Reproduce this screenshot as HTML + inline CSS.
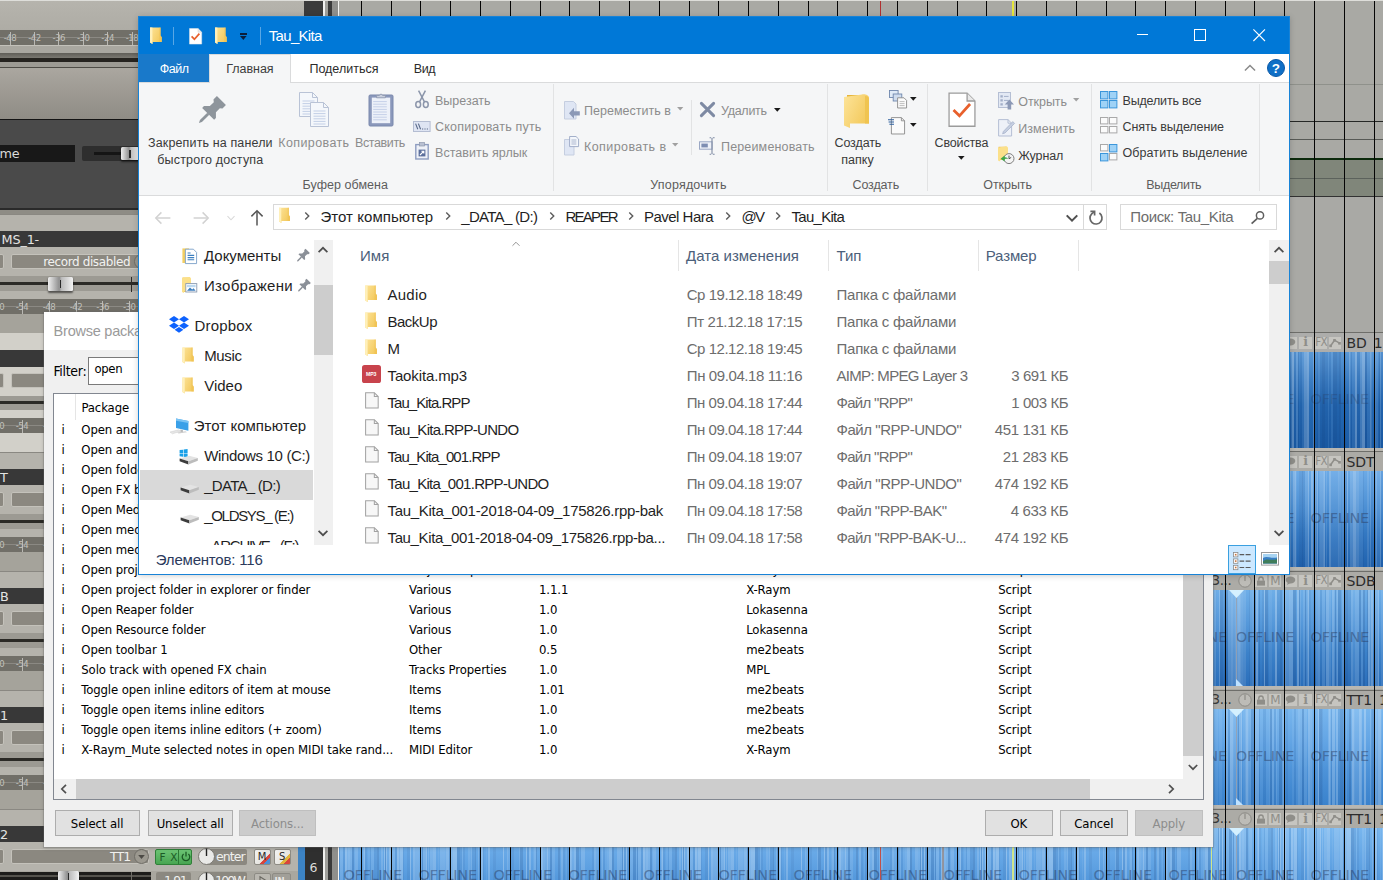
<!DOCTYPE html>
<html><head><meta charset="utf-8"><title>Tau_Kita</title>
<style>
html,body{margin:0;padding:0;background:#a9a9a4;}
body{width:1383px;height:880px;overflow:hidden;position:relative;font-family:"Liberation Sans",sans-serif;}
.a{position:absolute;box-sizing:border-box;}
.t{position:absolute;white-space:pre;}
svg{position:absolute;overflow:visible;}
.off{font-family:'DejaVu Sans',sans-serif;font-size:14.5px;line-height:15px;color:rgba(40,52,84,.62);letter-spacing:-0.3px;}
</style></head>
<body>
<div class="a" style="left:0px;top:0px;width:1383px;height:880px;background:#a9a9a4;overflow:hidden;">
<div class="a" style="left:339.4px;top:84px;width:1043.6px;height:1px;background:#8f918b;"></div>
<div class="a" style="left:339.4px;top:121px;width:1043.6px;height:1px;background:#262826;"></div>
<div class="a" style="left:339.4px;top:139.3px;width:1043.6px;height:1px;background:#585a56;"></div>
<div class="a" style="left:339.4px;top:158.3px;width:1043.6px;height:39px;background:#80867a;"></div>
<div class="a" style="left:339.4px;top:158px;width:1043.6px;height:1.5px;background:#0c2a0c;"></div>
<div class="a" style="left:339.4px;top:177.5px;width:1043.6px;height:1px;background:#5c625c;"></div>
<div class="a" style="left:339.4px;top:196.3px;width:1043.6px;height:1px;background:#323232;"></div>
<div class="a" style="left:339.4px;top:197.3px;width:1043.6px;height:135px;background:#a9a9a5;"></div>
<div class="a" style="left:339.4px;top:332.3px;width:1043.6px;height:20px;background:#adadab;"></div>
<div class="a" style="left:339.4px;top:332.3px;width:1043.6px;height:1px;background:#6e6e6a;"></div>
<div class="a" style="left:339.4px;top:351.9px;width:1043.6px;height:96.2px;overflow:hidden;background:linear-gradient(90deg,rgba(255,255,255,0.26) 0px,rgba(255,255,255,0.26) 1px,rgba(255,255,255,0) 1px,rgba(255,255,255,0) 3.5px,rgba(0,20,70,0.06) 3.5px,rgba(0,20,70,0.06) 5px,rgba(255,255,255,0.14) 5px,rgba(255,255,255,0.14) 7.5px,rgba(255,255,255,0) 7.5px,rgba(255,255,255,0) 8.8px,rgba(0,20,70,0.06) 8.8px,rgba(0,20,70,0.06) 11.8px,rgba(255,255,255,0) 11.8px,rgba(255,255,255,0) 13.8px,rgba(255,255,255,0.2) 13.8px,rgba(255,255,255,0.2) 15.3px,rgba(255,255,255,0.26) 15.3px,rgba(255,255,255,0.26) 16.3px,rgba(255,255,255,0.2) 16.3px,rgba(255,255,255,0.2) 17.6px,rgba(255,255,255,0.26) 17.6px,rgba(255,255,255,0.26) 19.6px,rgba(255,255,255,0.14) 19.6px,rgba(255,255,255,0.14) 21.1px,rgba(255,255,255,0.06) 21.1px,rgba(255,255,255,0.06) 23.6px,rgba(255,255,255,0.2) 23.6px,rgba(255,255,255,0.2) 25.1px,rgba(0,20,70,0.06) 25.1px,rgba(0,20,70,0.06) 26.4px,rgba(0,20,70,0.06) 26.4px,rgba(0,20,70,0.06) 27.9px,rgba(255,255,255,0) 27.9px,rgba(255,255,255,0) 29.9px,rgba(255,255,255,0.1) 29.9px,rgba(255,255,255,0.1) 30.9px,rgba(255,255,255,0.1) 30.9px,rgba(255,255,255,0.1) 32.2px,rgba(0,20,70,0.12) 32.2px,rgba(0,20,70,0.12) 33.7px,rgba(255,255,255,0.1) 33.7px,rgba(255,255,255,0.1) 35.7px,rgba(0,20,70,0.12) 35.7px,rgba(0,20,70,0.12) 37.7px,rgba(255,255,255,0.26) 37.7px,rgba(255,255,255,0.26) 40.2px,rgba(255,255,255,0) 40.2px,rgba(255,255,255,0) 42.7px,rgba(0,20,70,0.12) 42.7px,rgba(0,20,70,0.12) 44.7px,rgba(255,255,255,0.1) 44.7px,rgba(255,255,255,0.1) 46px,rgba(255,255,255,0.1) 46px,rgba(255,255,255,0.1) 48px,rgba(255,255,255,0) 48px,rgba(255,255,255,0) 49px,rgba(255,255,255,0.14) 49px,rgba(255,255,255,0.14) 51.5px,rgba(0,20,70,0.12) 51.5px,rgba(0,20,70,0.12) 52.5px,rgba(255,255,255,0.06) 52.5px,rgba(255,255,255,0.06) 53.5px,rgba(255,255,255,0.2) 53.5px,rgba(255,255,255,0.2) 55.5px,rgba(255,255,255,0) 55.5px,rgba(255,255,255,0) 56.8px,rgba(0,20,70,0.06) 56.8px,rgba(0,20,70,0.06) 57.8px,rgba(255,255,255,0.1) 57.8px,rgba(255,255,255,0.1) 59.1px,rgba(255,255,255,0.26) 59.1px,rgba(255,255,255,0.26) 61.1px,rgba(0,20,70,0.06) 61.1px,rgba(0,20,70,0.06) 63.1px,rgba(255,255,255,0.14) 63.1px,rgba(255,255,255,0.14) 64.6px,rgba(0,20,70,0.12) 64.6px,rgba(0,20,70,0.12) 65.9px,rgba(255,255,255,0) 65.9px,rgba(255,255,255,0) 67.2px,rgba(0,20,70,0.06) 67.2px,rgba(0,20,70,0.06) 68.7px,rgba(255,255,255,0.06) 68.7px,rgba(255,255,255,0.06) 70.2px,rgba(255,255,255,0.06) 70.2px,rgba(255,255,255,0.06) 71.5px,rgba(255,255,255,0.2) 71.5px,rgba(255,255,255,0.2) 74px,rgba(255,255,255,0.26) 74px,rgba(255,255,255,0.26) 76px,rgba(255,255,255,0) 76px,rgba(255,255,255,0) 77.5px,rgba(255,255,255,0) 77.5px,rgba(255,255,255,0) 80.5px,rgba(255,255,255,0.2) 80.5px,rgba(255,255,255,0.2) 82.5px,rgba(255,255,255,0) 82.5px,rgba(255,255,255,0) 84px,rgba(0,20,70,0.06) 84px,rgba(0,20,70,0.06) 85.5px,rgba(255,255,255,0.06) 85.5px,rgba(255,255,255,0.06) 87.5px,rgba(0,20,70,0.06) 87.5px,rgba(0,20,70,0.06) 89.5px,rgba(0,20,70,0.12) 89.5px,rgba(0,20,70,0.12) 91px,rgba(0,20,70,0.12) 91px,rgba(0,20,70,0.12) 92.5px,rgba(0,20,70,0.06) 92.5px,rgba(0,20,70,0.06) 95px,rgba(255,255,255,0.06) 95px,rgba(255,255,255,0.06) 96px,rgba(0,20,70,0.06) 96px,rgba(0,20,70,0.06) 98.5px,rgba(255,255,255,0.06) 98.5px,rgba(255,255,255,0.06) 100.5px,rgba(0,20,70,0.12) 100.5px,rgba(0,20,70,0.12) 102.5px,rgba(0,20,70,0.12) 102.5px,rgba(0,20,70,0.12) 104.5px,rgba(0,20,70,0.06) 104.5px,rgba(0,20,70,0.06) 106.5px,rgba(0,20,70,0.12) 106.5px,rgba(0,20,70,0.12) 107.8px,rgba(255,255,255,0) 107.8px,rgba(255,255,255,0) 110.3px,rgba(255,255,255,0) 110.3px,rgba(255,255,255,0) 112.3px,rgba(0,20,70,0.06) 112.3px,rgba(0,20,70,0.06) 113.3px,rgba(255,255,255,0) 113.3px,rgba(255,255,255,0) 116.3px,rgba(255,255,255,0.2) 116.3px,rgba(255,255,255,0.2) 117.3px,rgba(255,255,255,0.06) 117.3px,rgba(255,255,255,0.06) 118.3px,rgba(0,20,70,0.06) 118.3px,rgba(0,20,70,0.06) 119.3px,rgba(255,255,255,0.06) 119.3px,rgba(255,255,255,0.06) 121.8px,rgba(255,255,255,0.26) 121.8px,rgba(255,255,255,0.26) 124.3px,rgba(0,20,70,0.06) 124.3px,rgba(0,20,70,0.06) 127.3px,rgba(255,255,255,0.14) 127.3px,rgba(255,255,255,0.14) 129.3px,rgba(255,255,255,0.26) 129.3px,rgba(255,255,255,0.26) 131.8px,rgba(0,20,70,0.12) 131.8px,rgba(0,20,70,0.12) 133.8px,rgba(255,255,255,0.06) 133.8px,rgba(255,255,255,0.06) 136.8px,rgba(255,255,255,0.2) 136.8px,rgba(255,255,255,0.2) 138.3px,rgba(255,255,255,0.1) 138.3px,rgba(255,255,255,0.1) 139.3px,rgba(255,255,255,0) 139.3px,rgba(255,255,255,0) 141.8px,rgba(255,255,255,0.14) 141.8px,rgba(255,255,255,0.14) 142.8px,rgba(255,255,255,0.1) 142.8px,rgba(255,255,255,0.1) 144.8px,rgba(255,255,255,0) 144.8px,rgba(255,255,255,0) 146.3px,rgba(0,20,70,0.12) 146.3px,rgba(0,20,70,0.12) 147.3px,rgba(255,255,255,0.14) 147.3px,rgba(255,255,255,0.14) 148.3px,rgba(0,20,70,0.06) 148.3px,rgba(0,20,70,0.06) 149.6px,rgba(255,255,255,0.2) 149.6px,rgba(255,255,255,0.2) 150.9px,rgba(255,255,255,0.1) 150.9px,rgba(255,255,255,0.1) 152.9px,rgba(255,255,255,0.06) 152.9px,rgba(255,255,255,0.06) 154.9px,rgba(255,255,255,0.1) 154.9px,rgba(255,255,255,0.1) 155.9px,rgba(255,255,255,0.1) 155.9px,rgba(255,255,255,0.1) 157.9px,rgba(255,255,255,0.14) 157.9px,rgba(255,255,255,0.14) 158.9px,rgba(0,20,70,0.12) 158.9px,rgba(0,20,70,0.12) 161.4px,rgba(0,20,70,0.06) 161.4px,rgba(0,20,70,0.06) 163.4px,rgba(255,255,255,0.1) 163.4px,rgba(255,255,255,0.1) 166.4px,rgba(255,255,255,0.2) 166.4px,rgba(255,255,255,0.2) 167.9px,rgba(255,255,255,0) 167.9px,rgba(255,255,255,0) 168.9px,rgba(255,255,255,0.26) 168.9px,rgba(255,255,255,0.26) 170.4px,rgba(255,255,255,0.26) 170.4px,rgba(255,255,255,0.26) 172.4px,rgba(255,255,255,0) 172.4px,rgba(255,255,255,0) 173.9px,rgba(255,255,255,0) 173.9px,rgba(255,255,255,0) 175.9px,rgba(255,255,255,0.2) 175.9px,rgba(255,255,255,0.2) 176.9px,rgba(255,255,255,0.2) 176.9px,rgba(255,255,255,0.2) 178.4px,rgba(255,255,255,0.26) 178.4px,rgba(255,255,255,0.26) 180.9px,rgba(255,255,255,0.14) 180.9px,rgba(255,255,255,0.14) 182.4px,rgba(255,255,255,0.14) 182.4px,rgba(255,255,255,0.14) 184.9px,rgba(0,20,70,0.06) 184.9px,rgba(0,20,70,0.06) 187.9px,rgba(255,255,255,0.14) 187.9px,rgba(255,255,255,0.14) 190.9px,rgba(0,20,70,0.06) 190.9px,rgba(0,20,70,0.06) 192.9px,rgba(255,255,255,0.2) 192.9px,rgba(255,255,255,0.2) 194.9px,rgba(0,20,70,0.06) 194.9px,rgba(0,20,70,0.06) 196.4px,rgba(0,20,70,0.06) 196.4px,rgba(0,20,70,0.06) 198.9px,rgba(255,255,255,0) 198.9px,rgba(255,255,255,0) 201.4px,rgba(255,255,255,0.2) 201.4px,rgba(255,255,255,0.2) 204.4px,rgba(255,255,255,0.06) 204.4px,rgba(255,255,255,0.06) 206.4px,rgba(255,255,255,0) 206.4px,rgba(255,255,255,0) 208.4px,rgba(255,255,255,0) 208.4px,rgba(255,255,255,0) 209.9px,rgba(255,255,255,0.2) 209.9px,rgba(255,255,255,0.2) 211.9px,rgba(255,255,255,0.26) 211.9px,rgba(255,255,255,0.26) 212.9px,rgba(255,255,255,0.14) 212.9px,rgba(255,255,255,0.14) 214.9px,rgba(255,255,255,0.1) 214.9px,rgba(255,255,255,0.1) 216.2px,rgba(255,255,255,0.14) 216.2px,rgba(255,255,255,0.14) 217.5px,rgba(0,20,70,0.12) 217.5px,rgba(0,20,70,0.12) 218.5px,rgba(255,255,255,0.1) 218.5px,rgba(255,255,255,0.1) 219.5px,rgba(255,255,255,0.26) 219.5px,rgba(255,255,255,0.26) 220.5px,rgba(0,20,70,0.06) 220.5px,rgba(0,20,70,0.06) 222px,rgba(255,255,255,0.26) 222px,rgba(255,255,255,0.26) 223px,rgba(255,255,255,0.2) 223px,rgba(255,255,255,0.2) 224.5px,rgba(0,20,70,0.12) 224.5px,rgba(0,20,70,0.12) 226px,rgba(255,255,255,0) 226px,rgba(255,255,255,0) 228px,rgba(255,255,255,0) 228px,rgba(255,255,255,0) 229px,rgba(255,255,255,0.26) 229px,rgba(255,255,255,0.26) 231px,rgba(255,255,255,0.06) 231px,rgba(255,255,255,0.06) 233px,rgba(255,255,255,0) 233px,rgba(255,255,255,0) 234.3px,rgba(255,255,255,0.06) 234.3px,rgba(255,255,255,0.06) 236.3px,rgba(0,20,70,0.12) 236.3px,rgba(0,20,70,0.12) 237.3px,rgba(255,255,255,0.2) 237.3px,rgba(255,255,255,0.2) 240.3px,rgba(255,255,255,0.26) 240.3px,rgba(255,255,255,0.26) 241.3px,rgba(255,255,255,0.2) 241.3px,rgba(255,255,255,0.2) 243.8px,rgba(255,255,255,0.06) 243.8px,rgba(255,255,255,0.06) 244.8px,rgba(0,20,70,0.06) 244.8px,rgba(0,20,70,0.06) 247.3px,rgba(0,20,70,0.06) 247.3px,rgba(0,20,70,0.06) 249.8px,rgba(255,255,255,0.2) 249.8px,rgba(255,255,255,0.2) 251.1px,rgba(255,255,255,0.2) 251.1px,rgba(255,255,255,0.2) 253.1px,rgba(0,20,70,0.12) 253.1px,rgba(0,20,70,0.12) 256.1px,rgba(255,255,255,0.26) 256.1px,rgba(255,255,255,0.26) 258.6px,rgba(255,255,255,0) 258.6px,rgba(255,255,255,0) 260.1px,rgba(255,255,255,0.06) 260.1px,rgba(255,255,255,0.06) 262.1px,rgba(255,255,255,0.06) 262.1px,rgba(255,255,255,0.06) 263.1px,rgba(255,255,255,0.26) 263.1px,rgba(255,255,255,0.26) 264.6px,rgba(0,20,70,0.12) 264.6px,rgba(0,20,70,0.12) 266.6px,rgba(255,255,255,0) 266.6px,rgba(255,255,255,0) 268.6px,rgba(255,255,255,0.06) 268.6px,rgba(255,255,255,0.06) 269.6px,rgba(255,255,255,0.1) 269.6px,rgba(255,255,255,0.1) 271.1px,rgba(255,255,255,0.06) 271.1px,rgba(255,255,255,0.06) 272.1px,rgba(255,255,255,0.2) 272.1px,rgba(255,255,255,0.2) 273.1px,rgba(255,255,255,0.14) 273.1px,rgba(255,255,255,0.14) 274.4px,rgba(255,255,255,0.26) 274.4px,rgba(255,255,255,0.26) 275.4px,rgba(255,255,255,0) 275.4px,rgba(255,255,255,0) 277.4px,rgba(255,255,255,0.1) 277.4px,rgba(255,255,255,0.1) 279.4px,rgba(255,255,255,0.06) 279.4px,rgba(255,255,255,0.06) 281.9px,rgba(255,255,255,0.26) 281.9px,rgba(255,255,255,0.26) 283.2px,rgba(255,255,255,0.2) 283.2px,rgba(255,255,255,0.2) 285.7px,rgba(255,255,255,0.06) 285.7px,rgba(255,255,255,0.06) 286.7px,rgba(255,255,255,0.26) 286.7px,rgba(255,255,255,0.26) 288px,rgba(0,20,70,0.12) 288px,rgba(0,20,70,0.12) 289.3px,rgba(255,255,255,0) 289.3px,rgba(255,255,255,0) 291.3px,rgba(255,255,255,0) 291.3px,rgba(255,255,255,0) 293.3px,rgba(255,255,255,0) 293.3px,rgba(255,255,255,0) 294.8px,rgba(255,255,255,0.14) 294.8px,rgba(255,255,255,0.14) 296.8px,rgba(0,20,70,0.12) 296.8px,rgba(0,20,70,0.12) 298px),linear-gradient(180deg,#5a98d6 0%,#3a7cc2 30%,#2468b2 55%,#1b5ca6 100%);background-size:298px 100%,100% 100%;background-repeat:repeat-x,no-repeat;">
<span class="t off" style="left:4px;top:40.2px;opacity:0.42">OFFLINE</span>
<span class="t off" style="left:79px;top:40.2px;opacity:0.42">OFFLINE</span>
<span class="t off" style="left:154px;top:40.2px;opacity:0.42">OFFLINE</span>
<span class="t off" style="left:229px;top:40.2px;opacity:0.42">OFFLINE</span>
<span class="t off" style="left:304px;top:40.2px;opacity:0.42">OFFLINE</span>
<span class="t off" style="left:379px;top:40.2px;opacity:0.42">OFFLINE</span>
<span class="t off" style="left:454px;top:40.2px;opacity:0.42">OFFLINE</span>
<span class="t off" style="left:529px;top:40.2px;opacity:0.42">OFFLINE</span>
<span class="t off" style="left:604px;top:40.2px;opacity:0.42">OFFLINE</span>
<span class="t off" style="left:679px;top:40.2px;opacity:0.42">OFFLINE</span>
<span class="t off" style="left:754px;top:40.2px;opacity:0.42">OFFLINE</span>
<span class="t off" style="left:829px;top:40.2px;opacity:0.42">OFFLINE</span>
<span class="t off" style="left:896.4px;top:40.2px;opacity:0.42">OFFLINE</span>
<span class="t off" style="left:971.2px;top:40.2px;opacity:0.42">OFFLINE</span>
<span class="t off" style="left:1046px;top:40.2px;opacity:0.42">OFFLINE</span>
</div>
<span class="t" id="t1" style="top:336.17px;font-size:13.5px;line-height:13.5px;color:#3a3a3a;font-family:'DejaVu Sans',sans-serif;left:1211.5px;letter-spacing:-0.4px;">3...</span>
<svg style="left:1237.7px;top:335.5px" width="14" height="14" viewBox="0 0 14 14"><circle cx="7" cy="7" r="6.2" fill="#bdbcb7" stroke="#8c8b86" stroke-width="1"/><path d="M7 1.6V7" stroke="#8c8b86" stroke-width="1.2"/></svg>
<div class="a" style="left:1255.4px;top:336.5px;width:11.6px;height:12px;background:#c6c5c0;"></div>
<svg style="left:1256.2px;top:337.5px" width="10" height="10" viewBox="0 0 10 10"><rect x="1" y="4.6" width="8" height="5" fill="#8f8e89"/><path d="M2.8 4.8V3.2a2.2 2.2 0 0 1 4.4 0V4.8" fill="none" stroke="#8f8e89" stroke-width="1.4"/></svg>
<div class="a" style="left:1268.6px;top:336.5px;width:12.4px;height:12px;background:#c6c5c0;"></div>
<span class="t" id="t2" style="top:336.94px;font-size:12px;line-height:12px;color:#8f8e89;font-family:'DejaVu Sans',sans-serif;left:1270.2px;">M</span>
<div class="a" style="left:1284.2px;top:336.5px;width:12.4px;height:12px;background:#c6c5c0;"></div>
<svg style="left:1285px;top:337.5px" width="11" height="10" viewBox="0 0 11 10"><ellipse cx="5.5" cy="4" rx="4.8" ry="3.4" fill="#8f8e89"/><path d="M3 6l-1 3 3.5-2z" fill="#8f8e89"/></svg>
<div class="a" style="left:1299.2px;top:336.5px;width:12.6px;height:12px;background:#c6c5c0;"></div>
<span class="t" id="t3" style="top:336.32px;font-size:12.5px;line-height:12.5px;color:#8f8e89;font-family:'DejaVu Serif',serif;font-weight:bold;left:1303.2px;">i</span>
<div class="a" style="left:1314.4px;top:336.5px;width:12.2px;height:12px;background:#c6c5c0;"></div>
<span class="t" id="t4" style="top:337.17px;font-size:11.5px;line-height:11.5px;color:#8f8e89;font-family:'DejaVu Sans Condensed','DejaVu Sans',sans-serif;left:1315.2px;letter-spacing:-0.6px;">FX</span>
<div class="a" style="left:1328.8px;top:336.5px;width:12.6px;height:12px;background:#c6c5c0;"></div>
<svg style="left:1329.2px;top:337.5px" width="12" height="10" viewBox="0 0 12 10"><path d="M1.5 8L5.5 2.2L10.5 5.2" fill="none" stroke="#8f8e89" stroke-width="1.5"/><rect x="0.3" y="6.6" width="2.6" height="2.6" fill="#8f8e89"/><rect x="4.2" y="1" width="2.6" height="2.6" fill="#8f8e89"/><rect x="9.2" y="4" width="2.6" height="2.6" fill="#8f8e89"/></svg>
<span class="t" id="t5" style="top:335.85px;font-size:14px;line-height:14px;color:#2c2c2c;font-family:'DejaVu Sans',sans-serif;left:1346.4px;word-spacing:2.5px;">BD 1</span>
<div class="a" style="left:1235.6px;top:351.9px;width:1.6px;height:96.2px;background:rgba(150,160,175,.85);"></div>
<svg style="left:1228.9px;top:351.9px" width="15" height="8" viewBox="0 0 15 8"><path d="M0 0H15L7.5 8z" fill="#d4f0ff"/></svg>
<svg style="left:1236.4px;top:441.1px" width="7" height="7" viewBox="0 0 7 7"><path d="M0 0L7 7H0z" fill="#bfe2ff"/></svg>
<div class="a" style="left:339.4px;top:447.8px;width:1043.6px;height:3.6px;background:#b9b7b1;"></div>
<div class="a" style="left:339.4px;top:451.4px;width:1043.6px;height:20px;background:#acaba6;"></div>
<div class="a" style="left:339.4px;top:451.4px;width:1043.6px;height:1px;background:#6e6e6a;"></div>
<div class="a" style="left:339.4px;top:471px;width:1043.6px;height:96.2px;overflow:hidden;background:linear-gradient(90deg,rgba(0,20,70,0.12) 0px,rgba(0,20,70,0.12) 2.5px,rgba(0,20,70,0.06) 2.5px,rgba(0,20,70,0.06) 5px,rgba(255,255,255,0.1) 5px,rgba(255,255,255,0.1) 8px,rgba(0,20,70,0.12) 8px,rgba(0,20,70,0.12) 9.3px,rgba(255,255,255,0.06) 9.3px,rgba(255,255,255,0.06) 11.8px,rgba(0,20,70,0.06) 11.8px,rgba(0,20,70,0.06) 12.8px,rgba(255,255,255,0.06) 12.8px,rgba(255,255,255,0.06) 14.3px,rgba(0,20,70,0.12) 14.3px,rgba(0,20,70,0.12) 15.3px,rgba(255,255,255,0.26) 15.3px,rgba(255,255,255,0.26) 16.3px,rgba(255,255,255,0.06) 16.3px,rgba(255,255,255,0.06) 18.8px,rgba(0,20,70,0.12) 18.8px,rgba(0,20,70,0.12) 19.8px,rgba(255,255,255,0) 19.8px,rgba(255,255,255,0) 20.8px,rgba(255,255,255,0.1) 20.8px,rgba(255,255,255,0.1) 21.8px,rgba(255,255,255,0) 21.8px,rgba(255,255,255,0) 23.3px,rgba(255,255,255,0.2) 23.3px,rgba(255,255,255,0.2) 25.8px,rgba(255,255,255,0.1) 25.8px,rgba(255,255,255,0.1) 28.3px,rgba(255,255,255,0.1) 28.3px,rgba(255,255,255,0.1) 31.3px,rgba(0,20,70,0.06) 31.3px,rgba(0,20,70,0.06) 32.8px,rgba(255,255,255,0) 32.8px,rgba(255,255,255,0) 33.8px,rgba(255,255,255,0.14) 33.8px,rgba(255,255,255,0.14) 36.3px,rgba(0,20,70,0.12) 36.3px,rgba(0,20,70,0.12) 38.3px,rgba(255,255,255,0.14) 38.3px,rgba(255,255,255,0.14) 39.3px,rgba(255,255,255,0.1) 39.3px,rgba(255,255,255,0.1) 41.3px,rgba(255,255,255,0.14) 41.3px,rgba(255,255,255,0.14) 44.3px,rgba(255,255,255,0) 44.3px,rgba(255,255,255,0) 45.3px,rgba(255,255,255,0.26) 45.3px,rgba(255,255,255,0.26) 46.3px,rgba(255,255,255,0.14) 46.3px,rgba(255,255,255,0.14) 47.3px,rgba(255,255,255,0) 47.3px,rgba(255,255,255,0) 49.3px,rgba(255,255,255,0) 49.3px,rgba(255,255,255,0) 50.3px,rgba(255,255,255,0.1) 50.3px,rgba(255,255,255,0.1) 51.8px,rgba(0,20,70,0.06) 51.8px,rgba(0,20,70,0.06) 52.8px,rgba(255,255,255,0.26) 52.8px,rgba(255,255,255,0.26) 54.8px,rgba(255,255,255,0) 54.8px,rgba(255,255,255,0) 56.8px,rgba(255,255,255,0.14) 56.8px,rgba(255,255,255,0.14) 58.3px,rgba(255,255,255,0) 58.3px,rgba(255,255,255,0) 60.3px,rgba(255,255,255,0.2) 60.3px,rgba(255,255,255,0.2) 61.8px,rgba(255,255,255,0.26) 61.8px,rgba(255,255,255,0.26) 62.8px,rgba(255,255,255,0.06) 62.8px,rgba(255,255,255,0.06) 63.8px,rgba(255,255,255,0) 63.8px,rgba(255,255,255,0) 65.3px,rgba(255,255,255,0) 65.3px,rgba(255,255,255,0) 66.3px,rgba(0,20,70,0.06) 66.3px,rgba(0,20,70,0.06) 68.8px,rgba(0,20,70,0.12) 68.8px,rgba(0,20,70,0.12) 70.1px,rgba(0,20,70,0.06) 70.1px,rgba(0,20,70,0.06) 71.6px,rgba(255,255,255,0.1) 71.6px,rgba(255,255,255,0.1) 74.6px,rgba(255,255,255,0.26) 74.6px,rgba(255,255,255,0.26) 75.9px,rgba(255,255,255,0) 75.9px,rgba(255,255,255,0) 77.9px,rgba(255,255,255,0.26) 77.9px,rgba(255,255,255,0.26) 79.9px,rgba(255,255,255,0) 79.9px,rgba(255,255,255,0) 81.4px,rgba(255,255,255,0.14) 81.4px,rgba(255,255,255,0.14) 82.9px,rgba(255,255,255,0.1) 82.9px,rgba(255,255,255,0.1) 83.9px,rgba(255,255,255,0.26) 83.9px,rgba(255,255,255,0.26) 85.2px,rgba(255,255,255,0) 85.2px,rgba(255,255,255,0) 86.2px,rgba(255,255,255,0.1) 86.2px,rgba(255,255,255,0.1) 87.5px,rgba(255,255,255,0.14) 87.5px,rgba(255,255,255,0.14) 90px,rgba(255,255,255,0.2) 90px,rgba(255,255,255,0.2) 91px,rgba(255,255,255,0.26) 91px,rgba(255,255,255,0.26) 92.5px,rgba(255,255,255,0) 92.5px,rgba(255,255,255,0) 93.5px,rgba(255,255,255,0.1) 93.5px,rgba(255,255,255,0.1) 94.5px,rgba(255,255,255,0) 94.5px,rgba(255,255,255,0) 96px,rgba(255,255,255,0.2) 96px,rgba(255,255,255,0.2) 98px,rgba(255,255,255,0.06) 98px,rgba(255,255,255,0.06) 100.5px,rgba(255,255,255,0.06) 100.5px,rgba(255,255,255,0.06) 103px,rgba(255,255,255,0.06) 103px,rgba(255,255,255,0.06) 105px,rgba(255,255,255,0.14) 105px,rgba(255,255,255,0.14) 106.3px,rgba(255,255,255,0.1) 106.3px,rgba(255,255,255,0.1) 107.8px,rgba(255,255,255,0.06) 107.8px,rgba(255,255,255,0.06) 109.3px,rgba(255,255,255,0.1) 109.3px,rgba(255,255,255,0.1) 112.3px,rgba(0,20,70,0.06) 112.3px,rgba(0,20,70,0.06) 114.3px,rgba(255,255,255,0.26) 114.3px,rgba(255,255,255,0.26) 115.3px,rgba(255,255,255,0) 115.3px,rgba(255,255,255,0) 116.3px,rgba(255,255,255,0) 116.3px,rgba(255,255,255,0) 117.3px,rgba(255,255,255,0.14) 117.3px,rgba(255,255,255,0.14) 120.3px,rgba(255,255,255,0.26) 120.3px,rgba(255,255,255,0.26) 121.8px,rgba(255,255,255,0.26) 121.8px,rgba(255,255,255,0.26) 123.3px,rgba(255,255,255,0.14) 123.3px,rgba(255,255,255,0.14) 125.8px,rgba(255,255,255,0.06) 125.8px,rgba(255,255,255,0.06) 128.8px,rgba(255,255,255,0.06) 128.8px,rgba(255,255,255,0.06) 129.8px,rgba(0,20,70,0.06) 129.8px,rgba(0,20,70,0.06) 131.3px,rgba(255,255,255,0) 131.3px,rgba(255,255,255,0) 134.3px,rgba(255,255,255,0.1) 134.3px,rgba(255,255,255,0.1) 135.8px,rgba(255,255,255,0) 135.8px,rgba(255,255,255,0) 137.3px,rgba(255,255,255,0.14) 137.3px,rgba(255,255,255,0.14) 138.3px,rgba(0,20,70,0.06) 138.3px,rgba(0,20,70,0.06) 140.3px,rgba(255,255,255,0) 140.3px,rgba(255,255,255,0) 141.8px,rgba(255,255,255,0.06) 141.8px,rgba(255,255,255,0.06) 142.8px,rgba(255,255,255,0.2) 142.8px,rgba(255,255,255,0.2) 144.3px,rgba(255,255,255,0.06) 144.3px,rgba(255,255,255,0.06) 147.3px,rgba(255,255,255,0.2) 147.3px,rgba(255,255,255,0.2) 148.3px,rgba(0,20,70,0.06) 148.3px,rgba(0,20,70,0.06) 149.6px,rgba(0,20,70,0.12) 149.6px,rgba(0,20,70,0.12) 151.6px,rgba(255,255,255,0) 151.6px,rgba(255,255,255,0) 152.9px,rgba(0,20,70,0.06) 152.9px,rgba(0,20,70,0.06) 153.9px,rgba(255,255,255,0.14) 153.9px,rgba(255,255,255,0.14) 155.9px,rgba(255,255,255,0) 155.9px,rgba(255,255,255,0) 156.9px,rgba(0,20,70,0.06) 156.9px,rgba(0,20,70,0.06) 157.9px,rgba(255,255,255,0.14) 157.9px,rgba(255,255,255,0.14) 158.9px,rgba(255,255,255,0.06) 158.9px,rgba(255,255,255,0.06) 160.9px,rgba(255,255,255,0) 160.9px,rgba(255,255,255,0) 161.9px,rgba(0,20,70,0.12) 161.9px,rgba(0,20,70,0.12) 164.4px,rgba(255,255,255,0) 164.4px,rgba(255,255,255,0) 166.4px,rgba(255,255,255,0.2) 166.4px,rgba(255,255,255,0.2) 167.7px,rgba(255,255,255,0) 167.7px,rgba(255,255,255,0) 169.7px,rgba(255,255,255,0) 169.7px,rgba(255,255,255,0) 172.2px,rgba(255,255,255,0) 172.2px,rgba(255,255,255,0) 174.2px,rgba(255,255,255,0) 174.2px,rgba(255,255,255,0) 176.7px,rgba(255,255,255,0.26) 176.7px,rgba(255,255,255,0.26) 178.7px,rgba(255,255,255,0) 178.7px,rgba(255,255,255,0) 179.7px,rgba(255,255,255,0) 179.7px,rgba(255,255,255,0) 180.7px,rgba(255,255,255,0.14) 180.7px,rgba(255,255,255,0.14) 181.7px,rgba(255,255,255,0.2) 181.7px,rgba(255,255,255,0.2) 183.7px,rgba(0,20,70,0.06) 183.7px,rgba(0,20,70,0.06) 185.7px,rgba(0,20,70,0.06) 185.7px,rgba(0,20,70,0.06) 188.2px,rgba(255,255,255,0) 188.2px,rgba(255,255,255,0) 191.2px,rgba(0,20,70,0.12) 191.2px,rgba(0,20,70,0.12) 194.2px,rgba(255,255,255,0.14) 194.2px,rgba(255,255,255,0.14) 195.2px,rgba(0,20,70,0.06) 195.2px,rgba(0,20,70,0.06) 196.2px,rgba(255,255,255,0.1) 196.2px,rgba(255,255,255,0.1) 197.2px,rgba(0,20,70,0.06) 197.2px,rgba(0,20,70,0.06) 198.2px,rgba(255,255,255,0.14) 198.2px,rgba(255,255,255,0.14) 200.7px,rgba(255,255,255,0.2) 200.7px,rgba(255,255,255,0.2) 201.7px,rgba(255,255,255,0.06) 201.7px,rgba(255,255,255,0.06) 203.2px,rgba(0,20,70,0.12) 203.2px,rgba(0,20,70,0.12) 204.7px,rgba(255,255,255,0.2) 204.7px,rgba(255,255,255,0.2) 206px,rgba(0,20,70,0.06) 206px,rgba(0,20,70,0.06) 208.5px,rgba(255,255,255,0.2) 208.5px,rgba(255,255,255,0.2) 210px,rgba(255,255,255,0.14) 210px,rgba(255,255,255,0.14) 212px,rgba(255,255,255,0.26) 212px,rgba(255,255,255,0.26) 213.5px,rgba(255,255,255,0.1) 213.5px,rgba(255,255,255,0.1) 215px,rgba(255,255,255,0.1) 215px,rgba(255,255,255,0.1) 217px,rgba(255,255,255,0.1) 217px,rgba(255,255,255,0.1) 219px,rgba(255,255,255,0.06) 219px,rgba(255,255,255,0.06) 220.3px,rgba(255,255,255,0.2) 220.3px,rgba(255,255,255,0.2) 222.8px,rgba(255,255,255,0) 222.8px,rgba(255,255,255,0) 223.8px,rgba(255,255,255,0.06) 223.8px,rgba(255,255,255,0.06) 225.3px,rgba(0,20,70,0.06) 225.3px,rgba(0,20,70,0.06) 226.3px,rgba(255,255,255,0.14) 226.3px,rgba(255,255,255,0.14) 228.8px,rgba(255,255,255,0.26) 228.8px,rgba(255,255,255,0.26) 230.3px,rgba(0,20,70,0.12) 230.3px,rgba(0,20,70,0.12) 232.3px,rgba(255,255,255,0.2) 232.3px,rgba(255,255,255,0.2) 234.8px,rgba(255,255,255,0.2) 234.8px,rgba(255,255,255,0.2) 237.3px,rgba(255,255,255,0) 237.3px,rgba(255,255,255,0) 238.3px,rgba(255,255,255,0) 238.3px,rgba(255,255,255,0) 239.8px,rgba(255,255,255,0.2) 239.8px,rgba(255,255,255,0.2) 241.3px,rgba(255,255,255,0) 241.3px,rgba(255,255,255,0) 242.8px,rgba(255,255,255,0.26) 242.8px,rgba(255,255,255,0.26) 244.1px,rgba(255,255,255,0.1) 244.1px,rgba(255,255,255,0.1) 246.6px,rgba(255,255,255,0.14) 246.6px,rgba(255,255,255,0.14) 247.6px,rgba(255,255,255,0.06) 247.6px,rgba(255,255,255,0.06) 249.1px,rgba(255,255,255,0) 249.1px,rgba(255,255,255,0) 250.1px,rgba(255,255,255,0) 250.1px,rgba(255,255,255,0) 252.6px,rgba(255,255,255,0.2) 252.6px,rgba(255,255,255,0.2) 255.6px,rgba(255,255,255,0.1) 255.6px,rgba(255,255,255,0.1) 256.6px,rgba(0,20,70,0.06) 256.6px,rgba(0,20,70,0.06) 258.1px,rgba(255,255,255,0.06) 258.1px,rgba(255,255,255,0.06) 259.6px,rgba(0,20,70,0.06) 259.6px,rgba(0,20,70,0.06) 260.6px,rgba(255,255,255,0) 260.6px,rgba(255,255,255,0) 263.6px,rgba(255,255,255,0.1) 263.6px,rgba(255,255,255,0.1) 264.9px,rgba(255,255,255,0.2) 264.9px,rgba(255,255,255,0.2) 266.4px,rgba(0,20,70,0.12) 266.4px,rgba(0,20,70,0.12) 269.4px,rgba(255,255,255,0.06) 269.4px,rgba(255,255,255,0.06) 272.4px,rgba(255,255,255,0.1) 272.4px,rgba(255,255,255,0.1) 274.4px,rgba(255,255,255,0.26) 274.4px,rgba(255,255,255,0.26) 275.4px,rgba(255,255,255,0.06) 275.4px,rgba(255,255,255,0.06) 277.4px,rgba(0,20,70,0.06) 277.4px,rgba(0,20,70,0.06) 279.9px,rgba(255,255,255,0) 279.9px,rgba(255,255,255,0) 281.4px,rgba(0,20,70,0.12) 281.4px,rgba(0,20,70,0.12) 283.4px,rgba(255,255,255,0.2) 283.4px,rgba(255,255,255,0.2) 286.4px,rgba(255,255,255,0.2) 286.4px,rgba(255,255,255,0.2) 288.9px,rgba(255,255,255,0) 288.9px,rgba(255,255,255,0) 290.4px,rgba(255,255,255,0.1) 290.4px,rgba(255,255,255,0.1) 291.4px,rgba(255,255,255,0.26) 291.4px,rgba(255,255,255,0.26) 292.9px,rgba(255,255,255,0.14) 292.9px,rgba(255,255,255,0.14) 293.9px,rgba(255,255,255,0.2) 293.9px,rgba(255,255,255,0.2) 296.9px,rgba(255,255,255,0) 296.9px,rgba(255,255,255,0) 298px),linear-gradient(180deg,#6caae6 0%,#4f92d6 35%,#3378c2 65%,#2062ae 100%);background-size:298px 100%,100% 100%;background-repeat:repeat-x,no-repeat;">
<span class="t off" style="left:4px;top:40.2px;opacity:0.72">OFFLINE</span>
<span class="t off" style="left:79px;top:40.2px;opacity:0.72">OFFLINE</span>
<span class="t off" style="left:154px;top:40.2px;opacity:0.72">OFFLINE</span>
<span class="t off" style="left:229px;top:40.2px;opacity:0.72">OFFLINE</span>
<span class="t off" style="left:304px;top:40.2px;opacity:0.72">OFFLINE</span>
<span class="t off" style="left:379px;top:40.2px;opacity:0.72">OFFLINE</span>
<span class="t off" style="left:454px;top:40.2px;opacity:0.72">OFFLINE</span>
<span class="t off" style="left:529px;top:40.2px;opacity:0.72">OFFLINE</span>
<span class="t off" style="left:604px;top:40.2px;opacity:0.72">OFFLINE</span>
<span class="t off" style="left:679px;top:40.2px;opacity:0.72">OFFLINE</span>
<span class="t off" style="left:754px;top:40.2px;opacity:0.72">OFFLINE</span>
<span class="t off" style="left:829px;top:40.2px;opacity:0.72">OFFLINE</span>
<span class="t off" style="left:896.4px;top:40.2px;opacity:0.72">OFFLINE</span>
<span class="t off" style="left:971.2px;top:40.2px;opacity:0.72">OFFLINE</span>
<span class="t off" style="left:1046px;top:40.2px;opacity:0.72">OFFLINE</span>
</div>
<span class="t" id="t6" style="top:455.27px;font-size:13.5px;line-height:13.5px;color:#3a3a3a;font-family:'DejaVu Sans',sans-serif;left:1211.5px;letter-spacing:-0.4px;">3...</span>
<svg style="left:1237.7px;top:454.6px" width="14" height="14" viewBox="0 0 14 14"><circle cx="7" cy="7" r="6.2" fill="#bdbcb7" stroke="#8c8b86" stroke-width="1"/><path d="M7 1.6V7" stroke="#8c8b86" stroke-width="1.2"/></svg>
<div class="a" style="left:1255.4px;top:455.6px;width:11.6px;height:12px;background:#c6c5c0;"></div>
<svg style="left:1256.2px;top:456.6px" width="10" height="10" viewBox="0 0 10 10"><rect x="1" y="4.6" width="8" height="5" fill="#8f8e89"/><path d="M2.8 4.8V3.2a2.2 2.2 0 0 1 4.4 0V4.8" fill="none" stroke="#8f8e89" stroke-width="1.4"/></svg>
<div class="a" style="left:1268.6px;top:455.6px;width:12.4px;height:12px;background:#c6c5c0;"></div>
<span class="t" id="t7" style="top:456.04px;font-size:12px;line-height:12px;color:#8f8e89;font-family:'DejaVu Sans',sans-serif;left:1270.2px;">M</span>
<div class="a" style="left:1284.2px;top:455.6px;width:12.4px;height:12px;background:#c6c5c0;"></div>
<svg style="left:1285px;top:456.6px" width="11" height="10" viewBox="0 0 11 10"><ellipse cx="5.5" cy="4" rx="4.8" ry="3.4" fill="#8f8e89"/><path d="M3 6l-1 3 3.5-2z" fill="#8f8e89"/></svg>
<div class="a" style="left:1299.2px;top:455.6px;width:12.6px;height:12px;background:#c6c5c0;"></div>
<span class="t" id="t8" style="top:455.42px;font-size:12.5px;line-height:12.5px;color:#8f8e89;font-family:'DejaVu Serif',serif;font-weight:bold;left:1303.2px;">i</span>
<div class="a" style="left:1314.4px;top:455.6px;width:12.2px;height:12px;background:#c6c5c0;"></div>
<span class="t" id="t9" style="top:456.27px;font-size:11.5px;line-height:11.5px;color:#8f8e89;font-family:'DejaVu Sans Condensed','DejaVu Sans',sans-serif;left:1315.2px;letter-spacing:-0.6px;">FX</span>
<div class="a" style="left:1328.8px;top:455.6px;width:12.6px;height:12px;background:#c6c5c0;"></div>
<svg style="left:1329.2px;top:456.6px" width="12" height="10" viewBox="0 0 12 10"><path d="M1.5 8L5.5 2.2L10.5 5.2" fill="none" stroke="#8f8e89" stroke-width="1.5"/><rect x="0.3" y="6.6" width="2.6" height="2.6" fill="#8f8e89"/><rect x="4.2" y="1" width="2.6" height="2.6" fill="#8f8e89"/><rect x="9.2" y="4" width="2.6" height="2.6" fill="#8f8e89"/></svg>
<span class="t" id="t10" style="top:454.95px;font-size:14px;line-height:14px;color:#2c2c2c;font-family:'DejaVu Sans',sans-serif;left:1346.4px;word-spacing:2.5px;">SDT</span>
<div class="a" style="left:1235.6px;top:471px;width:1.6px;height:96.2px;background:rgba(150,160,175,.85);"></div>
<svg style="left:1228.9px;top:471px" width="15" height="8" viewBox="0 0 15 8"><path d="M0 0H15L7.5 8z" fill="#d4f0ff"/></svg>
<svg style="left:1236.4px;top:560.2px" width="7" height="7" viewBox="0 0 7 7"><path d="M0 0L7 7H0z" fill="#bfe2ff"/></svg>
<div class="a" style="left:339.4px;top:566.9px;width:1043.6px;height:3.6px;background:#b9b7b1;"></div>
<div class="a" style="left:339.4px;top:570.5px;width:1043.6px;height:20px;background:#acaba6;"></div>
<div class="a" style="left:339.4px;top:570.5px;width:1043.6px;height:1px;background:#6e6e6a;"></div>
<div class="a" style="left:339.4px;top:590.1px;width:1043.6px;height:96.2px;overflow:hidden;background:linear-gradient(90deg,rgba(255,255,255,0.14) 0px,rgba(255,255,255,0.14) 2.5px,rgba(255,255,255,0.2) 2.5px,rgba(255,255,255,0.2) 5.5px,rgba(255,255,255,0.26) 5.5px,rgba(255,255,255,0.26) 6.8px,rgba(255,255,255,0.2) 6.8px,rgba(255,255,255,0.2) 7.8px,rgba(255,255,255,0.14) 7.8px,rgba(255,255,255,0.14) 10.3px,rgba(255,255,255,0.1) 10.3px,rgba(255,255,255,0.1) 12.8px,rgba(255,255,255,0) 12.8px,rgba(255,255,255,0) 15.8px,rgba(0,20,70,0.06) 15.8px,rgba(0,20,70,0.06) 17.1px,rgba(255,255,255,0.06) 17.1px,rgba(255,255,255,0.06) 19.1px,rgba(255,255,255,0.1) 19.1px,rgba(255,255,255,0.1) 21.1px,rgba(255,255,255,0.1) 21.1px,rgba(255,255,255,0.1) 22.1px,rgba(0,20,70,0.12) 22.1px,rgba(0,20,70,0.12) 23.1px,rgba(255,255,255,0.26) 23.1px,rgba(255,255,255,0.26) 25.1px,rgba(255,255,255,0) 25.1px,rgba(255,255,255,0) 26.1px,rgba(0,20,70,0.12) 26.1px,rgba(0,20,70,0.12) 27.1px,rgba(255,255,255,0) 27.1px,rgba(255,255,255,0) 28.6px,rgba(0,20,70,0.06) 28.6px,rgba(0,20,70,0.06) 30.6px,rgba(255,255,255,0.26) 30.6px,rgba(255,255,255,0.26) 31.6px,rgba(0,20,70,0.12) 31.6px,rgba(0,20,70,0.12) 32.9px,rgba(0,20,70,0.12) 32.9px,rgba(0,20,70,0.12) 34.9px,rgba(255,255,255,0) 34.9px,rgba(255,255,255,0) 36.2px,rgba(255,255,255,0.06) 36.2px,rgba(255,255,255,0.06) 39.2px,rgba(255,255,255,0) 39.2px,rgba(255,255,255,0) 42.2px,rgba(255,255,255,0.26) 42.2px,rgba(255,255,255,0.26) 44.2px,rgba(0,20,70,0.06) 44.2px,rgba(0,20,70,0.06) 46.7px,rgba(0,20,70,0.12) 46.7px,rgba(0,20,70,0.12) 48.7px,rgba(255,255,255,0) 48.7px,rgba(255,255,255,0) 49.7px,rgba(255,255,255,0.14) 49.7px,rgba(255,255,255,0.14) 51.2px,rgba(255,255,255,0.2) 51.2px,rgba(255,255,255,0.2) 53.2px,rgba(255,255,255,0.14) 53.2px,rgba(255,255,255,0.14) 55.2px,rgba(255,255,255,0.14) 55.2px,rgba(255,255,255,0.14) 56.2px,rgba(255,255,255,0.2) 56.2px,rgba(255,255,255,0.2) 57.7px,rgba(255,255,255,0.2) 57.7px,rgba(255,255,255,0.2) 59.7px,rgba(0,20,70,0.12) 59.7px,rgba(0,20,70,0.12) 62.7px,rgba(255,255,255,0) 62.7px,rgba(255,255,255,0) 64px,rgba(255,255,255,0.26) 64px,rgba(255,255,255,0.26) 66px,rgba(0,20,70,0.12) 66px,rgba(0,20,70,0.12) 67px,rgba(255,255,255,0.1) 67px,rgba(255,255,255,0.1) 68px,rgba(255,255,255,0) 68px,rgba(255,255,255,0) 70px,rgba(255,255,255,0.1) 70px,rgba(255,255,255,0.1) 72px,rgba(0,20,70,0.12) 72px,rgba(0,20,70,0.12) 73px,rgba(255,255,255,0.06) 73px,rgba(255,255,255,0.06) 74.5px,rgba(255,255,255,0.14) 74.5px,rgba(255,255,255,0.14) 75.5px,rgba(255,255,255,0.26) 75.5px,rgba(255,255,255,0.26) 76.5px,rgba(0,20,70,0.06) 76.5px,rgba(0,20,70,0.06) 78px,rgba(255,255,255,0) 78px,rgba(255,255,255,0) 80px,rgba(0,20,70,0.06) 80px,rgba(0,20,70,0.06) 83px,rgba(255,255,255,0.1) 83px,rgba(255,255,255,0.1) 85px,rgba(255,255,255,0.14) 85px,rgba(255,255,255,0.14) 87px,rgba(0,20,70,0.06) 87px,rgba(0,20,70,0.06) 89.5px,rgba(255,255,255,0.1) 89.5px,rgba(255,255,255,0.1) 92px,rgba(0,20,70,0.06) 92px,rgba(0,20,70,0.06) 93.3px,rgba(255,255,255,0.2) 93.3px,rgba(255,255,255,0.2) 96.3px,rgba(255,255,255,0.1) 96.3px,rgba(255,255,255,0.1) 97.6px,rgba(255,255,255,0) 97.6px,rgba(255,255,255,0) 99.1px,rgba(255,255,255,0.2) 99.1px,rgba(255,255,255,0.2) 100.6px,rgba(255,255,255,0.1) 100.6px,rgba(255,255,255,0.1) 101.9px,rgba(0,20,70,0.12) 101.9px,rgba(0,20,70,0.12) 102.9px,rgba(255,255,255,0.1) 102.9px,rgba(255,255,255,0.1) 103.9px,rgba(255,255,255,0.2) 103.9px,rgba(255,255,255,0.2) 104.9px,rgba(0,20,70,0.12) 104.9px,rgba(0,20,70,0.12) 107.9px,rgba(255,255,255,0) 107.9px,rgba(255,255,255,0) 109.2px,rgba(255,255,255,0.14) 109.2px,rgba(255,255,255,0.14) 111.2px,rgba(255,255,255,0.1) 111.2px,rgba(255,255,255,0.1) 112.2px,rgba(0,20,70,0.12) 112.2px,rgba(0,20,70,0.12) 115.2px,rgba(0,20,70,0.06) 115.2px,rgba(0,20,70,0.06) 117.7px,rgba(255,255,255,0.14) 117.7px,rgba(255,255,255,0.14) 119.7px,rgba(255,255,255,0.06) 119.7px,rgba(255,255,255,0.06) 122.2px,rgba(255,255,255,0.14) 122.2px,rgba(255,255,255,0.14) 124.7px,rgba(255,255,255,0.14) 124.7px,rgba(255,255,255,0.14) 125.7px,rgba(0,20,70,0.12) 125.7px,rgba(0,20,70,0.12) 127.7px,rgba(255,255,255,0.1) 127.7px,rgba(255,255,255,0.1) 130.2px,rgba(0,20,70,0.12) 130.2px,rgba(0,20,70,0.12) 131.7px,rgba(255,255,255,0) 131.7px,rgba(255,255,255,0) 133.2px,rgba(255,255,255,0) 133.2px,rgba(255,255,255,0) 134.2px,rgba(0,20,70,0.12) 134.2px,rgba(0,20,70,0.12) 135.5px,rgba(255,255,255,0.26) 135.5px,rgba(255,255,255,0.26) 137px,rgba(255,255,255,0.1) 137px,rgba(255,255,255,0.1) 138.3px,rgba(255,255,255,0.26) 138.3px,rgba(255,255,255,0.26) 139.8px,rgba(255,255,255,0) 139.8px,rgba(255,255,255,0) 142.3px,rgba(255,255,255,0.14) 142.3px,rgba(255,255,255,0.14) 145.3px,rgba(255,255,255,0.26) 145.3px,rgba(255,255,255,0.26) 146.3px,rgba(255,255,255,0) 146.3px,rgba(255,255,255,0) 148.3px,rgba(255,255,255,0.1) 148.3px,rgba(255,255,255,0.1) 150.3px,rgba(255,255,255,0.2) 150.3px,rgba(255,255,255,0.2) 153.3px,rgba(255,255,255,0.26) 153.3px,rgba(255,255,255,0.26) 155.3px,rgba(255,255,255,0) 155.3px,rgba(255,255,255,0) 156.6px,rgba(255,255,255,0) 156.6px,rgba(255,255,255,0) 157.9px,rgba(255,255,255,0) 157.9px,rgba(255,255,255,0) 158.9px,rgba(0,20,70,0.12) 158.9px,rgba(0,20,70,0.12) 160.9px,rgba(255,255,255,0.26) 160.9px,rgba(255,255,255,0.26) 162.4px,rgba(255,255,255,0.2) 162.4px,rgba(255,255,255,0.2) 163.4px,rgba(255,255,255,0.14) 163.4px,rgba(255,255,255,0.14) 164.9px,rgba(0,20,70,0.12) 164.9px,rgba(0,20,70,0.12) 166.4px,rgba(255,255,255,0) 166.4px,rgba(255,255,255,0) 168.9px,rgba(0,20,70,0.12) 168.9px,rgba(0,20,70,0.12) 170.4px,rgba(255,255,255,0.1) 170.4px,rgba(255,255,255,0.1) 172.4px,rgba(255,255,255,0.26) 172.4px,rgba(255,255,255,0.26) 173.4px,rgba(255,255,255,0.2) 173.4px,rgba(255,255,255,0.2) 175.4px,rgba(255,255,255,0.2) 175.4px,rgba(255,255,255,0.2) 176.4px,rgba(255,255,255,0) 176.4px,rgba(255,255,255,0) 177.7px,rgba(255,255,255,0.14) 177.7px,rgba(255,255,255,0.14) 179.2px,rgba(255,255,255,0.26) 179.2px,rgba(255,255,255,0.26) 180.5px,rgba(255,255,255,0.06) 180.5px,rgba(255,255,255,0.06) 182.5px,rgba(255,255,255,0.1) 182.5px,rgba(255,255,255,0.1) 183.5px,rgba(0,20,70,0.06) 183.5px,rgba(0,20,70,0.06) 186px,rgba(255,255,255,0.06) 186px,rgba(255,255,255,0.06) 188.5px,rgba(255,255,255,0.2) 188.5px,rgba(255,255,255,0.2) 189.5px,rgba(255,255,255,0.1) 189.5px,rgba(255,255,255,0.1) 192px,rgba(255,255,255,0) 192px,rgba(255,255,255,0) 194px,rgba(255,255,255,0) 194px,rgba(255,255,255,0) 195.5px,rgba(255,255,255,0.2) 195.5px,rgba(255,255,255,0.2) 197.5px,rgba(255,255,255,0.1) 197.5px,rgba(255,255,255,0.1) 199px,rgba(255,255,255,0.14) 199px,rgba(255,255,255,0.14) 201px,rgba(0,20,70,0.12) 201px,rgba(0,20,70,0.12) 202.5px,rgba(0,20,70,0.12) 202.5px,rgba(0,20,70,0.12) 203.8px,rgba(255,255,255,0.06) 203.8px,rgba(255,255,255,0.06) 205.8px,rgba(0,20,70,0.06) 205.8px,rgba(0,20,70,0.06) 208.8px,rgba(0,20,70,0.12) 208.8px,rgba(0,20,70,0.12) 210.8px,rgba(0,20,70,0.06) 210.8px,rgba(0,20,70,0.06) 212.3px,rgba(255,255,255,0) 212.3px,rgba(255,255,255,0) 214.8px,rgba(255,255,255,0.26) 214.8px,rgba(255,255,255,0.26) 216.3px,rgba(255,255,255,0.26) 216.3px,rgba(255,255,255,0.26) 219.3px,rgba(0,20,70,0.06) 219.3px,rgba(0,20,70,0.06) 222.3px,rgba(255,255,255,0) 222.3px,rgba(255,255,255,0) 223.3px,rgba(255,255,255,0.14) 223.3px,rgba(255,255,255,0.14) 226.3px,rgba(255,255,255,0) 226.3px,rgba(255,255,255,0) 228.3px,rgba(0,20,70,0.06) 228.3px,rgba(0,20,70,0.06) 230.3px,rgba(255,255,255,0.14) 230.3px,rgba(255,255,255,0.14) 232.3px,rgba(255,255,255,0.06) 232.3px,rgba(255,255,255,0.06) 233.6px,rgba(255,255,255,0.1) 233.6px,rgba(255,255,255,0.1) 236.1px,rgba(255,255,255,0.06) 236.1px,rgba(255,255,255,0.06) 239.1px,rgba(0,20,70,0.06) 239.1px,rgba(0,20,70,0.06) 240.6px,rgba(255,255,255,0.26) 240.6px,rgba(255,255,255,0.26) 241.6px,rgba(255,255,255,0.14) 241.6px,rgba(255,255,255,0.14) 243.6px,rgba(255,255,255,0.14) 243.6px,rgba(255,255,255,0.14) 245.6px,rgba(255,255,255,0.2) 245.6px,rgba(255,255,255,0.2) 247.6px,rgba(255,255,255,0.06) 247.6px,rgba(255,255,255,0.06) 248.9px,rgba(255,255,255,0) 248.9px,rgba(255,255,255,0) 250.4px,rgba(255,255,255,0.26) 250.4px,rgba(255,255,255,0.26) 252.4px,rgba(255,255,255,0.14) 252.4px,rgba(255,255,255,0.14) 254.4px,rgba(255,255,255,0.26) 254.4px,rgba(255,255,255,0.26) 256.4px,rgba(0,20,70,0.06) 256.4px,rgba(0,20,70,0.06) 258.4px,rgba(255,255,255,0.26) 258.4px,rgba(255,255,255,0.26) 260.4px,rgba(255,255,255,0.06) 260.4px,rgba(255,255,255,0.06) 261.7px,rgba(255,255,255,0.14) 261.7px,rgba(255,255,255,0.14) 263.2px,rgba(255,255,255,0.14) 263.2px,rgba(255,255,255,0.14) 264.2px,rgba(255,255,255,0) 264.2px,rgba(255,255,255,0) 267.2px,rgba(255,255,255,0.14) 267.2px,rgba(255,255,255,0.14) 269.2px,rgba(255,255,255,0.14) 269.2px,rgba(255,255,255,0.14) 270.5px,rgba(255,255,255,0) 270.5px,rgba(255,255,255,0) 272px,rgba(255,255,255,0.14) 272px,rgba(255,255,255,0.14) 275px,rgba(255,255,255,0) 275px,rgba(255,255,255,0) 276px,rgba(255,255,255,0.1) 276px,rgba(255,255,255,0.1) 277.3px,rgba(255,255,255,0.1) 277.3px,rgba(255,255,255,0.1) 278.6px,rgba(255,255,255,0.1) 278.6px,rgba(255,255,255,0.1) 280.1px,rgba(255,255,255,0.14) 280.1px,rgba(255,255,255,0.14) 281.4px,rgba(255,255,255,0) 281.4px,rgba(255,255,255,0) 284.4px,rgba(255,255,255,0.2) 284.4px,rgba(255,255,255,0.2) 285.4px,rgba(0,20,70,0.12) 285.4px,rgba(0,20,70,0.12) 287.9px,rgba(0,20,70,0.06) 287.9px,rgba(0,20,70,0.06) 289.4px,rgba(0,20,70,0.12) 289.4px,rgba(0,20,70,0.12) 290.4px,rgba(255,255,255,0.06) 290.4px,rgba(255,255,255,0.06) 291.4px,rgba(0,20,70,0.12) 291.4px,rgba(0,20,70,0.12) 293.4px,rgba(255,255,255,0.14) 293.4px,rgba(255,255,255,0.14) 295.9px,rgba(255,255,255,0.2) 295.9px,rgba(255,255,255,0.2) 298px),linear-gradient(180deg,#6eaee8 0%,#5598da 35%,#3c82ca 65%,#2a6eba 100%);background-size:298px 100%,100% 100%;background-repeat:repeat-x,no-repeat;">
<span class="t off" style="left:4px;top:40.2px;opacity:0.72">OFFLINE</span>
<span class="t off" style="left:79px;top:40.2px;opacity:0.72">OFFLINE</span>
<span class="t off" style="left:154px;top:40.2px;opacity:0.72">OFFLINE</span>
<span class="t off" style="left:229px;top:40.2px;opacity:0.72">OFFLINE</span>
<span class="t off" style="left:304px;top:40.2px;opacity:0.72">OFFLINE</span>
<span class="t off" style="left:379px;top:40.2px;opacity:0.72">OFFLINE</span>
<span class="t off" style="left:454px;top:40.2px;opacity:0.72">OFFLINE</span>
<span class="t off" style="left:529px;top:40.2px;opacity:0.72">OFFLINE</span>
<span class="t off" style="left:604px;top:40.2px;opacity:0.72">OFFLINE</span>
<span class="t off" style="left:679px;top:40.2px;opacity:0.72">OFFLINE</span>
<span class="t off" style="left:754px;top:40.2px;opacity:0.72">OFFLINE</span>
<span class="t off" style="left:829px;top:40.2px;opacity:0.72">OFFLINE</span>
<span class="t off" style="left:896.4px;top:40.2px;opacity:0.72">OFFLINE</span>
<span class="t off" style="left:971.2px;top:40.2px;opacity:0.72">OFFLINE</span>
<span class="t off" style="left:1046px;top:40.2px;opacity:0.72">OFFLINE</span>
</div>
<span class="t" id="t11" style="top:574.37px;font-size:13.5px;line-height:13.5px;color:#3a3a3a;font-family:'DejaVu Sans',sans-serif;left:1211.5px;letter-spacing:-0.4px;">3...</span>
<svg style="left:1237.7px;top:573.7px" width="14" height="14" viewBox="0 0 14 14"><circle cx="7" cy="7" r="6.2" fill="#bdbcb7" stroke="#8c8b86" stroke-width="1"/><path d="M7 1.6V7" stroke="#8c8b86" stroke-width="1.2"/></svg>
<div class="a" style="left:1255.4px;top:574.7px;width:11.6px;height:12px;background:#c6c5c0;"></div>
<svg style="left:1256.2px;top:575.7px" width="10" height="10" viewBox="0 0 10 10"><rect x="1" y="4.6" width="8" height="5" fill="#8f8e89"/><path d="M2.8 4.8V3.2a2.2 2.2 0 0 1 4.4 0V4.8" fill="none" stroke="#8f8e89" stroke-width="1.4"/></svg>
<div class="a" style="left:1268.6px;top:574.7px;width:12.4px;height:12px;background:#c6c5c0;"></div>
<span class="t" id="t12" style="top:575.14px;font-size:12px;line-height:12px;color:#8f8e89;font-family:'DejaVu Sans',sans-serif;left:1270.2px;">M</span>
<div class="a" style="left:1284.2px;top:574.7px;width:12.4px;height:12px;background:#c6c5c0;"></div>
<svg style="left:1285px;top:575.7px" width="11" height="10" viewBox="0 0 11 10"><ellipse cx="5.5" cy="4" rx="4.8" ry="3.4" fill="#8f8e89"/><path d="M3 6l-1 3 3.5-2z" fill="#8f8e89"/></svg>
<div class="a" style="left:1299.2px;top:574.7px;width:12.6px;height:12px;background:#c6c5c0;"></div>
<span class="t" id="t13" style="top:574.52px;font-size:12.5px;line-height:12.5px;color:#8f8e89;font-family:'DejaVu Serif',serif;font-weight:bold;left:1303.2px;">i</span>
<div class="a" style="left:1314.4px;top:574.7px;width:12.2px;height:12px;background:#c6c5c0;"></div>
<span class="t" id="t14" style="top:575.37px;font-size:11.5px;line-height:11.5px;color:#8f8e89;font-family:'DejaVu Sans Condensed','DejaVu Sans',sans-serif;left:1315.2px;letter-spacing:-0.6px;">FX</span>
<div class="a" style="left:1328.8px;top:574.7px;width:12.6px;height:12px;background:#c6c5c0;"></div>
<svg style="left:1329.2px;top:575.7px" width="12" height="10" viewBox="0 0 12 10"><path d="M1.5 8L5.5 2.2L10.5 5.2" fill="none" stroke="#8f8e89" stroke-width="1.5"/><rect x="0.3" y="6.6" width="2.6" height="2.6" fill="#8f8e89"/><rect x="4.2" y="1" width="2.6" height="2.6" fill="#8f8e89"/><rect x="9.2" y="4" width="2.6" height="2.6" fill="#8f8e89"/></svg>
<span class="t" id="t15" style="top:574.05px;font-size:14px;line-height:14px;color:#2c2c2c;font-family:'DejaVu Sans',sans-serif;left:1346.4px;word-spacing:2.5px;">SDB</span>
<div class="a" style="left:1235.6px;top:590.1px;width:1.6px;height:96.2px;background:rgba(150,160,175,.85);"></div>
<svg style="left:1228.9px;top:590.1px" width="15" height="8" viewBox="0 0 15 8"><path d="M0 0H15L7.5 8z" fill="#d4f0ff"/></svg>
<svg style="left:1236.4px;top:679.3px" width="7" height="7" viewBox="0 0 7 7"><path d="M0 0L7 7H0z" fill="#bfe2ff"/></svg>
<div class="a" style="left:339.4px;top:685.9px;width:1043.6px;height:3.6px;background:#b9b7b1;"></div>
<div class="a" style="left:339.4px;top:689.5px;width:1043.6px;height:20px;background:#acaba6;"></div>
<div class="a" style="left:339.4px;top:689.5px;width:1043.6px;height:1px;background:#6e6e6a;"></div>
<div class="a" style="left:339.4px;top:709.1px;width:1043.6px;height:96.2px;overflow:hidden;background:linear-gradient(90deg,rgba(255,255,255,0.14) 0px,rgba(255,255,255,0.14) 1.5px,rgba(255,255,255,0.1) 1.5px,rgba(255,255,255,0.1) 2.8px,rgba(255,255,255,0.1) 2.8px,rgba(255,255,255,0.1) 4.1px,rgba(255,255,255,0.06) 4.1px,rgba(255,255,255,0.06) 5.4px,rgba(0,20,70,0.12) 5.4px,rgba(0,20,70,0.12) 6.4px,rgba(255,255,255,0.14) 6.4px,rgba(255,255,255,0.14) 7.9px,rgba(255,255,255,0.26) 7.9px,rgba(255,255,255,0.26) 8.9px,rgba(255,255,255,0) 8.9px,rgba(255,255,255,0) 10.2px,rgba(255,255,255,0.06) 10.2px,rgba(255,255,255,0.06) 11.7px,rgba(255,255,255,0.14) 11.7px,rgba(255,255,255,0.14) 12.7px,rgba(255,255,255,0.26) 12.7px,rgba(255,255,255,0.26) 15.2px,rgba(255,255,255,0.14) 15.2px,rgba(255,255,255,0.14) 16.5px,rgba(255,255,255,0.1) 16.5px,rgba(255,255,255,0.1) 18.5px,rgba(0,20,70,0.12) 18.5px,rgba(0,20,70,0.12) 21px,rgba(255,255,255,0.2) 21px,rgba(255,255,255,0.2) 23px,rgba(255,255,255,0.2) 23px,rgba(255,255,255,0.2) 25px,rgba(255,255,255,0.2) 25px,rgba(255,255,255,0.2) 26px,rgba(0,20,70,0.06) 26px,rgba(0,20,70,0.06) 27.5px,rgba(255,255,255,0.06) 27.5px,rgba(255,255,255,0.06) 30.5px,rgba(0,20,70,0.06) 30.5px,rgba(0,20,70,0.06) 33px,rgba(255,255,255,0.06) 33px,rgba(255,255,255,0.06) 36px,rgba(255,255,255,0.1) 36px,rgba(255,255,255,0.1) 37.5px,rgba(0,20,70,0.12) 37.5px,rgba(0,20,70,0.12) 38.8px,rgba(255,255,255,0.14) 38.8px,rgba(255,255,255,0.14) 40.8px,rgba(0,20,70,0.06) 40.8px,rgba(0,20,70,0.06) 42.8px,rgba(255,255,255,0.14) 42.8px,rgba(255,255,255,0.14) 44.3px,rgba(255,255,255,0.06) 44.3px,rgba(255,255,255,0.06) 46.3px,rgba(0,20,70,0.12) 46.3px,rgba(0,20,70,0.12) 48.8px,rgba(255,255,255,0.1) 48.8px,rgba(255,255,255,0.1) 50.3px,rgba(255,255,255,0.2) 50.3px,rgba(255,255,255,0.2) 51.8px,rgba(255,255,255,0) 51.8px,rgba(255,255,255,0) 53.1px,rgba(0,20,70,0.06) 53.1px,rgba(0,20,70,0.06) 55.1px,rgba(255,255,255,0) 55.1px,rgba(255,255,255,0) 57.1px,rgba(255,255,255,0) 57.1px,rgba(255,255,255,0) 59.1px,rgba(255,255,255,0.06) 59.1px,rgba(255,255,255,0.06) 60.6px,rgba(0,20,70,0.06) 60.6px,rgba(0,20,70,0.06) 63.1px,rgba(255,255,255,0.06) 63.1px,rgba(255,255,255,0.06) 64.6px,rgba(255,255,255,0.14) 64.6px,rgba(255,255,255,0.14) 66.6px,rgba(255,255,255,0.1) 66.6px,rgba(255,255,255,0.1) 68.6px,rgba(0,20,70,0.12) 68.6px,rgba(0,20,70,0.12) 70.6px,rgba(255,255,255,0.1) 70.6px,rgba(255,255,255,0.1) 71.9px,rgba(255,255,255,0.1) 71.9px,rgba(255,255,255,0.1) 74.4px,rgba(255,255,255,0) 74.4px,rgba(255,255,255,0) 75.4px,rgba(255,255,255,0.2) 75.4px,rgba(255,255,255,0.2) 77.4px,rgba(255,255,255,0.14) 77.4px,rgba(255,255,255,0.14) 78.7px,rgba(255,255,255,0.06) 78.7px,rgba(255,255,255,0.06) 80.2px,rgba(255,255,255,0) 80.2px,rgba(255,255,255,0) 83.2px,rgba(255,255,255,0.06) 83.2px,rgba(255,255,255,0.06) 84.7px,rgba(255,255,255,0.26) 84.7px,rgba(255,255,255,0.26) 85.7px,rgba(0,20,70,0.12) 85.7px,rgba(0,20,70,0.12) 88.7px,rgba(0,20,70,0.06) 88.7px,rgba(0,20,70,0.06) 89.7px,rgba(255,255,255,0) 89.7px,rgba(255,255,255,0) 91.7px,rgba(255,255,255,0) 91.7px,rgba(255,255,255,0) 94.7px,rgba(255,255,255,0.14) 94.7px,rgba(255,255,255,0.14) 96px,rgba(255,255,255,0.26) 96px,rgba(255,255,255,0.26) 97px,rgba(255,255,255,0.14) 97px,rgba(255,255,255,0.14) 98.5px,rgba(0,20,70,0.06) 98.5px,rgba(0,20,70,0.06) 99.5px,rgba(255,255,255,0.2) 99.5px,rgba(255,255,255,0.2) 102.5px,rgba(255,255,255,0) 102.5px,rgba(255,255,255,0) 103.5px,rgba(255,255,255,0.2) 103.5px,rgba(255,255,255,0.2) 105.5px,rgba(0,20,70,0.06) 105.5px,rgba(0,20,70,0.06) 106.8px,rgba(0,20,70,0.12) 106.8px,rgba(0,20,70,0.12) 109.8px,rgba(0,20,70,0.06) 109.8px,rgba(0,20,70,0.06) 112.8px,rgba(255,255,255,0.1) 112.8px,rgba(255,255,255,0.1) 114.3px,rgba(255,255,255,0) 114.3px,rgba(255,255,255,0) 115.8px,rgba(0,20,70,0.12) 115.8px,rgba(0,20,70,0.12) 117.8px,rgba(255,255,255,0.06) 117.8px,rgba(255,255,255,0.06) 119.1px,rgba(255,255,255,0.26) 119.1px,rgba(255,255,255,0.26) 120.6px,rgba(255,255,255,0.14) 120.6px,rgba(255,255,255,0.14) 122.1px,rgba(255,255,255,0.1) 122.1px,rgba(255,255,255,0.1) 124.1px,rgba(255,255,255,0.1) 124.1px,rgba(255,255,255,0.1) 126.1px,rgba(255,255,255,0.26) 126.1px,rgba(255,255,255,0.26) 127.6px,rgba(255,255,255,0.2) 127.6px,rgba(255,255,255,0.2) 129.1px,rgba(255,255,255,0) 129.1px,rgba(255,255,255,0) 131.1px,rgba(255,255,255,0.26) 131.1px,rgba(255,255,255,0.26) 133.1px,rgba(255,255,255,0) 133.1px,rgba(255,255,255,0) 135.6px,rgba(255,255,255,0) 135.6px,rgba(255,255,255,0) 136.6px,rgba(255,255,255,0.14) 136.6px,rgba(255,255,255,0.14) 137.6px,rgba(0,20,70,0.06) 137.6px,rgba(0,20,70,0.06) 139.1px,rgba(0,20,70,0.12) 139.1px,rgba(0,20,70,0.12) 141.6px,rgba(255,255,255,0.2) 141.6px,rgba(255,255,255,0.2) 143.6px,rgba(255,255,255,0.14) 143.6px,rgba(255,255,255,0.14) 144.6px,rgba(255,255,255,0.26) 144.6px,rgba(255,255,255,0.26) 147.6px,rgba(255,255,255,0.06) 147.6px,rgba(255,255,255,0.06) 148.9px,rgba(255,255,255,0) 148.9px,rgba(255,255,255,0) 149.9px,rgba(255,255,255,0.06) 149.9px,rgba(255,255,255,0.06) 151.9px,rgba(255,255,255,0.14) 151.9px,rgba(255,255,255,0.14) 153.4px,rgba(255,255,255,0.26) 153.4px,rgba(255,255,255,0.26) 154.9px,rgba(255,255,255,0) 154.9px,rgba(255,255,255,0) 156.4px,rgba(255,255,255,0.06) 156.4px,rgba(255,255,255,0.06) 158.4px,rgba(255,255,255,0.2) 158.4px,rgba(255,255,255,0.2) 159.4px,rgba(0,20,70,0.06) 159.4px,rgba(0,20,70,0.06) 161.9px,rgba(255,255,255,0) 161.9px,rgba(255,255,255,0) 163.9px,rgba(0,20,70,0.12) 163.9px,rgba(0,20,70,0.12) 165.9px,rgba(255,255,255,0.06) 165.9px,rgba(255,255,255,0.06) 167.4px,rgba(255,255,255,0.2) 167.4px,rgba(255,255,255,0.2) 168.4px,rgba(0,20,70,0.12) 168.4px,rgba(0,20,70,0.12) 169.7px,rgba(255,255,255,0) 169.7px,rgba(255,255,255,0) 171px,rgba(255,255,255,0.06) 171px,rgba(255,255,255,0.06) 172.5px,rgba(0,20,70,0.06) 172.5px,rgba(0,20,70,0.06) 173.5px,rgba(255,255,255,0) 173.5px,rgba(255,255,255,0) 175.5px,rgba(255,255,255,0.14) 175.5px,rgba(255,255,255,0.14) 177.5px,rgba(255,255,255,0) 177.5px,rgba(255,255,255,0) 179px,rgba(255,255,255,0.1) 179px,rgba(255,255,255,0.1) 180.5px,rgba(0,20,70,0.06) 180.5px,rgba(0,20,70,0.06) 183.5px,rgba(255,255,255,0.26) 183.5px,rgba(255,255,255,0.26) 185px,rgba(0,20,70,0.12) 185px,rgba(0,20,70,0.12) 186px,rgba(255,255,255,0) 186px,rgba(255,255,255,0) 187px,rgba(0,20,70,0.12) 187px,rgba(0,20,70,0.12) 188.3px,rgba(0,20,70,0.12) 188.3px,rgba(0,20,70,0.12) 190.3px,rgba(255,255,255,0.14) 190.3px,rgba(255,255,255,0.14) 192.3px,rgba(0,20,70,0.12) 192.3px,rgba(0,20,70,0.12) 193.6px,rgba(255,255,255,0.14) 193.6px,rgba(255,255,255,0.14) 195.1px,rgba(255,255,255,0.2) 195.1px,rgba(255,255,255,0.2) 196.1px,rgba(255,255,255,0) 196.1px,rgba(255,255,255,0) 197.1px,rgba(255,255,255,0) 197.1px,rgba(255,255,255,0) 198.4px,rgba(0,20,70,0.12) 198.4px,rgba(0,20,70,0.12) 199.4px,rgba(255,255,255,0) 199.4px,rgba(255,255,255,0) 200.9px,rgba(255,255,255,0.26) 200.9px,rgba(255,255,255,0.26) 202.9px,rgba(255,255,255,0.14) 202.9px,rgba(255,255,255,0.14) 204.2px,rgba(255,255,255,0) 204.2px,rgba(255,255,255,0) 205.2px,rgba(255,255,255,0.14) 205.2px,rgba(255,255,255,0.14) 206.2px,rgba(255,255,255,0.26) 206.2px,rgba(255,255,255,0.26) 208.2px,rgba(255,255,255,0.26) 208.2px,rgba(255,255,255,0.26) 210.7px,rgba(255,255,255,0.06) 210.7px,rgba(255,255,255,0.06) 212.2px,rgba(0,20,70,0.06) 212.2px,rgba(0,20,70,0.06) 213.5px,rgba(255,255,255,0) 213.5px,rgba(255,255,255,0) 215px,rgba(255,255,255,0) 215px,rgba(255,255,255,0) 218px,rgba(255,255,255,0.14) 218px,rgba(255,255,255,0.14) 221px,rgba(255,255,255,0.2) 221px,rgba(255,255,255,0.2) 222.5px,rgba(255,255,255,0.1) 222.5px,rgba(255,255,255,0.1) 224px,rgba(255,255,255,0.26) 224px,rgba(255,255,255,0.26) 226px,rgba(0,20,70,0.06) 226px,rgba(0,20,70,0.06) 227.3px,rgba(255,255,255,0.14) 227.3px,rgba(255,255,255,0.14) 229.3px,rgba(0,20,70,0.06) 229.3px,rgba(0,20,70,0.06) 230.6px,rgba(0,20,70,0.06) 230.6px,rgba(0,20,70,0.06) 233.6px,rgba(255,255,255,0.26) 233.6px,rgba(255,255,255,0.26) 235.1px,rgba(255,255,255,0.1) 235.1px,rgba(255,255,255,0.1) 237.6px,rgba(255,255,255,0) 237.6px,rgba(255,255,255,0) 238.6px,rgba(0,20,70,0.12) 238.6px,rgba(0,20,70,0.12) 241.1px,rgba(255,255,255,0.06) 241.1px,rgba(255,255,255,0.06) 242.4px,rgba(255,255,255,0) 242.4px,rgba(255,255,255,0) 243.4px,rgba(255,255,255,0.14) 243.4px,rgba(255,255,255,0.14) 244.7px,rgba(0,20,70,0.06) 244.7px,rgba(0,20,70,0.06) 245.7px,rgba(255,255,255,0) 245.7px,rgba(255,255,255,0) 248.7px,rgba(255,255,255,0.26) 248.7px,rgba(255,255,255,0.26) 250.2px,rgba(0,20,70,0.12) 250.2px,rgba(0,20,70,0.12) 251.2px,rgba(255,255,255,0.06) 251.2px,rgba(255,255,255,0.06) 252.2px,rgba(255,255,255,0.06) 252.2px,rgba(255,255,255,0.06) 253.7px,rgba(0,20,70,0.12) 253.7px,rgba(0,20,70,0.12) 254.7px,rgba(255,255,255,0.14) 254.7px,rgba(255,255,255,0.14) 256.7px,rgba(0,20,70,0.06) 256.7px,rgba(0,20,70,0.06) 258.2px,rgba(255,255,255,0) 258.2px,rgba(255,255,255,0) 259.2px,rgba(255,255,255,0.2) 259.2px,rgba(255,255,255,0.2) 260.7px,rgba(0,20,70,0.12) 260.7px,rgba(0,20,70,0.12) 263.7px,rgba(0,20,70,0.06) 263.7px,rgba(0,20,70,0.06) 264.7px,rgba(255,255,255,0.1) 264.7px,rgba(255,255,255,0.1) 266.7px,rgba(0,20,70,0.12) 266.7px,rgba(0,20,70,0.12) 267.7px,rgba(255,255,255,0.1) 267.7px,rgba(255,255,255,0.1) 269.7px,rgba(255,255,255,0) 269.7px,rgba(255,255,255,0) 272.7px,rgba(255,255,255,0.2) 272.7px,rgba(255,255,255,0.2) 273.7px,rgba(0,20,70,0.06) 273.7px,rgba(0,20,70,0.06) 275px,rgba(255,255,255,0.06) 275px,rgba(255,255,255,0.06) 277px,rgba(255,255,255,0.1) 277px,rgba(255,255,255,0.1) 279px,rgba(255,255,255,0) 279px,rgba(255,255,255,0) 280.5px,rgba(255,255,255,0.06) 280.5px,rgba(255,255,255,0.06) 282px,rgba(255,255,255,0.06) 282px,rgba(255,255,255,0.06) 283.3px,rgba(255,255,255,0) 283.3px,rgba(255,255,255,0) 284.3px,rgba(255,255,255,0.06) 284.3px,rgba(255,255,255,0.06) 287.3px,rgba(255,255,255,0) 287.3px,rgba(255,255,255,0) 290.3px,rgba(255,255,255,0.2) 290.3px,rgba(255,255,255,0.2) 292.8px,rgba(0,20,70,0.06) 292.8px,rgba(0,20,70,0.06) 294.8px,rgba(255,255,255,0.26) 294.8px,rgba(255,255,255,0.26) 297.8px,rgba(0,20,70,0.06) 297.8px,rgba(0,20,70,0.06) 298px),linear-gradient(180deg,#78b6ee 0%,#62a4e4 35%,#4c92d8 65%,#3a82cc 100%);background-size:298px 100%,100% 100%;background-repeat:repeat-x,no-repeat;">
<span class="t off" style="left:4px;top:40.2px;opacity:0.72">OFFLINE</span>
<span class="t off" style="left:79px;top:40.2px;opacity:0.72">OFFLINE</span>
<span class="t off" style="left:154px;top:40.2px;opacity:0.72">OFFLINE</span>
<span class="t off" style="left:229px;top:40.2px;opacity:0.72">OFFLINE</span>
<span class="t off" style="left:304px;top:40.2px;opacity:0.72">OFFLINE</span>
<span class="t off" style="left:379px;top:40.2px;opacity:0.72">OFFLINE</span>
<span class="t off" style="left:454px;top:40.2px;opacity:0.72">OFFLINE</span>
<span class="t off" style="left:529px;top:40.2px;opacity:0.72">OFFLINE</span>
<span class="t off" style="left:604px;top:40.2px;opacity:0.72">OFFLINE</span>
<span class="t off" style="left:679px;top:40.2px;opacity:0.72">OFFLINE</span>
<span class="t off" style="left:754px;top:40.2px;opacity:0.72">OFFLINE</span>
<span class="t off" style="left:829px;top:40.2px;opacity:0.72">OFFLINE</span>
<span class="t off" style="left:896.4px;top:40.2px;opacity:0.72">OFFLINE</span>
<span class="t off" style="left:971.2px;top:40.2px;opacity:0.72">OFFLINE</span>
<span class="t off" style="left:1046px;top:40.2px;opacity:0.72">OFFLINE</span>
</div>
<span class="t" id="t16" style="top:693.37px;font-size:13.5px;line-height:13.5px;color:#3a3a3a;font-family:'DejaVu Sans',sans-serif;left:1211.5px;letter-spacing:-0.4px;">3...</span>
<svg style="left:1237.7px;top:692.7px" width="14" height="14" viewBox="0 0 14 14"><circle cx="7" cy="7" r="6.2" fill="#bdbcb7" stroke="#8c8b86" stroke-width="1"/><path d="M7 1.6V7" stroke="#8c8b86" stroke-width="1.2"/></svg>
<div class="a" style="left:1255.4px;top:693.7px;width:11.6px;height:12px;background:#c6c5c0;"></div>
<svg style="left:1256.2px;top:694.7px" width="10" height="10" viewBox="0 0 10 10"><rect x="1" y="4.6" width="8" height="5" fill="#8f8e89"/><path d="M2.8 4.8V3.2a2.2 2.2 0 0 1 4.4 0V4.8" fill="none" stroke="#8f8e89" stroke-width="1.4"/></svg>
<div class="a" style="left:1268.6px;top:693.7px;width:12.4px;height:12px;background:#c6c5c0;"></div>
<span class="t" id="t17" style="top:694.14px;font-size:12px;line-height:12px;color:#8f8e89;font-family:'DejaVu Sans',sans-serif;left:1270.2px;">M</span>
<div class="a" style="left:1284.2px;top:693.7px;width:12.4px;height:12px;background:#c6c5c0;"></div>
<svg style="left:1285px;top:694.7px" width="11" height="10" viewBox="0 0 11 10"><ellipse cx="5.5" cy="4" rx="4.8" ry="3.4" fill="#8f8e89"/><path d="M3 6l-1 3 3.5-2z" fill="#8f8e89"/></svg>
<div class="a" style="left:1299.2px;top:693.7px;width:12.6px;height:12px;background:#c6c5c0;"></div>
<span class="t" id="t18" style="top:693.52px;font-size:12.5px;line-height:12.5px;color:#8f8e89;font-family:'DejaVu Serif',serif;font-weight:bold;left:1303.2px;">i</span>
<div class="a" style="left:1314.4px;top:693.7px;width:12.2px;height:12px;background:#c6c5c0;"></div>
<span class="t" id="t19" style="top:694.37px;font-size:11.5px;line-height:11.5px;color:#8f8e89;font-family:'DejaVu Sans Condensed','DejaVu Sans',sans-serif;left:1315.2px;letter-spacing:-0.6px;">FX</span>
<div class="a" style="left:1328.8px;top:693.7px;width:12.6px;height:12px;background:#c6c5c0;"></div>
<svg style="left:1329.2px;top:694.7px" width="12" height="10" viewBox="0 0 12 10"><path d="M1.5 8L5.5 2.2L10.5 5.2" fill="none" stroke="#8f8e89" stroke-width="1.5"/><rect x="0.3" y="6.6" width="2.6" height="2.6" fill="#8f8e89"/><rect x="4.2" y="1" width="2.6" height="2.6" fill="#8f8e89"/><rect x="9.2" y="4" width="2.6" height="2.6" fill="#8f8e89"/></svg>
<span class="t" id="t20" style="top:693.05px;font-size:14px;line-height:14px;color:#2c2c2c;font-family:'DejaVu Sans',sans-serif;left:1346.4px;word-spacing:2.5px;">TT1 1</span>
<div class="a" style="left:1235.6px;top:709.1px;width:1.6px;height:96.2px;background:rgba(150,160,175,.85);"></div>
<svg style="left:1228.9px;top:709.1px" width="15" height="8" viewBox="0 0 15 8"><path d="M0 0H15L7.5 8z" fill="#d4f0ff"/></svg>
<svg style="left:1236.4px;top:798.3px" width="7" height="7" viewBox="0 0 7 7"><path d="M0 0L7 7H0z" fill="#bfe2ff"/></svg>
<div class="a" style="left:339.4px;top:804.9px;width:1043.6px;height:3.6px;background:#b9b7b1;"></div>
<div class="a" style="left:339.4px;top:808.5px;width:1043.6px;height:20px;background:#acaba6;"></div>
<div class="a" style="left:339.4px;top:808.5px;width:1043.6px;height:1px;background:#6e6e6a;"></div>
<div class="a" style="left:339.4px;top:828.1px;width:1043.6px;height:96.2px;overflow:hidden;background:linear-gradient(90deg,rgba(0,20,70,0.12) 0px,rgba(0,20,70,0.12) 1px,rgba(255,255,255,0.14) 1px,rgba(255,255,255,0.14) 2.5px,rgba(255,255,255,0.14) 2.5px,rgba(255,255,255,0.14) 4px,rgba(0,20,70,0.06) 4px,rgba(0,20,70,0.06) 5px,rgba(0,20,70,0.06) 5px,rgba(0,20,70,0.06) 6.5px,rgba(255,255,255,0.26) 6.5px,rgba(255,255,255,0.26) 8.5px,rgba(255,255,255,0.14) 8.5px,rgba(255,255,255,0.14) 9.5px,rgba(255,255,255,0.2) 9.5px,rgba(255,255,255,0.2) 11px,rgba(255,255,255,0.14) 11px,rgba(255,255,255,0.14) 13px,rgba(0,20,70,0.12) 13px,rgba(0,20,70,0.12) 15px,rgba(255,255,255,0.06) 15px,rgba(255,255,255,0.06) 16.3px,rgba(255,255,255,0.14) 16.3px,rgba(255,255,255,0.14) 19.3px,rgba(255,255,255,0) 19.3px,rgba(255,255,255,0) 20.6px,rgba(255,255,255,0) 20.6px,rgba(255,255,255,0) 21.6px,rgba(255,255,255,0) 21.6px,rgba(255,255,255,0) 23.6px,rgba(255,255,255,0.14) 23.6px,rgba(255,255,255,0.14) 24.6px,rgba(255,255,255,0.26) 24.6px,rgba(255,255,255,0.26) 26.1px,rgba(0,20,70,0.06) 26.1px,rgba(0,20,70,0.06) 28.1px,rgba(255,255,255,0) 28.1px,rgba(255,255,255,0) 29.1px,rgba(255,255,255,0.06) 29.1px,rgba(255,255,255,0.06) 31.1px,rgba(0,20,70,0.06) 31.1px,rgba(0,20,70,0.06) 32.1px,rgba(255,255,255,0.1) 32.1px,rgba(255,255,255,0.1) 35.1px,rgba(0,20,70,0.06) 35.1px,rgba(0,20,70,0.06) 36.6px,rgba(0,20,70,0.06) 36.6px,rgba(0,20,70,0.06) 38.1px,rgba(0,20,70,0.12) 38.1px,rgba(0,20,70,0.12) 39.6px,rgba(255,255,255,0) 39.6px,rgba(255,255,255,0) 41.1px,rgba(255,255,255,0) 41.1px,rgba(255,255,255,0) 42.1px,rgba(255,255,255,0.14) 42.1px,rgba(255,255,255,0.14) 43.6px,rgba(255,255,255,0) 43.6px,rgba(255,255,255,0) 44.6px,rgba(255,255,255,0.26) 44.6px,rgba(255,255,255,0.26) 45.9px,rgba(0,20,70,0.12) 45.9px,rgba(0,20,70,0.12) 46.9px,rgba(255,255,255,0.26) 46.9px,rgba(255,255,255,0.26) 47.9px,rgba(255,255,255,0.06) 47.9px,rgba(255,255,255,0.06) 50.4px,rgba(255,255,255,0.26) 50.4px,rgba(255,255,255,0.26) 53.4px,rgba(255,255,255,0.14) 53.4px,rgba(255,255,255,0.14) 55.9px,rgba(0,20,70,0.06) 55.9px,rgba(0,20,70,0.06) 58.4px,rgba(255,255,255,0.26) 58.4px,rgba(255,255,255,0.26) 60.4px,rgba(255,255,255,0.14) 60.4px,rgba(255,255,255,0.14) 61.4px,rgba(255,255,255,0.26) 61.4px,rgba(255,255,255,0.26) 63.9px,rgba(0,20,70,0.06) 63.9px,rgba(0,20,70,0.06) 65.4px,rgba(255,255,255,0) 65.4px,rgba(255,255,255,0) 67.9px,rgba(0,20,70,0.06) 67.9px,rgba(0,20,70,0.06) 69.2px,rgba(0,20,70,0.06) 69.2px,rgba(0,20,70,0.06) 70.7px,rgba(255,255,255,0.26) 70.7px,rgba(255,255,255,0.26) 71.7px,rgba(255,255,255,0) 71.7px,rgba(255,255,255,0) 73.7px,rgba(255,255,255,0.2) 73.7px,rgba(255,255,255,0.2) 75.7px,rgba(255,255,255,0.14) 75.7px,rgba(255,255,255,0.14) 78.2px,rgba(255,255,255,0.14) 78.2px,rgba(255,255,255,0.14) 80.2px,rgba(255,255,255,0.1) 80.2px,rgba(255,255,255,0.1) 83.2px,rgba(0,20,70,0.12) 83.2px,rgba(0,20,70,0.12) 84.2px,rgba(255,255,255,0.14) 84.2px,rgba(255,255,255,0.14) 86.7px,rgba(255,255,255,0.26) 86.7px,rgba(255,255,255,0.26) 87.7px,rgba(255,255,255,0) 87.7px,rgba(255,255,255,0) 88.7px,rgba(255,255,255,0.14) 88.7px,rgba(255,255,255,0.14) 90.2px,rgba(255,255,255,0) 90.2px,rgba(255,255,255,0) 91.2px,rgba(255,255,255,0.14) 91.2px,rgba(255,255,255,0.14) 94.2px,rgba(255,255,255,0.2) 94.2px,rgba(255,255,255,0.2) 97.2px,rgba(255,255,255,0) 97.2px,rgba(255,255,255,0) 98.7px,rgba(255,255,255,0.06) 98.7px,rgba(255,255,255,0.06) 99.7px,rgba(255,255,255,0) 99.7px,rgba(255,255,255,0) 101.2px,rgba(255,255,255,0.14) 101.2px,rgba(255,255,255,0.14) 102.7px,rgba(255,255,255,0.14) 102.7px,rgba(255,255,255,0.14) 105.7px,rgba(255,255,255,0.1) 105.7px,rgba(255,255,255,0.1) 107px,rgba(255,255,255,0.2) 107px,rgba(255,255,255,0.2) 108.5px,rgba(255,255,255,0.2) 108.5px,rgba(255,255,255,0.2) 110px,rgba(0,20,70,0.12) 110px,rgba(0,20,70,0.12) 111px,rgba(0,20,70,0.12) 111px,rgba(0,20,70,0.12) 112.3px,rgba(255,255,255,0.2) 112.3px,rgba(255,255,255,0.2) 113.8px,rgba(255,255,255,0.26) 113.8px,rgba(255,255,255,0.26) 116.3px,rgba(255,255,255,0.26) 116.3px,rgba(255,255,255,0.26) 117.8px,rgba(0,20,70,0.12) 117.8px,rgba(0,20,70,0.12) 120.8px,rgba(0,20,70,0.06) 120.8px,rgba(0,20,70,0.06) 122.8px,rgba(255,255,255,0.1) 122.8px,rgba(255,255,255,0.1) 123.8px,rgba(0,20,70,0.06) 123.8px,rgba(0,20,70,0.06) 125.8px,rgba(255,255,255,0) 125.8px,rgba(255,255,255,0) 127.8px,rgba(255,255,255,0) 127.8px,rgba(255,255,255,0) 129.3px,rgba(255,255,255,0.1) 129.3px,rgba(255,255,255,0.1) 130.6px,rgba(255,255,255,0.06) 130.6px,rgba(255,255,255,0.06) 131.6px,rgba(255,255,255,0.14) 131.6px,rgba(255,255,255,0.14) 133.1px,rgba(0,20,70,0.06) 133.1px,rgba(0,20,70,0.06) 135.6px,rgba(0,20,70,0.12) 135.6px,rgba(0,20,70,0.12) 136.9px,rgba(255,255,255,0) 136.9px,rgba(255,255,255,0) 138.9px,rgba(255,255,255,0.14) 138.9px,rgba(255,255,255,0.14) 139.9px,rgba(0,20,70,0.12) 139.9px,rgba(0,20,70,0.12) 141.9px,rgba(255,255,255,0.26) 141.9px,rgba(255,255,255,0.26) 143.9px,rgba(0,20,70,0.06) 143.9px,rgba(0,20,70,0.06) 145.2px,rgba(255,255,255,0) 145.2px,rgba(255,255,255,0) 146.7px,rgba(255,255,255,0.06) 146.7px,rgba(255,255,255,0.06) 148px,rgba(255,255,255,0) 148px,rgba(255,255,255,0) 149.3px,rgba(255,255,255,0.2) 149.3px,rgba(255,255,255,0.2) 150.8px,rgba(255,255,255,0) 150.8px,rgba(255,255,255,0) 153.8px,rgba(0,20,70,0.06) 153.8px,rgba(0,20,70,0.06) 155.8px,rgba(0,20,70,0.06) 155.8px,rgba(0,20,70,0.06) 157.3px,rgba(255,255,255,0) 157.3px,rgba(255,255,255,0) 159.3px,rgba(255,255,255,0) 159.3px,rgba(255,255,255,0) 161.3px,rgba(255,255,255,0) 161.3px,rgba(255,255,255,0) 164.3px,rgba(255,255,255,0.26) 164.3px,rgba(255,255,255,0.26) 165.3px,rgba(255,255,255,0) 165.3px,rgba(255,255,255,0) 166.3px,rgba(255,255,255,0) 166.3px,rgba(255,255,255,0) 167.6px,rgba(255,255,255,0.14) 167.6px,rgba(255,255,255,0.14) 168.6px,rgba(255,255,255,0.06) 168.6px,rgba(255,255,255,0.06) 169.6px,rgba(255,255,255,0.06) 169.6px,rgba(255,255,255,0.06) 171.6px,rgba(0,20,70,0.06) 171.6px,rgba(0,20,70,0.06) 172.6px,rgba(0,20,70,0.06) 172.6px,rgba(0,20,70,0.06) 175.1px,rgba(255,255,255,0) 175.1px,rgba(255,255,255,0) 178.1px,rgba(255,255,255,0) 178.1px,rgba(255,255,255,0) 179.6px,rgba(255,255,255,0.1) 179.6px,rgba(255,255,255,0.1) 181.1px,rgba(0,20,70,0.12) 181.1px,rgba(0,20,70,0.12) 182.6px,rgba(0,20,70,0.12) 182.6px,rgba(0,20,70,0.12) 183.6px,rgba(255,255,255,0) 183.6px,rgba(255,255,255,0) 185.1px,rgba(255,255,255,0) 185.1px,rgba(255,255,255,0) 187.1px,rgba(255,255,255,0.26) 187.1px,rgba(255,255,255,0.26) 188.1px,rgba(0,20,70,0.06) 188.1px,rgba(0,20,70,0.06) 190.1px,rgba(255,255,255,0.2) 190.1px,rgba(255,255,255,0.2) 191.6px,rgba(255,255,255,0) 191.6px,rgba(255,255,255,0) 193.6px,rgba(255,255,255,0.06) 193.6px,rgba(255,255,255,0.06) 195.1px,rgba(255,255,255,0.14) 195.1px,rgba(255,255,255,0.14) 196.6px,rgba(0,20,70,0.12) 196.6px,rgba(0,20,70,0.12) 198.1px,rgba(255,255,255,0) 198.1px,rgba(255,255,255,0) 200.6px,rgba(0,20,70,0.06) 200.6px,rgba(0,20,70,0.06) 201.6px,rgba(255,255,255,0.26) 201.6px,rgba(255,255,255,0.26) 203.6px,rgba(255,255,255,0.14) 203.6px,rgba(255,255,255,0.14) 205.6px,rgba(255,255,255,0.1) 205.6px,rgba(255,255,255,0.1) 207.6px,rgba(255,255,255,0.26) 207.6px,rgba(255,255,255,0.26) 208.6px,rgba(255,255,255,0.1) 208.6px,rgba(255,255,255,0.1) 211.1px,rgba(0,20,70,0.12) 211.1px,rgba(0,20,70,0.12) 213.1px,rgba(255,255,255,0.1) 213.1px,rgba(255,255,255,0.1) 214.1px,rgba(255,255,255,0.1) 214.1px,rgba(255,255,255,0.1) 215.6px,rgba(255,255,255,0) 215.6px,rgba(255,255,255,0) 217.1px,rgba(255,255,255,0) 217.1px,rgba(255,255,255,0) 218.6px,rgba(0,20,70,0.12) 218.6px,rgba(0,20,70,0.12) 221.1px,rgba(255,255,255,0) 221.1px,rgba(255,255,255,0) 222.1px,rgba(255,255,255,0.14) 222.1px,rgba(255,255,255,0.14) 223.6px,rgba(0,20,70,0.06) 223.6px,rgba(0,20,70,0.06) 225.6px,rgba(255,255,255,0) 225.6px,rgba(255,255,255,0) 227.1px,rgba(255,255,255,0.06) 227.1px,rgba(255,255,255,0.06) 228.1px,rgba(0,20,70,0.06) 228.1px,rgba(0,20,70,0.06) 230.1px,rgba(255,255,255,0.26) 230.1px,rgba(255,255,255,0.26) 231.6px,rgba(255,255,255,0.2) 231.6px,rgba(255,255,255,0.2) 232.6px,rgba(255,255,255,0.1) 232.6px,rgba(255,255,255,0.1) 235.1px,rgba(255,255,255,0.2) 235.1px,rgba(255,255,255,0.2) 237.1px,rgba(0,20,70,0.12) 237.1px,rgba(0,20,70,0.12) 239.6px,rgba(255,255,255,0) 239.6px,rgba(255,255,255,0) 241.1px,rgba(0,20,70,0.06) 241.1px,rgba(0,20,70,0.06) 242.4px,rgba(255,255,255,0.14) 242.4px,rgba(255,255,255,0.14) 243.7px,rgba(255,255,255,0.14) 243.7px,rgba(255,255,255,0.14) 246.2px,rgba(255,255,255,0) 246.2px,rgba(255,255,255,0) 249.2px,rgba(255,255,255,0) 249.2px,rgba(255,255,255,0) 250.5px,rgba(255,255,255,0) 250.5px,rgba(255,255,255,0) 253.5px,rgba(0,20,70,0.06) 253.5px,rgba(0,20,70,0.06) 255px,rgba(255,255,255,0.14) 255px,rgba(255,255,255,0.14) 257px,rgba(255,255,255,0.06) 257px,rgba(255,255,255,0.06) 259px,rgba(255,255,255,0) 259px,rgba(255,255,255,0) 260.3px,rgba(0,20,70,0.12) 260.3px,rgba(0,20,70,0.12) 261.8px,rgba(255,255,255,0.06) 261.8px,rgba(255,255,255,0.06) 262.8px,rgba(255,255,255,0.14) 262.8px,rgba(255,255,255,0.14) 264.3px,rgba(0,20,70,0.06) 264.3px,rgba(0,20,70,0.06) 266.3px,rgba(255,255,255,0.06) 266.3px,rgba(255,255,255,0.06) 268.3px,rgba(255,255,255,0.1) 268.3px,rgba(255,255,255,0.1) 270.3px,rgba(255,255,255,0.2) 270.3px,rgba(255,255,255,0.2) 273.3px,rgba(0,20,70,0.12) 273.3px,rgba(0,20,70,0.12) 275.3px,rgba(255,255,255,0) 275.3px,rgba(255,255,255,0) 277.3px,rgba(255,255,255,0) 277.3px,rgba(255,255,255,0) 278.3px,rgba(255,255,255,0.14) 278.3px,rgba(255,255,255,0.14) 279.8px,rgba(255,255,255,0.14) 279.8px,rgba(255,255,255,0.14) 281.1px,rgba(255,255,255,0.1) 281.1px,rgba(255,255,255,0.1) 282.6px,rgba(0,20,70,0.12) 282.6px,rgba(0,20,70,0.12) 283.6px,rgba(255,255,255,0.26) 283.6px,rgba(255,255,255,0.26) 285.1px,rgba(0,20,70,0.06) 285.1px,rgba(0,20,70,0.06) 286.6px,rgba(255,255,255,0.26) 286.6px,rgba(255,255,255,0.26) 287.6px,rgba(0,20,70,0.06) 287.6px,rgba(0,20,70,0.06) 288.6px,rgba(0,20,70,0.12) 288.6px,rgba(0,20,70,0.12) 289.6px,rgba(255,255,255,0) 289.6px,rgba(255,255,255,0) 291.1px,rgba(255,255,255,0.1) 291.1px,rgba(255,255,255,0.1) 294.1px,rgba(0,20,70,0.12) 294.1px,rgba(0,20,70,0.12) 297.1px,rgba(255,255,255,0.1) 297.1px,rgba(255,255,255,0.1) 298px),linear-gradient(180deg,#78b6ee 0%,#62a4e4 35%,#4c92d8 65%,#3a82cc 100%);background-size:298px 100%,100% 100%;background-repeat:repeat-x,no-repeat;">
<span class="t off" style="left:4px;top:40.2px;opacity:0.72">OFFLINE</span>
<span class="t off" style="left:79px;top:40.2px;opacity:0.72">OFFLINE</span>
<span class="t off" style="left:154px;top:40.2px;opacity:0.72">OFFLINE</span>
<span class="t off" style="left:229px;top:40.2px;opacity:0.72">OFFLINE</span>
<span class="t off" style="left:304px;top:40.2px;opacity:0.72">OFFLINE</span>
<span class="t off" style="left:379px;top:40.2px;opacity:0.72">OFFLINE</span>
<span class="t off" style="left:454px;top:40.2px;opacity:0.72">OFFLINE</span>
<span class="t off" style="left:529px;top:40.2px;opacity:0.72">OFFLINE</span>
<span class="t off" style="left:604px;top:40.2px;opacity:0.72">OFFLINE</span>
<span class="t off" style="left:679px;top:40.2px;opacity:0.72">OFFLINE</span>
<span class="t off" style="left:754px;top:40.2px;opacity:0.72">OFFLINE</span>
<span class="t off" style="left:829px;top:40.2px;opacity:0.72">OFFLINE</span>
<span class="t off" style="left:896.4px;top:40.2px;opacity:0.72">OFFLINE</span>
<span class="t off" style="left:971.2px;top:40.2px;opacity:0.72">OFFLINE</span>
<span class="t off" style="left:1046px;top:40.2px;opacity:0.72">OFFLINE</span>
</div>
<span class="t" id="t21" style="top:812.37px;font-size:13.5px;line-height:13.5px;color:#3a3a3a;font-family:'DejaVu Sans',sans-serif;left:1211.5px;letter-spacing:-0.4px;">3...</span>
<svg style="left:1237.7px;top:811.7px" width="14" height="14" viewBox="0 0 14 14"><circle cx="7" cy="7" r="6.2" fill="#bdbcb7" stroke="#8c8b86" stroke-width="1"/><path d="M7 1.6V7" stroke="#8c8b86" stroke-width="1.2"/></svg>
<div class="a" style="left:1255.4px;top:812.7px;width:11.6px;height:12px;background:#c6c5c0;"></div>
<svg style="left:1256.2px;top:813.7px" width="10" height="10" viewBox="0 0 10 10"><rect x="1" y="4.6" width="8" height="5" fill="#8f8e89"/><path d="M2.8 4.8V3.2a2.2 2.2 0 0 1 4.4 0V4.8" fill="none" stroke="#8f8e89" stroke-width="1.4"/></svg>
<div class="a" style="left:1268.6px;top:812.7px;width:12.4px;height:12px;background:#c6c5c0;"></div>
<span class="t" id="t22" style="top:813.14px;font-size:12px;line-height:12px;color:#8f8e89;font-family:'DejaVu Sans',sans-serif;left:1270.2px;">M</span>
<div class="a" style="left:1284.2px;top:812.7px;width:12.4px;height:12px;background:#c6c5c0;"></div>
<svg style="left:1285px;top:813.7px" width="11" height="10" viewBox="0 0 11 10"><ellipse cx="5.5" cy="4" rx="4.8" ry="3.4" fill="#8f8e89"/><path d="M3 6l-1 3 3.5-2z" fill="#8f8e89"/></svg>
<div class="a" style="left:1299.2px;top:812.7px;width:12.6px;height:12px;background:#c6c5c0;"></div>
<span class="t" id="t23" style="top:812.52px;font-size:12.5px;line-height:12.5px;color:#8f8e89;font-family:'DejaVu Serif',serif;font-weight:bold;left:1303.2px;">i</span>
<div class="a" style="left:1314.4px;top:812.7px;width:12.2px;height:12px;background:#c6c5c0;"></div>
<span class="t" id="t24" style="top:813.37px;font-size:11.5px;line-height:11.5px;color:#8f8e89;font-family:'DejaVu Sans Condensed','DejaVu Sans',sans-serif;left:1315.2px;letter-spacing:-0.6px;">FX</span>
<div class="a" style="left:1328.8px;top:812.7px;width:12.6px;height:12px;background:#c6c5c0;"></div>
<svg style="left:1329.2px;top:813.7px" width="12" height="10" viewBox="0 0 12 10"><path d="M1.5 8L5.5 2.2L10.5 5.2" fill="none" stroke="#8f8e89" stroke-width="1.5"/><rect x="0.3" y="6.6" width="2.6" height="2.6" fill="#8f8e89"/><rect x="4.2" y="1" width="2.6" height="2.6" fill="#8f8e89"/><rect x="9.2" y="4" width="2.6" height="2.6" fill="#8f8e89"/></svg>
<span class="t" id="t25" style="top:812.05px;font-size:14px;line-height:14px;color:#2c2c2c;font-family:'DejaVu Sans',sans-serif;left:1346.4px;word-spacing:2.5px;">TT1 1</span>
<div class="a" style="left:1235.6px;top:828.1px;width:1.6px;height:96.2px;background:rgba(150,160,175,.85);"></div>
<svg style="left:1228.9px;top:828.1px" width="15" height="8" viewBox="0 0 15 8"><path d="M0 0H15L7.5 8z" fill="#d4f0ff"/></svg>
<svg style="left:1236.4px;top:917.3px" width="7" height="7" viewBox="0 0 7 7"><path d="M0 0L7 7H0z" fill="#bfe2ff"/></svg>
<div class="a" style="left:361px;top:1px;width:1px;height:879px;background:#050505;"></div>
<div class="a" style="left:391px;top:1px;width:1px;height:879px;background:#050505;"></div>
<div class="a" style="left:420px;top:1px;width:1px;height:879px;background:#050505;"></div>
<div class="a" style="left:450px;top:1px;width:1px;height:879px;background:#050505;"></div>
<div class="a" style="left:480px;top:1px;width:1px;height:879px;background:#050505;"></div>
<div class="a" style="left:510px;top:1px;width:1px;height:879px;background:#050505;"></div>
<div class="a" style="left:540px;top:1px;width:1px;height:879px;background:#050505;"></div>
<div class="a" style="left:569px;top:1px;width:1px;height:879px;background:#050505;"></div>
<div class="a" style="left:599px;top:1px;width:1px;height:879px;background:#050505;"></div>
<div class="a" style="left:629px;top:1px;width:1px;height:879px;background:#050505;"></div>
<div class="a" style="left:659px;top:1px;width:1px;height:879px;background:#050505;"></div>
<div class="a" style="left:689px;top:1px;width:1px;height:879px;background:#050505;"></div>
<div class="a" style="left:718px;top:1px;width:1px;height:879px;background:#050505;"></div>
<div class="a" style="left:748px;top:1px;width:1px;height:879px;background:#050505;"></div>
<div class="a" style="left:778px;top:1px;width:1px;height:879px;background:#050505;"></div>
<div class="a" style="left:808px;top:1px;width:1px;height:879px;background:#050505;"></div>
<div class="a" style="left:837px;top:1px;width:1px;height:879px;background:#050505;"></div>
<div class="a" style="left:867px;top:1px;width:1px;height:879px;background:#050505;"></div>
<div class="a" style="left:897px;top:1px;width:1px;height:879px;background:#050505;"></div>
<div class="a" style="left:927px;top:1px;width:1px;height:879px;background:#050505;"></div>
<div class="a" style="left:957px;top:1px;width:1px;height:879px;background:#050505;"></div>
<div class="a" style="left:986px;top:1px;width:1px;height:879px;background:#050505;"></div>
<div class="a" style="left:1016px;top:1px;width:1px;height:879px;background:#050505;"></div>
<div class="a" style="left:1046px;top:1px;width:1px;height:879px;background:#050505;"></div>
<div class="a" style="left:1076px;top:1px;width:1px;height:879px;background:#050505;"></div>
<div class="a" style="left:1106px;top:1px;width:1px;height:879px;background:#050505;"></div>
<div class="a" style="left:1135px;top:1px;width:1px;height:879px;background:#050505;"></div>
<div class="a" style="left:1165px;top:1px;width:1px;height:879px;background:#050505;"></div>
<div class="a" style="left:1195px;top:1px;width:1px;height:879px;background:#050505;"></div>
<div class="a" style="left:1225px;top:1px;width:1px;height:879px;background:#050505;"></div>
<div class="a" style="left:1254px;top:1px;width:1px;height:879px;background:#050505;"></div>
<div class="a" style="left:1284px;top:1px;width:1px;height:879px;background:#050505;"></div>
<div class="a" style="left:1314px;top:1px;width:1px;height:879px;background:#050505;"></div>
<div class="a" style="left:1344px;top:1px;width:1px;height:879px;background:#050505;"></div>
<div class="a" style="left:1374px;top:1px;width:1px;height:879px;background:#050505;"></div>
<div class="a" style="left:880px;top:0px;width:1px;height:332px;background:#b03030;"></div>
<div class="a" style="left:880px;top:332px;width:1px;height:548px;background:#c0504a;"></div>
<div class="a" style="left:942.4px;top:332px;width:1.2px;height:548px;background:rgba(150,140,140,.8);"></div>
<div class="a" style="left:1012.4px;top:0px;width:1.4px;height:332px;background:#e6e63c;"></div>
<div class="a" style="left:1012.4px;top:332px;width:1.4px;height:548px;background:#cfe68c;"></div>
<div class="a" style="left:1210.8px;top:332px;width:1.4px;height:548px;background:#cfe68c;"></div>
<div class="a" style="left:0px;top:0px;width:1383px;height:1px;background:#dededa;"></div>
</div>
<div class="a" style="left:0px;top:0px;width:339.4px;height:880px;background:#a9a79f;overflow:hidden;">
<div class="a" style="left:0px;top:0px;width:304px;height:30px;background:linear-gradient(180deg,#b6b4ad,#aeaca5);"></div>
<div class="a" style="left:0px;top:30px;width:304px;height:15.4px;background:#716f68;"></div>
<div class="a" style="left:0px;top:37.2px;width:304px;height:1px;background:#8b8983;"></div>
<div class="a" style="left:9.5px;top:32px;width:1px;height:13.4px;background:#b9b8b3;"></div>
<span class="t" id="t26" style="top:33.26px;font-size:9.5px;line-height:9.5px;color:#c2c1bc;font-family:'DejaVu Sans Condensed','DejaVu Sans',sans-serif;left:10px;transform:translateX(-50%);letter-spacing:-0.5px;">-48</span>
<div class="a" style="left:33.9px;top:32px;width:1px;height:13.4px;background:#b9b8b3;"></div>
<span class="t" id="t27" style="top:33.26px;font-size:9.5px;line-height:9.5px;color:#c2c1bc;font-family:'DejaVu Sans Condensed','DejaVu Sans',sans-serif;left:34.4px;transform:translateX(-50%);letter-spacing:-0.5px;">-42</span>
<div class="a" style="left:58.3px;top:32px;width:1px;height:13.4px;background:#b9b8b3;"></div>
<span class="t" id="t28" style="top:33.26px;font-size:9.5px;line-height:9.5px;color:#c2c1bc;font-family:'DejaVu Sans Condensed','DejaVu Sans',sans-serif;left:58.8px;transform:translateX(-50%);letter-spacing:-0.5px;">-36</span>
<div class="a" style="left:82.7px;top:32px;width:1px;height:13.4px;background:#b9b8b3;"></div>
<span class="t" id="t29" style="top:33.26px;font-size:9.5px;line-height:9.5px;color:#c2c1bc;font-family:'DejaVu Sans Condensed','DejaVu Sans',sans-serif;left:83.2px;transform:translateX(-50%);letter-spacing:-0.5px;">-30</span>
<div class="a" style="left:107.1px;top:32px;width:1px;height:13.4px;background:#b9b8b3;"></div>
<span class="t" id="t30" style="top:33.26px;font-size:9.5px;line-height:9.5px;color:#c2c1bc;font-family:'DejaVu Sans Condensed','DejaVu Sans',sans-serif;left:107.6px;transform:translateX(-50%);letter-spacing:-0.5px;">-24</span>
<div class="a" style="left:131.5px;top:32px;width:1px;height:13.4px;background:#b9b8b3;"></div>
<span class="t" id="t31" style="top:33.26px;font-size:9.5px;line-height:9.5px;color:#c2c1bc;font-family:'DejaVu Sans Condensed','DejaVu Sans',sans-serif;left:132px;transform:translateX(-50%);letter-spacing:-0.5px;">-18</span>
<div class="a" style="left:155.9px;top:32px;width:1px;height:13.4px;background:#b9b8b3;"></div>
<span class="t" id="t32" style="top:33.26px;font-size:9.5px;line-height:9.5px;color:#c2c1bc;font-family:'DejaVu Sans Condensed','DejaVu Sans',sans-serif;left:156.4px;transform:translateX(-50%);letter-spacing:-0.5px;">-12</span>
<div class="a" style="left:180.3px;top:32px;width:1px;height:13.4px;background:#b9b8b3;"></div>
<span class="t" id="t33" style="top:33.26px;font-size:9.5px;line-height:9.5px;color:#c2c1bc;font-family:'DejaVu Sans Condensed','DejaVu Sans',sans-serif;left:180.8px;transform:translateX(-50%);letter-spacing:-0.5px;">-6</span>
<div class="a" style="left:0px;top:45.4px;width:304px;height:8px;background:#a9a7a0;"></div>
<div class="a" style="left:0px;top:45.4px;width:304px;height:1px;background:#c3c1ba;"></div>
<div class="a" style="left:0px;top:53.3px;width:304px;height:4.4px;background:linear-gradient(180deg,#5f5d57,#7b7972);"></div>
<div class="a" style="left:0px;top:57.6px;width:304px;height:4.4px;background:#25231f;"></div>
<div class="a" style="left:0px;top:62px;width:304px;height:5.5px;background:#9d9b94;"></div>
<div class="a" style="left:0px;top:67.3px;width:304px;height:1.2px;background:#4e4c46;"></div>
<div class="a" style="left:0px;top:68.5px;width:304px;height:50.5px;background:linear-gradient(180deg,#aaa69f,#8f8c85);"></div>
<div class="a" style="left:0px;top:118.8px;width:304px;height:1.4px;background:#141414;"></div>
<div class="a" style="left:0px;top:120.2px;width:304px;height:88px;background:#4a4a4a;"></div>
<div class="a" style="left:0px;top:145px;width:75px;height:16.6px;background:#181818;"></div>
<span class="t" id="t34" style="top:147.76px;font-size:12.8px;line-height:12.8px;color:#dcdcda;font-family:'DejaVu Sans',sans-serif;left:-0.6px;">me</span>
<div class="a" style="left:82px;top:145.6px;width:62px;height:15.6px;background:#2e2e2e;border-radius:2px;"></div>
<div class="a" style="left:94px;top:151.6px;width:40px;height:3.4px;background:#151515;"></div>
<div class="a" style="left:121.2px;top:147.2px;width:18px;height:13.2px;background:linear-gradient(90deg,#efefef 0%,#c9c9c9 18%,#8f8f8f 45%,#bdbdbd 55%,#d9d9d9 80%,#f4f4f4 100%);border-radius:1.5px;box-shadow:0 1.5px 2px rgba(0,0,0,.55);"></div>
<div class="a" style="left:129.4px;top:149.7px;width:1.6px;height:8.2px;background:#2a2a2a;"></div>
<div class="a" style="left:0px;top:208px;width:304px;height:1.6px;background:#2a2a2a;"></div>
<div class="a" style="left:0px;top:209.6px;width:304px;height:4px;background:#8e8c85;"></div>
<div class="a" style="left:0px;top:213.6px;width:304px;height:119.2px;background:#b5b3ac;"></div>
<div class="a" style="left:0px;top:314px;width:304px;height:18.8px;background:#a5a39b;"></div>
<div class="a" style="left:0px;top:213.6px;width:304px;height:1px;background:#8a8882;"></div>
<div class="a" style="left:0px;top:231.1px;width:304px;height:16.4px;background:#383838;"></div>
<span class="t" id="t35" style="top:234.16px;font-size:12.8px;line-height:12.8px;color:#e4e4e2;font-family:'DejaVu Sans',sans-serif;left:1.6px;letter-spacing:-0.17px;">MS_1-</span>
<div class="a" style="left:-3px;top:253.9px;width:7.2px;height:15.4px;background:#8b8880;border:1px solid #c4c2bb;border-radius:2px;"></div>
<div class="a" style="left:11px;top:253.9px;width:138px;height:15.4px;background:#8b8880;border:1px solid #c4c2bb;border-radius:2px;"></div>
<svg style="left:134px;top:254.1px" width="15" height="15" viewBox="0 0 15 15"><circle cx="7.5" cy="7.5" r="7" fill="#9b988f" stroke="#6f6d66" stroke-width="1"/><path d="M4.2 6h6.6L7.5 10z" fill="#4c4a45"/></svg>
<div class="a" style="left:0px;top:276.4px;width:304px;height:14.6px;background:#9c9a93;"></div>
<div class="a" style="left:0px;top:282px;width:150px;height:2.8px;background:#2b2a26;"></div>
<div class="a" style="left:0px;top:298.8px;width:304px;height:15.4px;background:#716f68;"></div>
<div class="a" style="left:0px;top:306px;width:304px;height:1px;background:#8b8983;"></div>
<div class="a" style="left:-2.5px;top:300.8px;width:1px;height:13.4px;background:#b9b8b3;"></div>
<span class="t" id="t36" style="top:302.06px;font-size:9.5px;line-height:9.5px;color:#c2c1bc;font-family:'DejaVu Sans Condensed','DejaVu Sans',sans-serif;left:-2px;transform:translateX(-50%);letter-spacing:-0.5px;">-60</span>
<div class="a" style="left:21.5px;top:300.8px;width:1px;height:13.4px;background:#b9b8b3;"></div>
<span class="t" id="t37" style="top:302.06px;font-size:9.5px;line-height:9.5px;color:#c2c1bc;font-family:'DejaVu Sans Condensed','DejaVu Sans',sans-serif;left:22px;transform:translateX(-50%);letter-spacing:-0.5px;">-54</span>
<div class="a" style="left:48.5px;top:300.8px;width:1px;height:13.4px;background:#b9b8b3;"></div>
<span class="t" id="t38" style="top:302.06px;font-size:9.5px;line-height:9.5px;color:#c2c1bc;font-family:'DejaVu Sans Condensed','DejaVu Sans',sans-serif;left:49px;transform:translateX(-50%);letter-spacing:-0.5px;">-48</span>
<div class="a" style="left:75.5px;top:300.8px;width:1px;height:13.4px;background:#b9b8b3;"></div>
<span class="t" id="t39" style="top:302.06px;font-size:9.5px;line-height:9.5px;color:#c2c1bc;font-family:'DejaVu Sans Condensed','DejaVu Sans',sans-serif;left:76px;transform:translateX(-50%);letter-spacing:-0.5px;">-42</span>
<div class="a" style="left:102.1px;top:300.8px;width:1px;height:13.4px;background:#b9b8b3;"></div>
<span class="t" id="t40" style="top:302.06px;font-size:9.5px;line-height:9.5px;color:#c2c1bc;font-family:'DejaVu Sans Condensed','DejaVu Sans',sans-serif;left:102.6px;transform:translateX(-50%);letter-spacing:-0.5px;">-36</span>
<div class="a" style="left:128.7px;top:300.8px;width:1px;height:13.4px;background:#b9b8b3;"></div>
<span class="t" id="t41" style="top:302.06px;font-size:9.5px;line-height:9.5px;color:#c2c1bc;font-family:'DejaVu Sans Condensed','DejaVu Sans',sans-serif;left:129.2px;transform:translateX(-50%);letter-spacing:-0.5px;">-30</span>
<div class="a" style="left:0px;top:332.8px;width:304px;height:119.2px;background:#d2d0c9;"></div>
<div class="a" style="left:0px;top:433.2px;width:304px;height:18.8px;background:#d2d0c9;"></div>
<div class="a" style="left:0px;top:350.3px;width:304px;height:16.4px;background:#383838;"></div>
<div class="a" style="left:-3px;top:373.1px;width:7.2px;height:15.4px;background:#8b8880;border:1px solid #c4c2bb;border-radius:2px;"></div>
<div class="a" style="left:11px;top:373.1px;width:138px;height:15.4px;background:#8b8880;border:1px solid #c4c2bb;border-radius:2px;"></div>
<svg style="left:134px;top:373.3px" width="15" height="15" viewBox="0 0 15 15"><circle cx="7.5" cy="7.5" r="7" fill="#9b988f" stroke="#6f6d66" stroke-width="1"/><path d="M4.2 6h6.6L7.5 10z" fill="#4c4a45"/></svg>
<div class="a" style="left:0px;top:395.6px;width:304px;height:14.6px;background:#9c9a93;"></div>
<div class="a" style="left:0px;top:401.2px;width:150px;height:2.8px;background:#2b2a26;"></div>
<div class="a" style="left:0px;top:418px;width:304px;height:15.4px;background:#716f68;"></div>
<div class="a" style="left:0px;top:425.2px;width:304px;height:1px;background:#8b8983;"></div>
<div class="a" style="left:-2.5px;top:420px;width:1px;height:13.4px;background:#b9b8b3;"></div>
<span class="t" id="t42" style="top:421.26px;font-size:9.5px;line-height:9.5px;color:#c2c1bc;font-family:'DejaVu Sans Condensed','DejaVu Sans',sans-serif;left:-2px;transform:translateX(-50%);letter-spacing:-0.5px;">-60</span>
<div class="a" style="left:21.5px;top:420px;width:1px;height:13.4px;background:#b9b8b3;"></div>
<span class="t" id="t43" style="top:421.26px;font-size:9.5px;line-height:9.5px;color:#c2c1bc;font-family:'DejaVu Sans Condensed','DejaVu Sans',sans-serif;left:22px;transform:translateX(-50%);letter-spacing:-0.5px;">-54</span>
<div class="a" style="left:48.5px;top:420px;width:1px;height:13.4px;background:#b9b8b3;"></div>
<span class="t" id="t44" style="top:421.26px;font-size:9.5px;line-height:9.5px;color:#c2c1bc;font-family:'DejaVu Sans Condensed','DejaVu Sans',sans-serif;left:49px;transform:translateX(-50%);letter-spacing:-0.5px;">-48</span>
<div class="a" style="left:75.5px;top:420px;width:1px;height:13.4px;background:#b9b8b3;"></div>
<span class="t" id="t45" style="top:421.26px;font-size:9.5px;line-height:9.5px;color:#c2c1bc;font-family:'DejaVu Sans Condensed','DejaVu Sans',sans-serif;left:76px;transform:translateX(-50%);letter-spacing:-0.5px;">-42</span>
<div class="a" style="left:102.1px;top:420px;width:1px;height:13.4px;background:#b9b8b3;"></div>
<span class="t" id="t46" style="top:421.26px;font-size:9.5px;line-height:9.5px;color:#c2c1bc;font-family:'DejaVu Sans Condensed','DejaVu Sans',sans-serif;left:102.6px;transform:translateX(-50%);letter-spacing:-0.5px;">-36</span>
<div class="a" style="left:128.7px;top:420px;width:1px;height:13.4px;background:#b9b8b3;"></div>
<span class="t" id="t47" style="top:421.26px;font-size:9.5px;line-height:9.5px;color:#c2c1bc;font-family:'DejaVu Sans Condensed','DejaVu Sans',sans-serif;left:129.2px;transform:translateX(-50%);letter-spacing:-0.5px;">-30</span>
<div class="a" style="left:0px;top:451.5px;width:304px;height:119.2px;background:#b5b3ac;"></div>
<div class="a" style="left:0px;top:551.9px;width:304px;height:18.8px;background:#a5a39b;"></div>
<div class="a" style="left:0px;top:451.5px;width:304px;height:1px;background:#8a8882;"></div>
<div class="a" style="left:0px;top:469px;width:304px;height:16.4px;background:#383838;"></div>
<span class="t" id="t48" style="top:472.06px;font-size:12.8px;line-height:12.8px;color:#e4e4e2;font-family:'DejaVu Sans',sans-serif;left:0px;">T</span>
<div class="a" style="left:-3px;top:491.8px;width:7.2px;height:15.4px;background:#8b8880;border:1px solid #c4c2bb;border-radius:2px;"></div>
<div class="a" style="left:11px;top:491.8px;width:138px;height:15.4px;background:#8b8880;border:1px solid #c4c2bb;border-radius:2px;"></div>
<svg style="left:134px;top:492px" width="15" height="15" viewBox="0 0 15 15"><circle cx="7.5" cy="7.5" r="7" fill="#9b988f" stroke="#6f6d66" stroke-width="1"/><path d="M4.2 6h6.6L7.5 10z" fill="#4c4a45"/></svg>
<div class="a" style="left:0px;top:514.3px;width:304px;height:14.6px;background:#9c9a93;"></div>
<div class="a" style="left:0px;top:519.9px;width:150px;height:2.8px;background:#2b2a26;"></div>
<div class="a" style="left:0px;top:536.7px;width:304px;height:15.4px;background:#716f68;"></div>
<div class="a" style="left:0px;top:543.9px;width:304px;height:1px;background:#8b8983;"></div>
<div class="a" style="left:-2.5px;top:538.7px;width:1px;height:13.4px;background:#b9b8b3;"></div>
<span class="t" id="t49" style="top:539.96px;font-size:9.5px;line-height:9.5px;color:#c2c1bc;font-family:'DejaVu Sans Condensed','DejaVu Sans',sans-serif;left:-2px;transform:translateX(-50%);letter-spacing:-0.5px;">-60</span>
<div class="a" style="left:21.5px;top:538.7px;width:1px;height:13.4px;background:#b9b8b3;"></div>
<span class="t" id="t50" style="top:539.96px;font-size:9.5px;line-height:9.5px;color:#c2c1bc;font-family:'DejaVu Sans Condensed','DejaVu Sans',sans-serif;left:22px;transform:translateX(-50%);letter-spacing:-0.5px;">-54</span>
<div class="a" style="left:48.5px;top:538.7px;width:1px;height:13.4px;background:#b9b8b3;"></div>
<span class="t" id="t51" style="top:539.96px;font-size:9.5px;line-height:9.5px;color:#c2c1bc;font-family:'DejaVu Sans Condensed','DejaVu Sans',sans-serif;left:49px;transform:translateX(-50%);letter-spacing:-0.5px;">-48</span>
<div class="a" style="left:75.5px;top:538.7px;width:1px;height:13.4px;background:#b9b8b3;"></div>
<span class="t" id="t52" style="top:539.96px;font-size:9.5px;line-height:9.5px;color:#c2c1bc;font-family:'DejaVu Sans Condensed','DejaVu Sans',sans-serif;left:76px;transform:translateX(-50%);letter-spacing:-0.5px;">-42</span>
<div class="a" style="left:102.1px;top:538.7px;width:1px;height:13.4px;background:#b9b8b3;"></div>
<span class="t" id="t53" style="top:539.96px;font-size:9.5px;line-height:9.5px;color:#c2c1bc;font-family:'DejaVu Sans Condensed','DejaVu Sans',sans-serif;left:102.6px;transform:translateX(-50%);letter-spacing:-0.5px;">-36</span>
<div class="a" style="left:128.7px;top:538.7px;width:1px;height:13.4px;background:#b9b8b3;"></div>
<span class="t" id="t54" style="top:539.96px;font-size:9.5px;line-height:9.5px;color:#c2c1bc;font-family:'DejaVu Sans Condensed','DejaVu Sans',sans-serif;left:129.2px;transform:translateX(-50%);letter-spacing:-0.5px;">-30</span>
<div class="a" style="left:0px;top:570.5px;width:304px;height:119.2px;background:#b5b3ac;"></div>
<div class="a" style="left:0px;top:670.9px;width:304px;height:18.8px;background:#a5a39b;"></div>
<div class="a" style="left:0px;top:570.5px;width:304px;height:1px;background:#8a8882;"></div>
<div class="a" style="left:0px;top:588px;width:304px;height:16.4px;background:#383838;"></div>
<span class="t" id="t55" style="top:591.06px;font-size:12.8px;line-height:12.8px;color:#e4e4e2;font-family:'DejaVu Sans',sans-serif;left:0px;">B</span>
<div class="a" style="left:-3px;top:610.8px;width:7.2px;height:15.4px;background:#8b8880;border:1px solid #c4c2bb;border-radius:2px;"></div>
<div class="a" style="left:11px;top:610.8px;width:138px;height:15.4px;background:#8b8880;border:1px solid #c4c2bb;border-radius:2px;"></div>
<svg style="left:134px;top:611px" width="15" height="15" viewBox="0 0 15 15"><circle cx="7.5" cy="7.5" r="7" fill="#9b988f" stroke="#6f6d66" stroke-width="1"/><path d="M4.2 6h6.6L7.5 10z" fill="#4c4a45"/></svg>
<div class="a" style="left:0px;top:633.3px;width:304px;height:14.6px;background:#9c9a93;"></div>
<div class="a" style="left:0px;top:638.9px;width:150px;height:2.8px;background:#2b2a26;"></div>
<div class="a" style="left:0px;top:655.7px;width:304px;height:15.4px;background:#716f68;"></div>
<div class="a" style="left:0px;top:662.9px;width:304px;height:1px;background:#8b8983;"></div>
<div class="a" style="left:-2.5px;top:657.7px;width:1px;height:13.4px;background:#b9b8b3;"></div>
<span class="t" id="t56" style="top:658.96px;font-size:9.5px;line-height:9.5px;color:#c2c1bc;font-family:'DejaVu Sans Condensed','DejaVu Sans',sans-serif;left:-2px;transform:translateX(-50%);letter-spacing:-0.5px;">-60</span>
<div class="a" style="left:21.5px;top:657.7px;width:1px;height:13.4px;background:#b9b8b3;"></div>
<span class="t" id="t57" style="top:658.96px;font-size:9.5px;line-height:9.5px;color:#c2c1bc;font-family:'DejaVu Sans Condensed','DejaVu Sans',sans-serif;left:22px;transform:translateX(-50%);letter-spacing:-0.5px;">-54</span>
<div class="a" style="left:48.5px;top:657.7px;width:1px;height:13.4px;background:#b9b8b3;"></div>
<span class="t" id="t58" style="top:658.96px;font-size:9.5px;line-height:9.5px;color:#c2c1bc;font-family:'DejaVu Sans Condensed','DejaVu Sans',sans-serif;left:49px;transform:translateX(-50%);letter-spacing:-0.5px;">-48</span>
<div class="a" style="left:75.5px;top:657.7px;width:1px;height:13.4px;background:#b9b8b3;"></div>
<span class="t" id="t59" style="top:658.96px;font-size:9.5px;line-height:9.5px;color:#c2c1bc;font-family:'DejaVu Sans Condensed','DejaVu Sans',sans-serif;left:76px;transform:translateX(-50%);letter-spacing:-0.5px;">-42</span>
<div class="a" style="left:102.1px;top:657.7px;width:1px;height:13.4px;background:#b9b8b3;"></div>
<span class="t" id="t60" style="top:658.96px;font-size:9.5px;line-height:9.5px;color:#c2c1bc;font-family:'DejaVu Sans Condensed','DejaVu Sans',sans-serif;left:102.6px;transform:translateX(-50%);letter-spacing:-0.5px;">-36</span>
<div class="a" style="left:128.7px;top:657.7px;width:1px;height:13.4px;background:#b9b8b3;"></div>
<span class="t" id="t61" style="top:658.96px;font-size:9.5px;line-height:9.5px;color:#c2c1bc;font-family:'DejaVu Sans Condensed','DejaVu Sans',sans-serif;left:129.2px;transform:translateX(-50%);letter-spacing:-0.5px;">-30</span>
<div class="a" style="left:0px;top:689.5px;width:304px;height:119.2px;background:#b5b3ac;"></div>
<div class="a" style="left:0px;top:789.9px;width:304px;height:18.8px;background:#a5a39b;"></div>
<div class="a" style="left:0px;top:689.5px;width:304px;height:1px;background:#8a8882;"></div>
<div class="a" style="left:0px;top:707px;width:304px;height:16.4px;background:#383838;"></div>
<span class="t" id="t62" style="top:710.06px;font-size:12.8px;line-height:12.8px;color:#e4e4e2;font-family:'DejaVu Sans',sans-serif;left:0px;">1</span>
<div class="a" style="left:-3px;top:729.8px;width:7.2px;height:15.4px;background:#8b8880;border:1px solid #c4c2bb;border-radius:2px;"></div>
<div class="a" style="left:11px;top:729.8px;width:138px;height:15.4px;background:#8b8880;border:1px solid #c4c2bb;border-radius:2px;"></div>
<svg style="left:134px;top:730px" width="15" height="15" viewBox="0 0 15 15"><circle cx="7.5" cy="7.5" r="7" fill="#9b988f" stroke="#6f6d66" stroke-width="1"/><path d="M4.2 6h6.6L7.5 10z" fill="#4c4a45"/></svg>
<div class="a" style="left:0px;top:752.3px;width:304px;height:14.6px;background:#9c9a93;"></div>
<div class="a" style="left:0px;top:757.9px;width:150px;height:2.8px;background:#2b2a26;"></div>
<div class="a" style="left:0px;top:774.7px;width:304px;height:15.4px;background:#716f68;"></div>
<div class="a" style="left:0px;top:781.9px;width:304px;height:1px;background:#8b8983;"></div>
<div class="a" style="left:-2.5px;top:776.7px;width:1px;height:13.4px;background:#b9b8b3;"></div>
<span class="t" id="t63" style="top:777.96px;font-size:9.5px;line-height:9.5px;color:#c2c1bc;font-family:'DejaVu Sans Condensed','DejaVu Sans',sans-serif;left:-2px;transform:translateX(-50%);letter-spacing:-0.5px;">-60</span>
<div class="a" style="left:21.5px;top:776.7px;width:1px;height:13.4px;background:#b9b8b3;"></div>
<span class="t" id="t64" style="top:777.96px;font-size:9.5px;line-height:9.5px;color:#c2c1bc;font-family:'DejaVu Sans Condensed','DejaVu Sans',sans-serif;left:22px;transform:translateX(-50%);letter-spacing:-0.5px;">-54</span>
<div class="a" style="left:48.5px;top:776.7px;width:1px;height:13.4px;background:#b9b8b3;"></div>
<span class="t" id="t65" style="top:777.96px;font-size:9.5px;line-height:9.5px;color:#c2c1bc;font-family:'DejaVu Sans Condensed','DejaVu Sans',sans-serif;left:49px;transform:translateX(-50%);letter-spacing:-0.5px;">-48</span>
<div class="a" style="left:75.5px;top:776.7px;width:1px;height:13.4px;background:#b9b8b3;"></div>
<span class="t" id="t66" style="top:777.96px;font-size:9.5px;line-height:9.5px;color:#c2c1bc;font-family:'DejaVu Sans Condensed','DejaVu Sans',sans-serif;left:76px;transform:translateX(-50%);letter-spacing:-0.5px;">-42</span>
<div class="a" style="left:102.1px;top:776.7px;width:1px;height:13.4px;background:#b9b8b3;"></div>
<span class="t" id="t67" style="top:777.96px;font-size:9.5px;line-height:9.5px;color:#c2c1bc;font-family:'DejaVu Sans Condensed','DejaVu Sans',sans-serif;left:102.6px;transform:translateX(-50%);letter-spacing:-0.5px;">-36</span>
<div class="a" style="left:128.7px;top:776.7px;width:1px;height:13.4px;background:#b9b8b3;"></div>
<span class="t" id="t68" style="top:777.96px;font-size:9.5px;line-height:9.5px;color:#c2c1bc;font-family:'DejaVu Sans Condensed','DejaVu Sans',sans-serif;left:129.2px;transform:translateX(-50%);letter-spacing:-0.5px;">-30</span>
<div class="a" style="left:0px;top:808.5px;width:304px;height:119.2px;background:#b5b3ac;"></div>
<div class="a" style="left:0px;top:908.9px;width:304px;height:18.8px;background:#a5a39b;"></div>
<div class="a" style="left:0px;top:808.5px;width:304px;height:1px;background:#8a8882;"></div>
<div class="a" style="left:0px;top:826px;width:304px;height:16.4px;background:#383838;"></div>
<span class="t" id="t69" style="top:829.06px;font-size:12.8px;line-height:12.8px;color:#e4e4e2;font-family:'DejaVu Sans',sans-serif;left:0px;">2</span>
<div class="a" style="left:-3px;top:848.8px;width:7.2px;height:15.4px;background:#8b8880;border:1px solid #c4c2bb;border-radius:2px;"></div>
<div class="a" style="left:11px;top:848.8px;width:138px;height:15.4px;background:#8b8880;border:1px solid #c4c2bb;border-radius:2px;"></div>
<svg style="left:134px;top:849px" width="15" height="15" viewBox="0 0 15 15"><circle cx="7.5" cy="7.5" r="7" fill="#9b988f" stroke="#6f6d66" stroke-width="1"/><path d="M4.2 6h6.6L7.5 10z" fill="#4c4a45"/></svg>
<div class="a" style="left:0px;top:871.3px;width:304px;height:14.6px;background:#9c9a93;"></div>
<div class="a" style="left:0px;top:876.9px;width:150px;height:2.8px;background:#2b2a26;"></div>
<div class="a" style="left:0px;top:893.7px;width:304px;height:15.4px;background:#716f68;"></div>
<div class="a" style="left:0px;top:900.9px;width:304px;height:1px;background:#8b8983;"></div>
<div class="a" style="left:-2.5px;top:895.7px;width:1px;height:13.4px;background:#b9b8b3;"></div>
<span class="t" id="t70" style="top:896.96px;font-size:9.5px;line-height:9.5px;color:#c2c1bc;font-family:'DejaVu Sans Condensed','DejaVu Sans',sans-serif;left:-2px;transform:translateX(-50%);letter-spacing:-0.5px;">-60</span>
<div class="a" style="left:21.5px;top:895.7px;width:1px;height:13.4px;background:#b9b8b3;"></div>
<span class="t" id="t71" style="top:896.96px;font-size:9.5px;line-height:9.5px;color:#c2c1bc;font-family:'DejaVu Sans Condensed','DejaVu Sans',sans-serif;left:22px;transform:translateX(-50%);letter-spacing:-0.5px;">-54</span>
<div class="a" style="left:48.5px;top:895.7px;width:1px;height:13.4px;background:#b9b8b3;"></div>
<span class="t" id="t72" style="top:896.96px;font-size:9.5px;line-height:9.5px;color:#c2c1bc;font-family:'DejaVu Sans Condensed','DejaVu Sans',sans-serif;left:49px;transform:translateX(-50%);letter-spacing:-0.5px;">-48</span>
<div class="a" style="left:75.5px;top:895.7px;width:1px;height:13.4px;background:#b9b8b3;"></div>
<span class="t" id="t73" style="top:896.96px;font-size:9.5px;line-height:9.5px;color:#c2c1bc;font-family:'DejaVu Sans Condensed','DejaVu Sans',sans-serif;left:76px;transform:translateX(-50%);letter-spacing:-0.5px;">-42</span>
<div class="a" style="left:102.1px;top:895.7px;width:1px;height:13.4px;background:#b9b8b3;"></div>
<span class="t" id="t74" style="top:896.96px;font-size:9.5px;line-height:9.5px;color:#c2c1bc;font-family:'DejaVu Sans Condensed','DejaVu Sans',sans-serif;left:102.6px;transform:translateX(-50%);letter-spacing:-0.5px;">-36</span>
<div class="a" style="left:128.7px;top:895.7px;width:1px;height:13.4px;background:#b9b8b3;"></div>
<span class="t" id="t75" style="top:896.96px;font-size:9.5px;line-height:9.5px;color:#c2c1bc;font-family:'DejaVu Sans Condensed','DejaVu Sans',sans-serif;left:129.2px;transform:translateX(-50%);letter-spacing:-0.5px;">-30</span>
<span class="t" id="t76" style="top:256.04px;font-size:12px;line-height:12px;color:#f2f2f0;font-family:'DejaVu Sans',sans-serif;left:43.2px;letter-spacing:-0.38px;">record disabled</span>
<div class="a" style="left:48px;top:277.4px;width:25px;height:13.6px;background:linear-gradient(90deg,#efefef 0%,#c9c9c9 18%,#8f8f8f 45%,#bdbdbd 55%,#d9d9d9 80%,#f4f4f4 100%);border-radius:1.5px;box-shadow:0 1.5px 2px rgba(0,0,0,.55);"></div>
<div class="a" style="left:59.7px;top:279.9px;width:1.6px;height:8.6px;background:#2a2a2a;"></div>
<div class="a" style="left:131.4px;top:277px;width:1px;height:15px;background:#2b2a26;"></div>
<span class="t" id="t77" style="top:850.72px;font-size:12.5px;line-height:12.5px;color:#f0f0ee;font-family:'DejaVu Sans',sans-serif;left:110px;letter-spacing:-0.87px;">TT1</span>
<div class="a" style="left:155px;top:848.5px;width:37.2px;height:16.4px;background:linear-gradient(180deg,#6cc474,#48a552);border:1px solid #2f8038;border-radius:2px;"></div>
<div class="a" style="left:178.2px;top:849.5px;width:1px;height:14.4px;background:#2c7a35;"></div>
<span class="t" id="t78" style="top:852.01px;font-size:10.5px;line-height:10.5px;color:#1c5a26;font-family:'DejaVu Sans',sans-serif;left:159.6px;letter-spacing:0.6px;">F X</span>
<svg style="left:180.6px;top:851.3px" width="10" height="11" viewBox="0 0 10 11"><path d="M2.6 2.9a3.8 3.8 0 1 0 4.8 0" fill="none" stroke="#1c5a25" stroke-width="1.3"/><path d="M5 .8V5.4" stroke="#1c5a25" stroke-width="1.3"/></svg>
<div class="a" style="left:206px;top:849.1px;width:41.4px;height:15.6px;background:#8b8880;border-radius:2px;"></div>
<svg style="left:198px;top:848.1px" width="17" height="17" viewBox="0 0 17 17"><circle cx="8.5" cy="8.5" r="8" fill="#e9e9e7" stroke="#7a7872" stroke-width="1"/><path d="M8.5 0.5V8" stroke="#222" stroke-width="1.4"/></svg>
<span class="t" id="t79" style="top:850.72px;font-size:12.5px;line-height:12.5px;color:#f0f0ee;font-family:'DejaVu Sans',sans-serif;left:216px;letter-spacing:-0.95px;">enter</span>
<div class="a" style="left:254.4px;top:848.7px;width:17px;height:16.4px;background:linear-gradient(135deg,#f4f4f2 0%,#e6e5e1 62%,#d8453c 63%,#d8453c 78%,#4a90d9 79%);border:1px solid #8d8b84;border-radius:2px;"></div>
<span class="t" id="t80" style="top:852.43px;font-size:10px;line-height:10px;color:#2a2a2a;font-family:'DejaVu Sans',sans-serif;left:262.2px;transform:translateX(-50%);">M</span>
<div class="a" style="left:274.4px;top:848.7px;width:17px;height:16.4px;background:linear-gradient(135deg,#f4f4f2 0%,#e6e5e1 62%,#e0b43c 63%,#e0b43c 78%,#d8453c 79%);border:1px solid #8d8b84;border-radius:2px;"></div>
<span class="t" id="t81" style="top:852.43px;font-size:10px;line-height:10px;color:#2a2a2a;font-family:'DejaVu Sans',sans-serif;left:282.2px;transform:translateX(-50%);">S</span>
<div class="a" style="left:0px;top:871.3px;width:304px;height:20px;background:#a9a79f;"></div>
<div class="a" style="left:0px;top:872.3px;width:150.6px;height:17px;background:#1d1c1a;"></div>
<div class="a" style="left:0px;top:875.3px;width:150.6px;height:2px;background:#55534d;"></div>
<div class="a" style="left:57.6px;top:870.7px;width:21.4px;height:14px;background:linear-gradient(90deg,#efefef 0%,#c9c9c9 18%,#8f8f8f 45%,#bdbdbd 55%,#d9d9d9 80%,#f4f4f4 100%);border-radius:1.5px;box-shadow:0 1.5px 2px rgba(0,0,0,.55);"></div>
<div class="a" style="left:67.5px;top:873.2px;width:1.6px;height:9px;background:#2a2a2a;"></div>
<div class="a" style="left:131.4px;top:872.3px;width:1px;height:14px;background:#6e6c66;"></div>
<div class="a" style="left:155.6px;top:872.3px;width:35px;height:17px;background:#8b8880;border-radius:2px;"></div>
<span class="t" id="t82" style="top:874.52px;font-size:12.5px;line-height:12.5px;color:#f0f0ee;font-family:'DejaVu Sans',sans-serif;left:164px;letter-spacing:-1.36px;">1.91</span>
<div class="a" style="left:206px;top:872.3px;width:41.4px;height:17px;background:#8b8880;border-radius:2px;"></div>
<svg style="left:198px;top:871.7px" width="17" height="17" viewBox="0 0 17 17"><circle cx="8.5" cy="8.5" r="8" fill="#e9e9e7" stroke="#7a7872" stroke-width="1"/><path d="M8.5 0.5V8" stroke="#222" stroke-width="1.4"/></svg>
<span class="t" id="t83" style="top:874.52px;font-size:12.5px;line-height:12.5px;color:#f0f0ee;font-family:'DejaVu Sans',sans-serif;left:215px;letter-spacing:-1.8px;">100W</span>
<div class="a" style="left:254.4px;top:872.9px;width:17px;height:16px;background:#b9b7b0;border:1px solid #8d8b84;border-radius:2px;"></div>
<svg style="left:258.6px;top:875.9px" width="8" height="9" viewBox="0 0 8 9"><path d="M1 .8L7 4.5L1 8.2z" fill="none" stroke="#6a6862" stroke-width="1.1"/></svg>
<div class="a" style="left:272.4px;top:872.9px;width:19px;height:16px;background:#a19f98;border:1px solid #8d8b84;border-radius:2px;"></div>
<span class="t" id="t84" style="top:877.3px;font-size:8.5px;line-height:8.5px;color:#e8e8e6;font-family:'DejaVu Sans',sans-serif;font-weight:bold;left:274.6px;letter-spacing:-0.3px;">IN</span>
<div class="a" style="left:304px;top:0px;width:19px;height:880px;background:#3b3b3b;"></div>
<div class="a" style="left:297.6px;top:213.6px;width:7.6px;height:667px;background:#3b3b3b;"></div>
<div class="a" style="left:297.6px;top:809.5px;width:7.6px;height:118px;background:#3c83c4;"></div>
<div class="a" style="left:305.2px;top:809.5px;width:17.8px;height:118px;background:#2f2f2f;"></div>
<span class="t" id="t85" style="top:862.22px;font-size:12.5px;line-height:12.5px;color:#dededc;font-family:'DejaVu Sans',sans-serif;left:309.6px;">6</span>
<div class="a" style="left:323px;top:0px;width:1.6px;height:880px;background:#f2f2f0;"></div>
<div class="a" style="left:324.6px;top:0px;width:3.6px;height:880px;background:#a0a09c;"></div>
<div class="a" style="left:328.2px;top:0px;width:3.8px;height:880px;background:#3a3a3a;"></div>
<div class="a" style="left:332px;top:0px;width:5.8px;height:880px;background:#8f8f8c;"></div>
<div class="a" style="left:337.8px;top:0px;width:1.6px;height:880px;background:#f4f4f2;"></div>
<div class="a" style="left:0px;top:0px;width:339.4px;height:1px;background:#dededa;"></div>
</div>
<div class="a" style="left:44px;top:312px;width:1169px;height:535px;background:#f0f0f0;overflow:hidden;box-shadow:0 0 0 1px rgba(110,110,110,.3),0 1px 4px rgba(0,0,0,.2);">
</div>
<div class="a" style="left:44px;top:312px;width:1169px;height:37.8px;background:#ffffff;"></div>
<span class="t" id="t86" style="top:324.13px;font-size:14.5px;line-height:14.5px;color:#9a9a9a;left:53.6px;letter-spacing:-0.23px;">Browse packages</span>
<span class="t" id="t87" style="top:364.35px;font-size:14px;line-height:14px;color:#000;font-family:'DejaVu Sans Condensed','DejaVu Sans',sans-serif;left:53.4px;letter-spacing:-0.3px;">Filter:</span>
<div class="a" style="left:88px;top:357.2px;width:700px;height:27.4px;background:#fff;border:1px solid #7a7a7a;"></div>
<span class="t" id="t88" style="top:361.6px;font-size:13px;line-height:13px;color:#000;font-family:'DejaVu Sans Condensed','DejaVu Sans',sans-serif;left:94.6px;letter-spacing:-0.4px;">open</span>
<div class="a" style="left:53.4px;top:393px;width:1151px;height:407px;background:#fff;border:1px solid #828790;"></div>
<div class="a" style="left:74.6px;top:394px;width:1px;height:26px;background:#e5e5e5;"></div>
<span class="t" id="t89" style="top:401.2px;font-size:13px;line-height:13px;color:#000;font-family:'DejaVu Sans Condensed','DejaVu Sans',sans-serif;left:81.4px;letter-spacing:-0.1px;">Package</span>
<div class="a" style="left:402px;top:394px;width:1px;height:26px;background:#e5e5e5;"></div>
<span class="t" id="t90" style="top:401.2px;font-size:13px;line-height:13px;color:#000;font-family:'DejaVu Sans Condensed','DejaVu Sans',sans-serif;left:409px;letter-spacing:-0.1px;">Category</span>
<div class="a" style="left:532px;top:394px;width:1px;height:26px;background:#e5e5e5;"></div>
<span class="t" id="t91" style="top:401.2px;font-size:13px;line-height:13px;color:#000;font-family:'DejaVu Sans Condensed','DejaVu Sans',sans-serif;left:539px;letter-spacing:-0.1px;">Version</span>
<div class="a" style="left:739.2px;top:394px;width:1px;height:26px;background:#e5e5e5;"></div>
<span class="t" id="t92" style="top:401.2px;font-size:13px;line-height:13px;color:#000;font-family:'DejaVu Sans Condensed','DejaVu Sans',sans-serif;left:746.2px;letter-spacing:-0.1px;">Author</span>
<div class="a" style="left:991.2px;top:394px;width:1px;height:26px;background:#e5e5e5;"></div>
<span class="t" id="t93" style="top:401.2px;font-size:13px;line-height:13px;color:#000;font-family:'DejaVu Sans Condensed','DejaVu Sans',sans-serif;left:998.2px;letter-spacing:-0.1px;">Type</span>
<span class="t" id="t94" style="top:423.2px;font-size:13px;line-height:13px;color:#000;font-family:'DejaVu Sans Condensed','DejaVu Sans',sans-serif;left:61.6px;">i</span>
<span class="t" id="t95" style="top:423.2px;font-size:13px;line-height:13px;color:#000;font-family:'DejaVu Sans Condensed','DejaVu Sans',sans-serif;left:81.3px;letter-spacing:-0.1px;">Open and close FX chain</span>
<span class="t" id="t96" style="top:423.2px;font-size:13px;line-height:13px;color:#000;font-family:'DejaVu Sans Condensed','DejaVu Sans',sans-serif;left:409px;letter-spacing:-0.1px;">Track Properties</span>
<span class="t" id="t97" style="top:423.2px;font-size:13px;line-height:13px;color:#000;font-family:'DejaVu Sans Condensed','DejaVu Sans',sans-serif;left:539px;letter-spacing:-0.1px;">1.0</span>
<span class="t" id="t98" style="top:423.2px;font-size:13px;line-height:13px;color:#000;font-family:'DejaVu Sans Condensed','DejaVu Sans',sans-serif;left:746.2px;letter-spacing:-0.1px;">X-Raym</span>
<span class="t" id="t99" style="top:423.2px;font-size:13px;line-height:13px;color:#000;font-family:'DejaVu Sans Condensed','DejaVu Sans',sans-serif;left:998.2px;letter-spacing:-0.1px;">Script</span>
<span class="t" id="t100" style="top:443.2px;font-size:13px;line-height:13px;color:#000;font-family:'DejaVu Sans Condensed','DejaVu Sans',sans-serif;left:61.6px;">i</span>
<span class="t" id="t101" style="top:443.2px;font-size:13px;line-height:13px;color:#000;font-family:'DejaVu Sans Condensed','DejaVu Sans',sans-serif;left:81.3px;letter-spacing:-0.1px;">Open and close media explorer</span>
<span class="t" id="t102" style="top:443.2px;font-size:13px;line-height:13px;color:#000;font-family:'DejaVu Sans Condensed','DejaVu Sans',sans-serif;left:409px;letter-spacing:-0.1px;">Various</span>
<span class="t" id="t103" style="top:443.2px;font-size:13px;line-height:13px;color:#000;font-family:'DejaVu Sans Condensed','DejaVu Sans',sans-serif;left:539px;letter-spacing:-0.1px;">1.0</span>
<span class="t" id="t104" style="top:443.2px;font-size:13px;line-height:13px;color:#000;font-family:'DejaVu Sans Condensed','DejaVu Sans',sans-serif;left:746.2px;letter-spacing:-0.1px;">X-Raym</span>
<span class="t" id="t105" style="top:443.2px;font-size:13px;line-height:13px;color:#000;font-family:'DejaVu Sans Condensed','DejaVu Sans',sans-serif;left:998.2px;letter-spacing:-0.1px;">Script</span>
<span class="t" id="t106" style="top:463.2px;font-size:13px;line-height:13px;color:#000;font-family:'DejaVu Sans Condensed','DejaVu Sans',sans-serif;left:61.6px;">i</span>
<span class="t" id="t107" style="top:463.2px;font-size:13px;line-height:13px;color:#000;font-family:'DejaVu Sans Condensed','DejaVu Sans',sans-serif;left:81.3px;letter-spacing:-0.1px;">Open folder of selected item</span>
<span class="t" id="t108" style="top:463.2px;font-size:13px;line-height:13px;color:#000;font-family:'DejaVu Sans Condensed','DejaVu Sans',sans-serif;left:409px;letter-spacing:-0.1px;">Items Properties</span>
<span class="t" id="t109" style="top:463.2px;font-size:13px;line-height:13px;color:#000;font-family:'DejaVu Sans Condensed','DejaVu Sans',sans-serif;left:539px;letter-spacing:-0.1px;">1.0</span>
<span class="t" id="t110" style="top:463.2px;font-size:13px;line-height:13px;color:#000;font-family:'DejaVu Sans Condensed','DejaVu Sans',sans-serif;left:746.2px;letter-spacing:-0.1px;">X-Raym</span>
<span class="t" id="t111" style="top:463.2px;font-size:13px;line-height:13px;color:#000;font-family:'DejaVu Sans Condensed','DejaVu Sans',sans-serif;left:998.2px;letter-spacing:-0.1px;">Script</span>
<span class="t" id="t112" style="top:483.2px;font-size:13px;line-height:13px;color:#000;font-family:'DejaVu Sans Condensed','DejaVu Sans',sans-serif;left:61.6px;">i</span>
<span class="t" id="t113" style="top:483.2px;font-size:13px;line-height:13px;color:#000;font-family:'DejaVu Sans Condensed','DejaVu Sans',sans-serif;left:81.3px;letter-spacing:-0.1px;">Open FX browser for selected track</span>
<span class="t" id="t114" style="top:483.2px;font-size:13px;line-height:13px;color:#000;font-family:'DejaVu Sans Condensed','DejaVu Sans',sans-serif;left:409px;letter-spacing:-0.1px;">FX</span>
<span class="t" id="t115" style="top:483.2px;font-size:13px;line-height:13px;color:#000;font-family:'DejaVu Sans Condensed','DejaVu Sans',sans-serif;left:539px;letter-spacing:-0.1px;">1.0</span>
<span class="t" id="t116" style="top:483.2px;font-size:13px;line-height:13px;color:#000;font-family:'DejaVu Sans Condensed','DejaVu Sans',sans-serif;left:746.2px;letter-spacing:-0.1px;">me2beats</span>
<span class="t" id="t117" style="top:483.2px;font-size:13px;line-height:13px;color:#000;font-family:'DejaVu Sans Condensed','DejaVu Sans',sans-serif;left:998.2px;letter-spacing:-0.1px;">Script</span>
<span class="t" id="t118" style="top:503.2px;font-size:13px;line-height:13px;color:#000;font-family:'DejaVu Sans Condensed','DejaVu Sans',sans-serif;left:61.6px;">i</span>
<span class="t" id="t119" style="top:503.2px;font-size:13px;line-height:13px;color:#000;font-family:'DejaVu Sans Condensed','DejaVu Sans',sans-serif;left:81.3px;letter-spacing:-0.1px;">Open Media Explorer path</span>
<span class="t" id="t120" style="top:503.2px;font-size:13px;line-height:13px;color:#000;font-family:'DejaVu Sans Condensed','DejaVu Sans',sans-serif;left:409px;letter-spacing:-0.1px;">Various</span>
<span class="t" id="t121" style="top:503.2px;font-size:13px;line-height:13px;color:#000;font-family:'DejaVu Sans Condensed','DejaVu Sans',sans-serif;left:539px;letter-spacing:-0.1px;">1.1</span>
<span class="t" id="t122" style="top:503.2px;font-size:13px;line-height:13px;color:#000;font-family:'DejaVu Sans Condensed','DejaVu Sans',sans-serif;left:746.2px;letter-spacing:-0.1px;">Lokasenna</span>
<span class="t" id="t123" style="top:503.2px;font-size:13px;line-height:13px;color:#000;font-family:'DejaVu Sans Condensed','DejaVu Sans',sans-serif;left:998.2px;letter-spacing:-0.1px;">Script</span>
<span class="t" id="t124" style="top:523.2px;font-size:13px;line-height:13px;color:#000;font-family:'DejaVu Sans Condensed','DejaVu Sans',sans-serif;left:61.6px;">i</span>
<span class="t" id="t125" style="top:523.2px;font-size:13px;line-height:13px;color:#000;font-family:'DejaVu Sans Condensed','DejaVu Sans',sans-serif;left:81.3px;letter-spacing:-0.1px;">Open media item in explorer</span>
<span class="t" id="t126" style="top:523.2px;font-size:13px;line-height:13px;color:#000;font-family:'DejaVu Sans Condensed','DejaVu Sans',sans-serif;left:409px;letter-spacing:-0.1px;">Items Properties</span>
<span class="t" id="t127" style="top:523.2px;font-size:13px;line-height:13px;color:#000;font-family:'DejaVu Sans Condensed','DejaVu Sans',sans-serif;left:539px;letter-spacing:-0.1px;">1.0</span>
<span class="t" id="t128" style="top:523.2px;font-size:13px;line-height:13px;color:#000;font-family:'DejaVu Sans Condensed','DejaVu Sans',sans-serif;left:746.2px;letter-spacing:-0.1px;">X-Raym</span>
<span class="t" id="t129" style="top:523.2px;font-size:13px;line-height:13px;color:#000;font-family:'DejaVu Sans Condensed','DejaVu Sans',sans-serif;left:998.2px;letter-spacing:-0.1px;">Script</span>
<span class="t" id="t130" style="top:543.2px;font-size:13px;line-height:13px;color:#000;font-family:'DejaVu Sans Condensed','DejaVu Sans',sans-serif;left:61.6px;">i</span>
<span class="t" id="t131" style="top:543.2px;font-size:13px;line-height:13px;color:#000;font-family:'DejaVu Sans Condensed','DejaVu Sans',sans-serif;left:81.3px;letter-spacing:-0.1px;">Open media item source folder</span>
<span class="t" id="t132" style="top:543.2px;font-size:13px;line-height:13px;color:#000;font-family:'DejaVu Sans Condensed','DejaVu Sans',sans-serif;left:409px;letter-spacing:-0.1px;">Items Properties</span>
<span class="t" id="t133" style="top:543.2px;font-size:13px;line-height:13px;color:#000;font-family:'DejaVu Sans Condensed','DejaVu Sans',sans-serif;left:539px;letter-spacing:-0.1px;">1.2</span>
<span class="t" id="t134" style="top:543.2px;font-size:13px;line-height:13px;color:#000;font-family:'DejaVu Sans Condensed','DejaVu Sans',sans-serif;left:746.2px;letter-spacing:-0.1px;">X-Raym</span>
<span class="t" id="t135" style="top:543.2px;font-size:13px;line-height:13px;color:#000;font-family:'DejaVu Sans Condensed','DejaVu Sans',sans-serif;left:998.2px;letter-spacing:-0.1px;">Script</span>
<span class="t" id="t136" style="top:563.2px;font-size:13px;line-height:13px;color:#000;font-family:'DejaVu Sans Condensed','DejaVu Sans',sans-serif;left:61.6px;">i</span>
<span class="t" id="t137" style="top:563.2px;font-size:13px;line-height:13px;color:#000;font-family:'DejaVu Sans Condensed','DejaVu Sans',sans-serif;left:81.3px;letter-spacing:-0.1px;">Open project autosave folder</span>
<span class="t" id="t138" style="top:563.2px;font-size:13px;line-height:13px;color:#000;font-family:'DejaVu Sans Condensed','DejaVu Sans',sans-serif;left:409px;letter-spacing:-0.1px;">Project Properties</span>
<span class="t" id="t139" style="top:563.2px;font-size:13px;line-height:13px;color:#000;font-family:'DejaVu Sans Condensed','DejaVu Sans',sans-serif;left:539px;letter-spacing:-0.1px;">1.0</span>
<span class="t" id="t140" style="top:563.2px;font-size:13px;line-height:13px;color:#000;font-family:'DejaVu Sans Condensed','DejaVu Sans',sans-serif;left:746.2px;letter-spacing:-0.1px;">X-Raym</span>
<span class="t" id="t141" style="top:563.2px;font-size:13px;line-height:13px;color:#000;font-family:'DejaVu Sans Condensed','DejaVu Sans',sans-serif;left:998.2px;letter-spacing:-0.1px;">Script</span>
<span class="t" id="t142" style="top:583.2px;font-size:13px;line-height:13px;color:#000;font-family:'DejaVu Sans Condensed','DejaVu Sans',sans-serif;left:61.6px;">i</span>
<span class="t" id="t143" style="top:583.2px;font-size:13px;line-height:13px;color:#000;font-family:'DejaVu Sans Condensed','DejaVu Sans',sans-serif;left:81.3px;letter-spacing:-0.1px;">Open project folder in explorer or finder</span>
<span class="t" id="t144" style="top:583.2px;font-size:13px;line-height:13px;color:#000;font-family:'DejaVu Sans Condensed','DejaVu Sans',sans-serif;left:409px;letter-spacing:-0.1px;">Various</span>
<span class="t" id="t145" style="top:583.2px;font-size:13px;line-height:13px;color:#000;font-family:'DejaVu Sans Condensed','DejaVu Sans',sans-serif;left:539px;letter-spacing:-0.1px;">1.1.1</span>
<span class="t" id="t146" style="top:583.2px;font-size:13px;line-height:13px;color:#000;font-family:'DejaVu Sans Condensed','DejaVu Sans',sans-serif;left:746.2px;letter-spacing:-0.1px;">X-Raym</span>
<span class="t" id="t147" style="top:583.2px;font-size:13px;line-height:13px;color:#000;font-family:'DejaVu Sans Condensed','DejaVu Sans',sans-serif;left:998.2px;letter-spacing:-0.1px;">Script</span>
<span class="t" id="t148" style="top:603.2px;font-size:13px;line-height:13px;color:#000;font-family:'DejaVu Sans Condensed','DejaVu Sans',sans-serif;left:61.6px;">i</span>
<span class="t" id="t149" style="top:603.2px;font-size:13px;line-height:13px;color:#000;font-family:'DejaVu Sans Condensed','DejaVu Sans',sans-serif;left:81.3px;letter-spacing:-0.1px;">Open Reaper folder</span>
<span class="t" id="t150" style="top:603.2px;font-size:13px;line-height:13px;color:#000;font-family:'DejaVu Sans Condensed','DejaVu Sans',sans-serif;left:409px;letter-spacing:-0.1px;">Various</span>
<span class="t" id="t151" style="top:603.2px;font-size:13px;line-height:13px;color:#000;font-family:'DejaVu Sans Condensed','DejaVu Sans',sans-serif;left:539px;letter-spacing:-0.1px;">1.0</span>
<span class="t" id="t152" style="top:603.2px;font-size:13px;line-height:13px;color:#000;font-family:'DejaVu Sans Condensed','DejaVu Sans',sans-serif;left:746.2px;letter-spacing:-0.1px;">Lokasenna</span>
<span class="t" id="t153" style="top:603.2px;font-size:13px;line-height:13px;color:#000;font-family:'DejaVu Sans Condensed','DejaVu Sans',sans-serif;left:998.2px;letter-spacing:-0.1px;">Script</span>
<span class="t" id="t154" style="top:623.2px;font-size:13px;line-height:13px;color:#000;font-family:'DejaVu Sans Condensed','DejaVu Sans',sans-serif;left:61.6px;">i</span>
<span class="t" id="t155" style="top:623.2px;font-size:13px;line-height:13px;color:#000;font-family:'DejaVu Sans Condensed','DejaVu Sans',sans-serif;left:81.3px;letter-spacing:-0.1px;">Open Resource folder</span>
<span class="t" id="t156" style="top:623.2px;font-size:13px;line-height:13px;color:#000;font-family:'DejaVu Sans Condensed','DejaVu Sans',sans-serif;left:409px;letter-spacing:-0.1px;">Various</span>
<span class="t" id="t157" style="top:623.2px;font-size:13px;line-height:13px;color:#000;font-family:'DejaVu Sans Condensed','DejaVu Sans',sans-serif;left:539px;letter-spacing:-0.1px;">1.0</span>
<span class="t" id="t158" style="top:623.2px;font-size:13px;line-height:13px;color:#000;font-family:'DejaVu Sans Condensed','DejaVu Sans',sans-serif;left:746.2px;letter-spacing:-0.1px;">Lokasenna</span>
<span class="t" id="t159" style="top:623.2px;font-size:13px;line-height:13px;color:#000;font-family:'DejaVu Sans Condensed','DejaVu Sans',sans-serif;left:998.2px;letter-spacing:-0.1px;">Script</span>
<span class="t" id="t160" style="top:643.2px;font-size:13px;line-height:13px;color:#000;font-family:'DejaVu Sans Condensed','DejaVu Sans',sans-serif;left:61.6px;">i</span>
<span class="t" id="t161" style="top:643.2px;font-size:13px;line-height:13px;color:#000;font-family:'DejaVu Sans Condensed','DejaVu Sans',sans-serif;left:81.3px;letter-spacing:-0.1px;">Open toolbar 1</span>
<span class="t" id="t162" style="top:643.2px;font-size:13px;line-height:13px;color:#000;font-family:'DejaVu Sans Condensed','DejaVu Sans',sans-serif;left:409px;letter-spacing:-0.1px;">Other</span>
<span class="t" id="t163" style="top:643.2px;font-size:13px;line-height:13px;color:#000;font-family:'DejaVu Sans Condensed','DejaVu Sans',sans-serif;left:539px;letter-spacing:-0.1px;">0.5</span>
<span class="t" id="t164" style="top:643.2px;font-size:13px;line-height:13px;color:#000;font-family:'DejaVu Sans Condensed','DejaVu Sans',sans-serif;left:746.2px;letter-spacing:-0.1px;">me2beats</span>
<span class="t" id="t165" style="top:643.2px;font-size:13px;line-height:13px;color:#000;font-family:'DejaVu Sans Condensed','DejaVu Sans',sans-serif;left:998.2px;letter-spacing:-0.1px;">Script</span>
<span class="t" id="t166" style="top:663.2px;font-size:13px;line-height:13px;color:#000;font-family:'DejaVu Sans Condensed','DejaVu Sans',sans-serif;left:61.6px;">i</span>
<span class="t" id="t167" style="top:663.2px;font-size:13px;line-height:13px;color:#000;font-family:'DejaVu Sans Condensed','DejaVu Sans',sans-serif;left:81.3px;letter-spacing:-0.1px;">Solo track with opened FX chain</span>
<span class="t" id="t168" style="top:663.2px;font-size:13px;line-height:13px;color:#000;font-family:'DejaVu Sans Condensed','DejaVu Sans',sans-serif;left:409px;letter-spacing:-0.1px;">Tracks Properties</span>
<span class="t" id="t169" style="top:663.2px;font-size:13px;line-height:13px;color:#000;font-family:'DejaVu Sans Condensed','DejaVu Sans',sans-serif;left:539px;letter-spacing:-0.1px;">1.0</span>
<span class="t" id="t170" style="top:663.2px;font-size:13px;line-height:13px;color:#000;font-family:'DejaVu Sans Condensed','DejaVu Sans',sans-serif;left:746.2px;letter-spacing:-0.1px;">MPL</span>
<span class="t" id="t171" style="top:663.2px;font-size:13px;line-height:13px;color:#000;font-family:'DejaVu Sans Condensed','DejaVu Sans',sans-serif;left:998.2px;letter-spacing:-0.1px;">Script</span>
<span class="t" id="t172" style="top:683.2px;font-size:13px;line-height:13px;color:#000;font-family:'DejaVu Sans Condensed','DejaVu Sans',sans-serif;left:61.6px;">i</span>
<span class="t" id="t173" style="top:683.2px;font-size:13px;line-height:13px;color:#000;font-family:'DejaVu Sans Condensed','DejaVu Sans',sans-serif;left:81.3px;letter-spacing:-0.1px;">Toggle open inline editors of item at mouse</span>
<span class="t" id="t174" style="top:683.2px;font-size:13px;line-height:13px;color:#000;font-family:'DejaVu Sans Condensed','DejaVu Sans',sans-serif;left:409px;letter-spacing:-0.1px;">Items</span>
<span class="t" id="t175" style="top:683.2px;font-size:13px;line-height:13px;color:#000;font-family:'DejaVu Sans Condensed','DejaVu Sans',sans-serif;left:539px;letter-spacing:-0.1px;">1.01</span>
<span class="t" id="t176" style="top:683.2px;font-size:13px;line-height:13px;color:#000;font-family:'DejaVu Sans Condensed','DejaVu Sans',sans-serif;left:746.2px;letter-spacing:-0.1px;">me2beats</span>
<span class="t" id="t177" style="top:683.2px;font-size:13px;line-height:13px;color:#000;font-family:'DejaVu Sans Condensed','DejaVu Sans',sans-serif;left:998.2px;letter-spacing:-0.1px;">Script</span>
<span class="t" id="t178" style="top:703.2px;font-size:13px;line-height:13px;color:#000;font-family:'DejaVu Sans Condensed','DejaVu Sans',sans-serif;left:61.6px;">i</span>
<span class="t" id="t179" style="top:703.2px;font-size:13px;line-height:13px;color:#000;font-family:'DejaVu Sans Condensed','DejaVu Sans',sans-serif;left:81.3px;letter-spacing:-0.1px;">Toggle open items inline editors</span>
<span class="t" id="t180" style="top:703.2px;font-size:13px;line-height:13px;color:#000;font-family:'DejaVu Sans Condensed','DejaVu Sans',sans-serif;left:409px;letter-spacing:-0.1px;">Items</span>
<span class="t" id="t181" style="top:703.2px;font-size:13px;line-height:13px;color:#000;font-family:'DejaVu Sans Condensed','DejaVu Sans',sans-serif;left:539px;letter-spacing:-0.1px;">1.0</span>
<span class="t" id="t182" style="top:703.2px;font-size:13px;line-height:13px;color:#000;font-family:'DejaVu Sans Condensed','DejaVu Sans',sans-serif;left:746.2px;letter-spacing:-0.1px;">me2beats</span>
<span class="t" id="t183" style="top:703.2px;font-size:13px;line-height:13px;color:#000;font-family:'DejaVu Sans Condensed','DejaVu Sans',sans-serif;left:998.2px;letter-spacing:-0.1px;">Script</span>
<span class="t" id="t184" style="top:723.2px;font-size:13px;line-height:13px;color:#000;font-family:'DejaVu Sans Condensed','DejaVu Sans',sans-serif;left:61.6px;">i</span>
<span class="t" id="t185" style="top:723.2px;font-size:13px;line-height:13px;color:#000;font-family:'DejaVu Sans Condensed','DejaVu Sans',sans-serif;left:81.3px;letter-spacing:-0.1px;">Toggle open items inline editors (+ zoom)</span>
<span class="t" id="t186" style="top:723.2px;font-size:13px;line-height:13px;color:#000;font-family:'DejaVu Sans Condensed','DejaVu Sans',sans-serif;left:409px;letter-spacing:-0.1px;">Items</span>
<span class="t" id="t187" style="top:723.2px;font-size:13px;line-height:13px;color:#000;font-family:'DejaVu Sans Condensed','DejaVu Sans',sans-serif;left:539px;letter-spacing:-0.1px;">1.0</span>
<span class="t" id="t188" style="top:723.2px;font-size:13px;line-height:13px;color:#000;font-family:'DejaVu Sans Condensed','DejaVu Sans',sans-serif;left:746.2px;letter-spacing:-0.1px;">me2beats</span>
<span class="t" id="t189" style="top:723.2px;font-size:13px;line-height:13px;color:#000;font-family:'DejaVu Sans Condensed','DejaVu Sans',sans-serif;left:998.2px;letter-spacing:-0.1px;">Script</span>
<span class="t" id="t190" style="top:743.2px;font-size:13px;line-height:13px;color:#000;font-family:'DejaVu Sans Condensed','DejaVu Sans',sans-serif;left:61.6px;">i</span>
<span class="t" id="t191" style="top:743.2px;font-size:13px;line-height:13px;color:#000;font-family:'DejaVu Sans Condensed','DejaVu Sans',sans-serif;left:81.3px;letter-spacing:-0.1px;">X-Raym_Mute selected notes in open MIDI take rand...</span>
<span class="t" id="t192" style="top:743.2px;font-size:13px;line-height:13px;color:#000;font-family:'DejaVu Sans Condensed','DejaVu Sans',sans-serif;left:409px;letter-spacing:-0.1px;">MIDI Editor</span>
<span class="t" id="t193" style="top:743.2px;font-size:13px;line-height:13px;color:#000;font-family:'DejaVu Sans Condensed','DejaVu Sans',sans-serif;left:539px;letter-spacing:-0.1px;">1.0</span>
<span class="t" id="t194" style="top:743.2px;font-size:13px;line-height:13px;color:#000;font-family:'DejaVu Sans Condensed','DejaVu Sans',sans-serif;left:746.2px;letter-spacing:-0.1px;">X-Raym</span>
<span class="t" id="t195" style="top:743.2px;font-size:13px;line-height:13px;color:#000;font-family:'DejaVu Sans Condensed','DejaVu Sans',sans-serif;left:998.2px;letter-spacing:-0.1px;">Script</span>
<div class="a" style="left:1183px;top:394px;width:20.4px;height:385px;background:#f0f0f0;"></div>
<div class="a" style="left:1183px;top:415px;width:20.4px;height:341px;background:#cdcdcd;"></div>
<svg style="left:1186.6px;top:399px" width="12" height="12" viewBox="-6 -6 12 12"><path d="M-2 -4.2L2.2 0L-2 4.2" fill="none" stroke="#505050" stroke-width="1.7" transform="rotate(270) scale(1)"/></svg>
<svg style="left:1186.6px;top:761.4px" width="12" height="12" viewBox="-6 -6 12 12"><path d="M-2 -4.2L2.2 0L-2 4.2" fill="none" stroke="#505050" stroke-width="1.7" transform="rotate(90) scale(1)"/></svg>
<div class="a" style="left:54.4px;top:778.6px;width:1149px;height:20.4px;background:#f0f0f0;"></div>
<div class="a" style="left:76.2px;top:778.6px;width:1013.4px;height:20.4px;background:#cdcdcd;"></div>
<svg style="left:58.4px;top:782.6px" width="12" height="12" viewBox="-6 -6 12 12"><path d="M-2 -4.2L2.2 0L-2 4.2" fill="none" stroke="#505050" stroke-width="1.7" transform="rotate(180) scale(1)"/></svg>
<svg style="left:1165.4px;top:782.6px" width="12" height="12" viewBox="-6 -6 12 12"><path d="M-2 -4.2L2.2 0L-2 4.2" fill="none" stroke="#505050" stroke-width="1.7" transform="rotate(0) scale(1)"/></svg>
<div class="a" style="left:54.6px;top:810.4px;width:85px;height:25.2px;background:#e1e1e1;border:1px solid #adadad;"></div>
<span class="t" id="t196" style="top:816.6px;font-size:13px;line-height:13px;color:#000;font-family:'DejaVu Sans Condensed','DejaVu Sans',sans-serif;left:97.1px;transform:translateX(-50%);letter-spacing:-0.1px;">Select all</span>
<div class="a" style="left:147.6px;top:810.4px;width:85px;height:25.2px;background:#e1e1e1;border:1px solid #adadad;"></div>
<span class="t" id="t197" style="top:816.6px;font-size:13px;line-height:13px;color:#000;font-family:'DejaVu Sans Condensed','DejaVu Sans',sans-serif;left:190.1px;transform:translateX(-50%);letter-spacing:-0.1px;">Unselect all</span>
<div class="a" style="left:239.4px;top:810.4px;width:76.2px;height:25.2px;background:#cccccc;border:1px solid #bfbfbf;"></div>
<span class="t" id="t198" style="top:816.6px;font-size:13px;line-height:13px;color:#8d8d8d;font-family:'DejaVu Sans Condensed','DejaVu Sans',sans-serif;left:277.5px;transform:translateX(-50%);letter-spacing:-0.1px;">Actions...</span>
<div class="a" style="left:985px;top:810.4px;width:67.6px;height:25.2px;background:#e1e1e1;border:1px solid #adadad;"></div>
<span class="t" id="t199" style="top:816.6px;font-size:13px;line-height:13px;color:#000;font-family:'DejaVu Sans Condensed','DejaVu Sans',sans-serif;left:1018.8px;transform:translateX(-50%);letter-spacing:-0.1px;">OK</span>
<div class="a" style="left:1060px;top:810.4px;width:67.6px;height:25.2px;background:#e1e1e1;border:1px solid #adadad;"></div>
<span class="t" id="t200" style="top:816.6px;font-size:13px;line-height:13px;color:#000;font-family:'DejaVu Sans Condensed','DejaVu Sans',sans-serif;left:1093.8px;transform:translateX(-50%);letter-spacing:-0.1px;">Cancel</span>
<div class="a" style="left:1135px;top:810.4px;width:67.6px;height:25.2px;background:#cccccc;border:1px solid #bfbfbf;"></div>
<span class="t" id="t201" style="top:816.6px;font-size:13px;line-height:13px;color:#8d8d8d;font-family:'DejaVu Sans Condensed','DejaVu Sans',sans-serif;left:1168.8px;transform:translateX(-50%);letter-spacing:-0.1px;">Apply</span>
<svg width="0" height="0" style="left:0;top:0"><defs><linearGradient id="fg" x1="0" y1="0" x2="1" y2="0.6"><stop offset="0" stop-color="#fde49a"/><stop offset="1" stop-color="#f3c95c"/></linearGradient></defs></svg>
<div class="a" style="left:138px;top:16px;width:1152px;height:559px;background:#fff;box-shadow:0 1px 6px rgba(0,0,0,.18);"></div>
<div class="a" style="left:138px;top:16px;width:1152px;height:38px;background:#0078d7;"></div>
<svg style="left:150px;top:27px" width="11.8" height="17" viewBox="0 0 11.8 17"><path d="M0 0.6H10.6V8.4L11.8 10.2V15H2.6V17L0 15.6z" fill="url(#fg)"/><path d="M0 0.6H2.4V16.9L0 15.6z" fill="#fff0ba"/><path d="M9.4 0.6H10.6V8.4L11.8 10.2V15H9.4z" fill="#eec050" opacity=".55"/></svg>
<div class="a" style="left:173px;top:27px;width:1px;height:18px;background:rgba(255,255,255,.35);"></div>
<svg style="left:189.4px;top:27.6px" width="13.2" height="16.6" viewBox="0 0 13.2 16.6"><path d="M0.5 0.5H9L12.7 4.2V16.1H0.5z" fill="#fff" stroke="#e6e6e6" stroke-width="0.5"/><path d="M9 0.5V4.2H12.7" fill="#e9e9e9" stroke="#d0d0d0" stroke-width="0.5"/><path d="M2.6 8.4L5.4 11.2L10.4 5.6" fill="none" stroke="#e8602c" stroke-width="1.7"/></svg>
<svg style="left:214.8px;top:27px" width="11.8" height="17" viewBox="0 0 11.8 17"><path d="M0 0.6H10.6V8.4L11.8 10.2V15H2.6V17L0 15.6z" fill="url(#fg)"/><path d="M0 0.6H2.4V16.9L0 15.6z" fill="#fff0ba"/><path d="M9.4 0.6H10.6V8.4L11.8 10.2V15H9.4z" fill="#eec050" opacity=".55"/></svg>
<div class="a" style="left:240px;top:33.4px;width:6.6px;height:1.4px;background:#0a1e3c;"></div>
<svg style="left:240px;top:36.4px" width="6.6" height="4" viewBox="0 0 7 4"><path d="M0 0H7L3.5 4z" fill="#0a1e3c"/></svg>
<div class="a" style="left:260px;top:27px;width:1px;height:18px;background:rgba(255,255,255,.35);"></div>
<span class="t" id="t202" style="top:28.3px;font-size:15px;line-height:15px;color:#fff;left:268.8px;letter-spacing:-0.7px;">Tau_Kita</span>
<div class="a" style="left:1136.6px;top:33.6px;width:11px;height:1px;background:#fff;"></div>
<div class="a" style="left:1194px;top:29.4px;width:11.6px;height:11.4px;border:1px solid #fff;"></div>
<svg style="left:1252.6px;top:29px" width="12.4" height="12.4" viewBox="0 0 12.4 12.4"><path d="M0.4 0.4L12 12M12 0.4L0.4 12" stroke="#fff" stroke-width="1.1"/></svg>
<div class="a" style="left:138px;top:54px;width:71px;height:28px;background:#1979ca;"></div>
<span class="t" id="t203" style="top:62.62px;font-size:12.5px;line-height:12.5px;color:#fff;left:159.8px;letter-spacing:-0.46px;">Файл</span>
<div class="a" style="left:209px;top:54px;width:82px;height:29px;background:#f5f6f7;border:1px solid #dadbdc;border-bottom:none;"></div>
<span class="t" id="t204" style="top:62.62px;font-size:12.5px;line-height:12.5px;color:#3c3c3c;left:226.2px;letter-spacing:-0.03px;">Главная</span>
<span class="t" id="t205" style="top:62.62px;font-size:12.5px;line-height:12.5px;color:#2b2b2b;left:309.4px;letter-spacing:-0px;">Поделиться</span>
<span class="t" id="t206" style="top:62.62px;font-size:12.5px;line-height:12.5px;color:#2b2b2b;left:413.8px;letter-spacing:-0.47px;">Вид</span>
<svg style="left:1242.6px;top:60.8px" width="14" height="14" viewBox="-7 -7 14 14"><path d="M-2.2 -4.4L2.2 0L-2.2 4.4" fill="none" stroke="#8a8a8a" stroke-width="1.3" transform="rotate(270) scale(1.15)"/></svg>
<div class="a" style="left:1266.6px;top:58.8px;width:18.4px;height:18.4px;background:#0f6fc6;border-radius:50%;border:1px solid #0a58a6;"></div>
<span class="t" id="t207" style="top:61.57px;font-size:13.5px;line-height:13.5px;color:#fff;font-weight:bold;left:1275.8px;transform:translateX(-50%);">?</span>
<div class="a" style="left:139px;top:82px;width:1150px;height:114px;background:#f5f6f7;border-top:1px solid #dadbdc;border-bottom:1px solid #dadbdc;"></div>
<div class="a" style="left:209.8px;top:82px;width:80.4px;height:1px;background:#f5f6f7;"></div>
<div class="a" style="left:553.4px;top:84px;width:1px;height:107px;background:#e2e3e4;"></div>
<div class="a" style="left:827px;top:84px;width:1px;height:107px;background:#e2e3e4;"></div>
<div class="a" style="left:927.4px;top:84px;width:1px;height:107px;background:#e2e3e4;"></div>
<div class="a" style="left:1091.4px;top:84px;width:1px;height:107px;background:#e2e3e4;"></div>
<div class="a" style="left:1259px;top:84px;width:1px;height:107px;background:#e2e3e4;"></div>
<div class="a" style="left:691px;top:100px;width:1px;height:55px;background:#e2e3e4;"></div>
<svg style="left:197px;top:95.6px" width="29" height="29" viewBox="0 0 25 25"><g transform="rotate(45 12.5 12.5)" fill="#8e959c"><path d="M7 0.4H18V4.6L16.2 6V10.8L19.8 14.4V16.6H5.2V14.4L8.8 10.8V6L7 4.6z"/><path d="M11.3 16.4H13.7V25.4L12.5 27.8L11.3 25.4z"/></g></svg>
<span class="t" id="t208" style="top:136.62px;font-size:12.5px;line-height:12.5px;color:#3a3a3a;left:148.1px;letter-spacing:0.13px;">Закрепить на панели</span>
<span class="t" id="t209" style="top:153.82px;font-size:12.5px;line-height:12.5px;color:#3a3a3a;left:157.2px;letter-spacing:0.2px;">быстрого доступа</span>
<svg style="left:298.6px;top:91.6px" width="31" height="36" viewBox="0 0 31 36"><path d="M0.5 0.5h13l5 5v19h-18z" fill="#f4f7fb" stroke="#b9c3d6" stroke-width="1"/><path d="M13.5 0.5v5h5" fill="none" stroke="#b9c3d6" stroke-width="1"/><path d="M3.5 9.0h12" stroke="#c3cfe6" stroke-width="1"/><path d="M3.5 11.6h12" stroke="#c3cfe6" stroke-width="1"/><path d="M3.5 14.2h12" stroke="#c3cfe6" stroke-width="1"/><path d="M3.5 16.8h12" stroke="#c3cfe6" stroke-width="1"/><path d="M3.5 19.4h12" stroke="#c3cfe6" stroke-width="1"/><path d="M3.5 22.0h12" stroke="#c3cfe6" stroke-width="1"/><path d="M11.5 10.5h13l5 5v19h-18z" fill="#f4f7fb" stroke="#b9c3d6" stroke-width="1"/><path d="M24.5 10.5v5h5" fill="none" stroke="#b9c3d6" stroke-width="1"/><path d="M14.5 19.0h12" stroke="#c3cfe6" stroke-width="1"/><path d="M14.5 21.6h12" stroke="#c3cfe6" stroke-width="1"/><path d="M14.5 24.2h12" stroke="#c3cfe6" stroke-width="1"/><path d="M14.5 26.8h12" stroke="#c3cfe6" stroke-width="1"/><path d="M14.5 29.4h12" stroke="#c3cfe6" stroke-width="1"/><path d="M14.5 32.0h12" stroke="#c3cfe6" stroke-width="1"/></svg>
<span class="t" id="t210" style="top:136.62px;font-size:12.5px;line-height:12.5px;color:#8c8c8c;left:278.3px;letter-spacing:0.39px;">Копировать</span>
<svg style="left:368px;top:91.4px" width="26" height="36" viewBox="0 0 26 36"><rect x="1" y="4" width="24" height="31" rx="1.2" fill="#8a98bb" stroke="#7b89ad" stroke-width="1"/><rect x="3.8" y="6.6" width="18.4" height="25.6" fill="#edf1f9"/><path d="M8.6 6.8V4.4H11.4a1.7 1.9 0 0 1 3.2 0H17.4V6.8z" fill="#c9cfdd" stroke="#8d97ad" stroke-width=".8"/><path d="M5.2 10.6h13.6" stroke="#c5d0e8" stroke-width="1"/><path d="M5.2 13.2h13.6" stroke="#c5d0e8" stroke-width="1"/><path d="M5.2 15.8h13.6" stroke="#c5d0e8" stroke-width="1"/><path d="M5.2 18.4h13.6" stroke="#c5d0e8" stroke-width="1"/><path d="M5.2 21h13.6" stroke="#c5d0e8" stroke-width="1"/><path d="M5.2 23.6h13.6" stroke="#c5d0e8" stroke-width="1"/><path d="M5.2 26.2h13.6" stroke="#c5d0e8" stroke-width="1"/><path d="M5.2 28.8h13.6" stroke="#c5d0e8" stroke-width="1"/></svg>
<span class="t" id="t211" style="top:136.62px;font-size:12.5px;line-height:12.5px;color:#8c8c8c;left:355px;letter-spacing:-0.38px;">Вставить</span>
<svg style="left:415px;top:90.4px" width="14" height="18.4" viewBox="0 0 14 18.4"><g fill="none" stroke="#8b95aa" stroke-width="1.5"><path d="M3.6 0.6L9.6 12.2"/><path d="M10.4 0.6L4.4 12.2"/><ellipse cx="3.2" cy="14.6" rx="2.4" ry="3"/><ellipse cx="10.8" cy="14.6" rx="2.4" ry="3"/></g></svg>
<span class="t" id="t212" style="top:95.22px;font-size:12.5px;line-height:12.5px;color:#8c8c8c;left:435px;letter-spacing:-0px;">Вырезать</span>
<svg style="left:413px;top:121px" width="17.6" height="11" viewBox="0 0 17.6 11"><rect x="0.5" y="0.5" width="16.6" height="10" fill="#dfe5f3" stroke="#b4bdd2"/><path d="M2.6 2.6L4.8 8.2M5.4 2.6L7.6 8.2" stroke="#5a6a8a" stroke-width="1.1"/><path d="M9 8h1.2M11.4 8h1.2M13.8 8h1.2" stroke="#5a6a8a" stroke-width="1.2"/></svg>
<span class="t" id="t213" style="top:121.22px;font-size:12.5px;line-height:12.5px;color:#8c8c8c;left:435px;letter-spacing:0.2px;">Скопировать путь</span>
<svg style="left:415px;top:142.4px" width="14" height="17.6" viewBox="0 0 14 17.6"><rect x="0.8" y="2.6" width="12.4" height="14.4" fill="#eef1f8" stroke="#8e9dc0" stroke-width="1.4"/><rect x="4.4" y="0.6" width="5.2" height="3.4" fill="#b8c0d2" stroke="#8d97ad" stroke-width=".7"/><rect x="3.6" y="7.6" width="6.8" height="6.8" fill="#5b6f9c"/><path d="M5 13L8.6 9.4M6.4 9.2H8.8V11.6" stroke="#fff" stroke-width="1.1" fill="none"/></svg>
<span class="t" id="t214" style="top:147.22px;font-size:12.5px;line-height:12.5px;color:#8c8c8c;left:435px;letter-spacing:0.06px;">Вставить ярлык</span>
<span class="t" id="t215" style="top:179.42px;font-size:12.5px;line-height:12.5px;color:#5d5d5d;left:302.5px;letter-spacing:0.05px;">Буфер обмена</span>
<svg style="left:564px;top:100.8px" width="16" height="18.6" viewBox="0 0 16 18.6"><path d="M0.5 0.5H9.4L12 3V18H0.5z" fill="#dfe6f4" stroke="#c5cee0"/><path d="M15.8 10.2v4.2H10v3.4L5 12.3 10 6.8v3.4z" fill="#8c99b6"/></svg>
<span class="t" id="t216" style="top:105.42px;font-size:12.5px;line-height:12.5px;color:#8c8c8c;left:584px;letter-spacing:0.02px;">Переместить в</span>
<svg style="left:676.6px;top:106.8px" width="6.4" height="3.6" viewBox="0 0 7 4"><path d="M0 0H7L3.5 4z" fill="#a0a0a0"/></svg>
<svg style="left:564px;top:135.8px" width="15.2" height="19.4" viewBox="0 0 15.2 19.4"><path d="M0.5 3.5H10V19H0.5z" fill="#dfe6f4" stroke="#c5cee0"/><path d="M5.6 0.5H12L14.6 3V10.6H5.6z" fill="#f4f7fb" stroke="#9aa7c4" stroke-width=".9"/><path d="M7.4 4h5M7.4 6h5M7.4 8h5" stroke="#9aa7c4" stroke-width=".8"/></svg>
<span class="t" id="t217" style="top:141.02px;font-size:12.5px;line-height:12.5px;color:#8c8c8c;left:584px;letter-spacing:0.42px;">Копировать в</span>
<svg style="left:671.6px;top:142.6px" width="6.4" height="3.6" viewBox="0 0 7 4"><path d="M0 0H7L3.5 4z" fill="#a0a0a0"/></svg>
<svg style="left:700.2px;top:102.4px" width="15" height="15" viewBox="0 0 15 15"><path d="M1.4 1.4L13.6 13.6M13.6 1.4L1.4 13.6" stroke="#7e8aa3" stroke-width="3" stroke-linecap="round"/></svg>
<span class="t" id="t218" style="top:105.42px;font-size:12.5px;line-height:12.5px;color:#8c8c8c;left:721px;letter-spacing:-0.28px;">Удалить</span>
<svg style="left:773.5px;top:107.7px" width="6.6" height="3.8" viewBox="0 0 7 4"><path d="M0 0H7L3.5 4z" fill="#1a1a1a"/></svg>
<svg style="left:699px;top:136.6px" width="17" height="18" viewBox="0 0 17 18"><rect x="0.5" y="4.8" width="12.6" height="7.4" fill="#eef1f8" stroke="#9aa7c4"/><rect x="2.4" y="6.6" width="6.4" height="3.8" fill="#7d8db2"/><path d="M13 1V17M10.6 0.8H12.2M13.8 0.8H15.6M10.6 17.2H12.2M13.8 17.2H15.6" stroke="#7e8aa3" stroke-width="1.1"/></svg>
<span class="t" id="t219" style="top:141.02px;font-size:12.5px;line-height:12.5px;color:#8c8c8c;left:721px;letter-spacing:0.16px;">Переименовать</span>
<span class="t" id="t220" style="top:179.42px;font-size:12.5px;line-height:12.5px;color:#5d5d5d;left:650.25px;letter-spacing:0.19px;">Упорядочить</span>
<svg style="left:844px;top:93.6px" width="25" height="34" viewBox="0 0 25 34"><path d="M3 1H21V29H3z" fill="#e5b53c"/><path d="M0 3L18 0.4C21.6 0 25 1.2 25 4V29.6H6V34L0 31.4z" fill="url(#fg)"/><path d="M21 2C23.6 2 25 3 25 5V29.6H21z" fill="#f0c450"/></svg>
<span class="t" id="t221" style="top:136.62px;font-size:12.5px;line-height:12.5px;color:#3a3a3a;left:834.5px;letter-spacing:-0.11px;">Создать</span>
<span class="t" id="t222" style="top:153.82px;font-size:12.5px;line-height:12.5px;color:#3a3a3a;left:841.25px;letter-spacing:0.03px;">папку</span>
<svg style="left:889px;top:90.4px" width="18.2" height="18.6" viewBox="0 0 18.2 18.6"><rect x="0.5" y="0.5" width="8.6" height="7" fill="#dfeaf7" stroke="#6f87ad" stroke-width=".9"/><rect x="4.2" y="4" width="8.6" height="7" fill="#cfdcee" stroke="#6f87ad" stroke-width=".9"/><path d="M8.6 7.8H15L17.6 10.4V18H8.6z" fill="#fbfbfb" stroke="#8a8a8a" stroke-width=".9"/><path d="M10.6 11.6h5M10.6 13.6h5M10.6 15.6h5" stroke="#b0b0b0" stroke-width=".8"/></svg>
<svg style="left:909.5px;top:97.3px" width="6.6" height="3.8" viewBox="0 0 7 4"><path d="M0 0H7L3.5 4z" fill="#1a1a1a"/></svg>
<svg style="left:888px;top:116.6px" width="17.2" height="17.6" viewBox="0 0 17.2 17.6"><path d="M3.4 0.6H13.4L16.6 3.8V17H3.4z" fill="#fbfbfb" stroke="#8a8a8a" stroke-width=".9"/><path d="M13.4 0.6V3.8H16.6" fill="none" stroke="#8a8a8a" stroke-width=".9"/><path d="M0 2.8h6M0.6 5h5.4M1.4 7.2h4.6" stroke="#2c5f9e" stroke-width="1.1"/></svg>
<svg style="left:909.5px;top:123.3px" width="6.6" height="3.8" viewBox="0 0 7 4"><path d="M0 0H7L3.5 4z" fill="#1a1a1a"/></svg>
<span class="t" id="t223" style="top:179.42px;font-size:12.5px;line-height:12.5px;color:#5d5d5d;left:852.5px;letter-spacing:-0.14px;">Создать</span>
<svg style="left:947.8px;top:92px" width="28" height="35.4" viewBox="0 0 13.2 16.6"><path d="M0.5 0.5H9L12.7 4.2V16.1H0.5z" fill="#fff" stroke="#9b9b9b" stroke-width="0.6"/><path d="M9 0.5V4.2H12.7" fill="#e9e9e9" stroke="#9b9b9b" stroke-width="0.6"/><path d="M2.6 8.4L5.4 11.2L10.4 5.6" fill="none" stroke="#e8602c" stroke-width="1.3"/></svg>
<span class="t" id="t224" style="top:136.62px;font-size:12.5px;line-height:12.5px;color:#3a3a3a;left:934.5px;letter-spacing:-0.14px;">Свойства</span>
<svg style="left:957.5px;top:155.9px" width="6.6" height="3.8" viewBox="0 0 7 4"><path d="M0 0H7L3.5 4z" fill="#1a1a1a"/></svg>
<svg style="left:997.8px;top:92px" width="16.4" height="18" viewBox="0 0 16.4 18"><rect x="0.5" y="0.5" width="12" height="15" fill="#e3e9f4" stroke="#b5bfd4"/><path d="M2.4 3.2h2.4v2.4H2.4zM2.4 7.2h2.4v2.4H2.4zM2.4 11.2h2.4v2.4H2.4z" fill="#a3afc8"/><path d="M6 4.4h4.6M6 8.4h4.6" stroke="#a3afc8" stroke-width="1"/><path d="M11.4 7.4L16 12.4H13.2V17.6H9.6V12.4H6.8z" fill="#8c99b6"/></svg>
<span class="t" id="t225" style="top:96.02px;font-size:12.5px;line-height:12.5px;color:#8c8c8c;left:1018.25px;letter-spacing:-0.05px;">Открыть</span>
<svg style="left:1073.4px;top:98.4px" width="6.4" height="3.6" viewBox="0 0 7 4"><path d="M0 0H7L3.5 4z" fill="#a0a0a0"/></svg>
<svg style="left:997.8px;top:118.8px" width="17" height="17.6" viewBox="0 0 17 17.6"><path d="M0.6 0.6H10L13.6 4.2V17H0.6z" fill="#eef1f8" stroke="#b5bfd4"/><path d="M10 0.6V4.2H13.6" fill="none" stroke="#b5bfd4"/><path d="M14.8 2.6L16.6 4.4L7 14L4.6 14.8L5.4 12.4z" fill="#c5cee0" stroke="#a3afc8" stroke-width=".7"/></svg>
<span class="t" id="t226" style="top:122.82px;font-size:12.5px;line-height:12.5px;color:#8c8c8c;left:1018.25px;letter-spacing:0.04px;">Изменить</span>
<svg style="left:998.2px;top:146.2px" width="16.6" height="18.2" viewBox="0 0 16.6 18.2"><path d="M0.6 0.8H8.6V14H0.6z" fill="#e5b53c"/><path d="M0 1.6L7 0.4C8.4 0.2 10 0.8 10 2V13.6H2.2V15.6L0 14.6z" fill="#fbe08a"/><circle cx="11" cy="12.6" r="5" fill="#f4f4f4" stroke="#7d7d7d" stroke-width="1"/><path d="M11 9.6V12.8L13.2 11.4" stroke="#444" stroke-width=".9" fill="none"/><path d="M2.6 12.8L6.6 9.4V11.4C8.6 11.2 9.6 12 10 13.2C9 12.6 8 12.8 6.6 13.2V15.6z" fill="#3fa648"/></svg>
<span class="t" id="t227" style="top:149.82px;font-size:12.5px;line-height:12.5px;color:#3a3a3a;left:1018.25px;letter-spacing:-0.1px;">Журнал</span>
<span class="t" id="t228" style="top:179.42px;font-size:12.5px;line-height:12.5px;color:#5d5d5d;left:983.25px;letter-spacing:-0.05px;">Открыть</span>
<svg style="left:1100px;top:91.2px" width="17.4" height="17.4" viewBox="0 0 17.4 17.4"><rect x="0.5" y="0.5" width="7.4" height="7.4" fill="#9fd2f6" stroke="#3b96db" stroke-width="1"/><rect x="9.5" y="0.5" width="7.4" height="7.4" fill="#9fd2f6" stroke="#3b96db" stroke-width="1"/><rect x="0.5" y="9.5" width="7.4" height="7.4" fill="#9fd2f6" stroke="#3b96db" stroke-width="1"/><rect x="9.5" y="9.5" width="7.4" height="7.4" fill="#9fd2f6" stroke="#3b96db" stroke-width="1"/></svg>
<span class="t" id="t229" style="top:95.22px;font-size:12.5px;line-height:12.5px;color:#3a3a3a;left:1122.5px;letter-spacing:-0.17px;">Выделить все</span>
<svg style="left:1100px;top:117.4px" width="17.4" height="17.4" viewBox="0 0 17.4 17.4"><rect x="0.5" y="0.5" width="7.4" height="6.4" fill="#fbfbfb" stroke="#a9a9a9" stroke-width="1"/><rect x="9.5" y="0.5" width="7.4" height="6.4" fill="#fbfbfb" stroke="#a9a9a9" stroke-width="1"/><rect x="0.5" y="9.5" width="7.4" height="6.4" fill="#fbfbfb" stroke="#a9a9a9" stroke-width="1"/><rect x="9.5" y="9.5" width="7.4" height="6.4" fill="#fbfbfb" stroke="#a9a9a9" stroke-width="1"/></svg>
<span class="t" id="t230" style="top:121.22px;font-size:12.5px;line-height:12.5px;color:#3a3a3a;left:1122.5px;letter-spacing:-0.1px;">Снять выделение</span>
<svg style="left:1100px;top:143.6px" width="17.4" height="17.4" viewBox="0 0 17.4 17.4"><rect x="0.5" y="0.5" width="7.4" height="6.4" fill="#fbfbfb" stroke="#a9a9a9" stroke-width="1"/><rect x="9.5" y="0.5" width="7.4" height="7.4" fill="#9fd2f6" stroke="#3b96db" stroke-width="1"/><rect x="0.5" y="9.5" width="7.4" height="7.4" fill="#9fd2f6" stroke="#3b96db" stroke-width="1"/><rect x="9.5" y="9.5" width="7.4" height="6.4" fill="#fbfbfb" stroke="#a9a9a9" stroke-width="1"/></svg>
<span class="t" id="t231" style="top:147.22px;font-size:12.5px;line-height:12.5px;color:#3a3a3a;left:1122.5px;letter-spacing:0.09px;">Обратить выделение</span>
<span class="t" id="t232" style="top:179.42px;font-size:12.5px;line-height:12.5px;color:#5d5d5d;left:1146.25px;letter-spacing:-0.33px;">Выделить</span>
<svg style="left:153.6px;top:208.6px" width="18" height="18" viewBox="-9 -9 18 18"><g transform="rotate(0)" fill="none" stroke="#d2d2d2" stroke-width="1.5"><path d="M-7 0H7.4"/><path d="M-1.6 -5.6L-7.2 0L-1.6 5.6"/></g></svg>
<svg style="left:191.6px;top:208.6px" width="18" height="18" viewBox="-9 -9 18 18"><g transform="rotate(180)" fill="none" stroke="#d2d2d2" stroke-width="1.5"><path d="M-7 0H7.4"/><path d="M-1.6 -5.6L-7.2 0L-1.6 5.6"/></g></svg>
<svg style="left:224.2px;top:210.6px" width="14" height="14" viewBox="-7 -7 14 14"><path d="M-2.2 -4.4L2.2 0L-2.2 4.4" fill="none" stroke="#d8d8d8" stroke-width="1.3" transform="rotate(90) scale(0.8)"/></svg>
<svg style="left:247.8px;top:208.6px" width="18" height="18" viewBox="-9 -9 18 18"><g transform="rotate(90)" fill="none" stroke="#555" stroke-width="1.5"><path d="M-7 0H7.4"/><path d="M-1.6 -5.6L-7.2 0L-1.6 5.6"/></g></svg>
<div class="a" style="left:273px;top:204px;width:834px;height:26px;background:#fff;border:1px solid #d9d9d9;"></div>
<svg style="left:279.2px;top:207.2px" width="11" height="16" viewBox="0 0 11.8 17"><path d="M0 0.6H10.6V8.4L11.8 10.2V15H2.6V17L0 15.6z" fill="url(#fg)"/><path d="M0 0.6H2.4V16.9L0 15.6z" fill="#fff0ba"/><path d="M9.4 0.6H10.6V8.4L11.8 10.2V15H9.4z" fill="#eec050" opacity=".55"/></svg>
<svg style="left:300.1px;top:209.2px" width="14" height="14" viewBox="-7 -7 14 14"><path d="M-2.2 -4.4L2.2 0L-2.2 4.4" fill="none" stroke="#5a5a5a" stroke-width="1.7" transform="rotate(0) scale(0.8)"/></svg>
<span class="t" id="t233" style="top:209.3px;font-size:15px;line-height:15px;color:#1f1f1f;left:320.5px;letter-spacing:0.04px;">Этот компьютер</span>
<svg style="left:440.85px;top:209.2px" width="14" height="14" viewBox="-7 -7 14 14"><path d="M-2.2 -4.4L2.2 0L-2.2 4.4" fill="none" stroke="#5a5a5a" stroke-width="1.7" transform="rotate(0) scale(0.8)"/></svg>
<span class="t" id="t234" style="top:209.3px;font-size:15px;line-height:15px;color:#1f1f1f;left:461.25px;letter-spacing:-0.69px;">_DATA_ (D:)</span>
<svg style="left:545.1px;top:209.2px" width="14" height="14" viewBox="-7 -7 14 14"><path d="M-2.2 -4.4L2.2 0L-2.2 4.4" fill="none" stroke="#5a5a5a" stroke-width="1.7" transform="rotate(0) scale(0.8)"/></svg>
<span class="t" id="t235" style="top:209.3px;font-size:15px;line-height:15px;color:#1f1f1f;left:565.5px;letter-spacing:-1.74px;">REAPER</span>
<svg style="left:623.6px;top:209.2px" width="14" height="14" viewBox="-7 -7 14 14"><path d="M-2.2 -4.4L2.2 0L-2.2 4.4" fill="none" stroke="#5a5a5a" stroke-width="1.7" transform="rotate(0) scale(0.8)"/></svg>
<span class="t" id="t236" style="top:209.3px;font-size:15px;line-height:15px;color:#1f1f1f;left:644px;letter-spacing:-0.52px;">Pavel Hara</span>
<svg style="left:721.1px;top:209.2px" width="14" height="14" viewBox="-7 -7 14 14"><path d="M-2.2 -4.4L2.2 0L-2.2 4.4" fill="none" stroke="#5a5a5a" stroke-width="1.7" transform="rotate(0) scale(0.8)"/></svg>
<span class="t" id="t237" style="top:209.3px;font-size:15px;line-height:15px;color:#1f1f1f;left:741.5px;letter-spacing:-1.62px;">@V</span>
<svg style="left:771.1px;top:209.2px" width="14" height="14" viewBox="-7 -7 14 14"><path d="M-2.2 -4.4L2.2 0L-2.2 4.4" fill="none" stroke="#5a5a5a" stroke-width="1.7" transform="rotate(0) scale(0.8)"/></svg>
<span class="t" id="t238" style="top:209.3px;font-size:15px;line-height:15px;color:#1f1f1f;left:791.5px;letter-spacing:-0.72px;">Tau_Kita</span>
<svg style="left:1064.9px;top:211.4px" width="14" height="14" viewBox="-7 -7 14 14"><path d="M-2.2 -4.4L2.2 0L-2.2 4.4" fill="none" stroke="#505050" stroke-width="1.7" transform="rotate(90) scale(1.2)"/></svg>
<div class="a" style="left:1083px;top:205px;width:1px;height:24px;background:#d9d9d9;"></div>
<svg style="left:1087px;top:209px" width="18" height="18" viewBox="-9 -9 18 18"><path d="M3.37 -4.96A6 6 0 1 1 -4.3 -4.18L-1.9 -6.2" fill="none" stroke="#666" stroke-width="1.7"/><path d="M-5.6 -6.6H-1.4V-2.4" fill="none" stroke="#666" stroke-width="1.7"/></svg>
<div class="a" style="left:1120px;top:204px;width:157px;height:26px;background:#fff;border:1px solid #d9d9d9;"></div>
<span class="t" id="t239" style="top:209.3px;font-size:15px;line-height:15px;color:#6d6d6d;left:1130.25px;letter-spacing:-0.35px;">Поиск: Tau_Kita</span>
<svg style="left:1251.4px;top:211px" width="13" height="13" viewBox="0 0 13 13"><circle cx="9" cy="4.4" r="3.6" fill="none" stroke="#5e5e5e" stroke-width="1.5"/><path d="M6.4 7.4L0.6 12.6" stroke="#5e5e5e" stroke-width="1.7"/></svg>
<div class="a" style="left:139px;top:239px;width:175px;height:306px;overflow:hidden;">
<svg style="left:42.8px;top:9px" width="15.4" height="16.4" viewBox="0 0 15.4 16.4"><path d="M0.4 0.4H7V15H0.4z" fill="#f3cf63"/><path d="M3.4 1.2H11.4L14.6 4.4V15.6H3.4z" fill="#fff" stroke="#7aa0c8" stroke-width=".9"/><path d="M5.6 5h3M5.6 7.4h6.6M5.6 9.6h6.6M5.6 11.8h6.6" stroke="#3c7fc0" stroke-width="1.1"/></svg>
<span class="t" id="t240" style="top:9.3px;font-size:15px;line-height:15px;color:#1f1f1f;left:65px;letter-spacing:-0.01px;">Документы</span>
<svg style="left:157.2px;top:9.4px" width="14" height="14" viewBox="-0.5 -1 13 13"><g transform="rotate(45 6 6)" fill="#8b9098"><path d="M3.2 -0.2H8.8V1.6L7.8 2.4V5.2L9.8 7V8.2H2.2V7L4.2 5.2V2.4L3.2 1.6z"/><path d="M5.3 8H6.7V12.8L6 13.8L5.3 12.8z"/></g></svg>
<svg style="left:42.8px;top:38.4px" width="15.4" height="16.4" viewBox="0 0 15.4 16.4"><path d="M0.4 0.4H8V15H0.4z" fill="#f3cf63"/><path d="M0 1L6.6 0C8 0 9 0.6 9 1.8V14H2V16L0 15z" fill="#fbe08a"/><rect x="3.8" y="6.6" width="11" height="8.4" fill="#fff" stroke="#8a9ab0" stroke-width=".9"/><path d="M5 13.8L8 10.4L10.2 12.4L11.6 11.2L13.6 13.8z" fill="#3c7fc0"/><rect x="5" y="7.8" width="8.6" height="2.4" fill="#bcd8f0"/></svg>
<span class="t" id="t241" style="top:39.3px;font-size:15px;line-height:15px;color:#1f1f1f;left:65px;letter-spacing:0.28px;">Изображени</span>
<svg style="left:157.6px;top:39.4px" width="14" height="14" viewBox="-0.5 -1 13 13"><g transform="rotate(45 6 6)" fill="#8b9098"><path d="M3.2 -0.2H8.8V1.6L7.8 2.4V5.2L9.8 7V8.2H2.2V7L4.2 5.2V2.4L3.2 1.6z"/><path d="M5.3 8H6.7V12.8L6 13.8L5.3 12.8z"/></g></svg>
<svg style="left:30.2px;top:77.4px" width="20" height="17" viewBox="0 0 20 17"><g fill="#0d62fe"><path d="M5 0L10 3.2L5 6.4L0 3.2z"/><path d="M15 0L20 3.2L15 6.4L10 3.2z"/><path d="M5 6.6L10 9.8L5 13L0 9.8z"/><path d="M15 6.6L20 9.8L15 13L10 9.8z"/><path d="M10 11L14.4 13.8L10 16.8L5.6 13.8z"/></g></svg>
<span class="t" id="t242" style="top:79.3px;font-size:15px;line-height:15px;color:#1f1f1f;left:55.5px;letter-spacing:0.18px;">Dropbox</span>
<svg style="left:42.8px;top:107.8px" width="12.2" height="16.4" viewBox="0 0 11.8 17"><path d="M0 0.6H10.6V8.4L11.8 10.2V15H2.6V17L0 15.6z" fill="url(#fg)"/><path d="M0 0.6H2.4V16.9L0 15.6z" fill="#fff0ba"/><path d="M9.4 0.6H10.6V8.4L11.8 10.2V15H9.4z" fill="#eec050" opacity=".55"/></svg>
<span class="t" id="t243" style="top:109.3px;font-size:15px;line-height:15px;color:#1f1f1f;left:65.25px;letter-spacing:-0.38px;">Music</span>
<svg style="left:42.8px;top:137.6px" width="12.2" height="16.4" viewBox="0 0 11.8 17"><path d="M0 0.6H10.6V8.4L11.8 10.2V15H2.6V17L0 15.6z" fill="url(#fg)"/><path d="M0 0.6H2.4V16.9L0 15.6z" fill="#fff0ba"/><path d="M9.4 0.6H10.6V8.4L11.8 10.2V15H9.4z" fill="#eec050" opacity=".55"/></svg>
<span class="t" id="t244" style="top:139.3px;font-size:15px;line-height:15px;color:#1f1f1f;left:65.25px;letter-spacing:-0.02px;">Video</span>
<svg style="left:31px;top:178.6px" width="19" height="17" viewBox="0 0 19 17"><path d="M6 0.6L18.4 3V12.8L6 10z" fill="#3aa0e8"/><path d="M6 0.6L18.4 3V5L6 2.8z" fill="#7cc4f4"/><path d="M10.4 11.6L13 12.2V14.4L10.4 13.8z" fill="#b8b8b8"/><path d="M7 14.4L15.4 13.2L17 14.2L8.6 15.6z" fill="#cfcfcf"/><path d="M0 14L8.6 11.8L10.8 13.2L2.4 15.8z" fill="#e6e6e6" stroke="#c4c4c4" stroke-width=".4"/></svg>
<span class="t" id="t245" style="top:179.3px;font-size:15px;line-height:15px;color:#1f1f1f;left:54.75px;letter-spacing:0.02px;">Этот компьютер</span>
<svg style="left:39.8px;top:209.8px" width="19" height="15.5" viewBox="0 -0.5 19 15.5"><g fill="#1aa0e8"><path d="M0.6 0.6L4 0.2V3.4H0.6zM4.6 0.1L8.6 -0.4V3.4H4.6zM0.6 4H4V7.2L0.6 6.8zM4.6 4H8.6V7.8L4.6 7.3z"/></g><path d="M0.6 9L10.2 6.2L18.8 8.4L9.4 11.8z" fill="#e3e3e3"/><path d="M0.6 9L9.4 11.8V15L0.6 11.8z" fill="#3c3c3c"/><path d="M9.4 11.8L18.8 8.4V11.2L9.4 15z" fill="#bcbcbc"/></svg>
<span class="t" id="t246" style="top:209.3px;font-size:15px;line-height:15px;color:#1f1f1f;left:65.25px;letter-spacing:-0.34px;">Windows 10 (C:)</span>
<div class="a" style="left:0.5px;top:231px;width:173px;height:30px;background:#d9d9d9;"></div>
<svg style="left:40.6px;top:238.6px" width="19" height="15.5" viewBox="0 -0.5 19 15.5"><path d="M0.6 9L10.2 6.2L18.8 8.4L9.4 11.8z" fill="#e3e3e3"/><path d="M0.6 9L9.4 11.8V15L0.6 11.8z" fill="#3c3c3c"/><path d="M9.4 11.8L18.8 8.4V11.2L9.4 15z" fill="#bcbcbc"/></svg>
<span class="t" id="t247" style="top:239.3px;font-size:15px;line-height:15px;color:#1f1f1f;left:65.25px;letter-spacing:-0.72px;">_DATA_ (D:)</span>
<svg style="left:40.6px;top:269px" width="19" height="15.5" viewBox="0 -0.5 19 15.5"><path d="M0.6 9L10.2 6.2L18.8 8.4L9.4 11.8z" fill="#e3e3e3"/><path d="M0.6 9L9.4 11.8V15L0.6 11.8z" fill="#3c3c3c"/><path d="M9.4 11.8L18.8 8.4V11.2L9.4 15z" fill="#bcbcbc"/></svg>
<span class="t" id="t248" style="top:269.3px;font-size:15px;line-height:15px;color:#1f1f1f;left:65.25px;letter-spacing:-1.32px;">_OLDSYS_ (E:)</span>
<span class="t" id="t249" style="top:299.3px;font-size:15px;line-height:15px;color:#1f1f1f;left:65.25px;letter-spacing:-1.2px;">_ARCHIVE_ (F:)</span>
</div>
<div class="a" style="left:314.2px;top:239.6px;width:18.8px;height:305px;background:#f0f0f0;"></div>
<div class="a" style="left:314.2px;top:285px;width:18.8px;height:70px;background:#cdcdcd;"></div>
<svg style="left:316.4px;top:243.4px" width="14" height="14" viewBox="-7 -7 14 14"><path d="M-2.2 -4.4L2.2 0L-2.2 4.4" fill="none" stroke="#4d4d4d" stroke-width="1.7" transform="rotate(270) scale(1)"/></svg>
<svg style="left:316.4px;top:526.2px" width="14" height="14" viewBox="-7 -7 14 14"><path d="M-2.2 -4.4L2.2 0L-2.2 4.4" fill="none" stroke="#4d4d4d" stroke-width="1.7" transform="rotate(90) scale(1)"/></svg>
<div class="a" style="left:678px;top:240px;width:1px;height:31.4px;background:#e5e5e5;"></div>
<div class="a" style="left:828.2px;top:240px;width:1px;height:31.4px;background:#e5e5e5;"></div>
<div class="a" style="left:978.2px;top:240px;width:1px;height:31.4px;background:#e5e5e5;"></div>
<div class="a" style="left:1078.2px;top:240px;width:1px;height:31.4px;background:#e5e5e5;"></div>
<svg style="left:508.6px;top:237px" width="14" height="14" viewBox="-7 -7 14 14"><path d="M-2.2 -4.4L2.2 0L-2.2 4.4" fill="none" stroke="#7a7a7a" stroke-width="1.0" transform="rotate(270) scale(0.8)"/></svg>
<span class="t" id="t250" style="top:248.3px;font-size:15px;line-height:15px;color:#4c607a;left:360px;letter-spacing:0.09px;">Имя</span>
<span class="t" id="t251" style="top:248.3px;font-size:15px;line-height:15px;color:#4c607a;left:686px;letter-spacing:0.02px;">Дата изменения</span>
<span class="t" id="t252" style="top:248.3px;font-size:15px;line-height:15px;color:#4c607a;left:836.5px;letter-spacing:-0.01px;">Тип</span>
<span class="t" id="t253" style="top:248.3px;font-size:15px;line-height:15px;color:#4c607a;left:985.75px;letter-spacing:-0.14px;">Размер</span>
<svg style="left:365px;top:285px" width="12.2" height="17" viewBox="0 0 11.8 17"><path d="M0 0.6H10.6V8.4L11.8 10.2V15H2.6V17L0 15.6z" fill="url(#fg)"/><path d="M0 0.6H2.4V16.9L0 15.6z" fill="#fff0ba"/><path d="M9.4 0.6H10.6V8.4L11.8 10.2V15H9.4z" fill="#eec050" opacity=".55"/></svg>
<span class="t" id="t254" style="top:287.3px;font-size:15px;line-height:15px;color:#1f1f1f;left:387.5px;letter-spacing:0.23px;">Audio</span>
<span class="t" id="t255" style="top:287.3px;font-size:15px;line-height:15px;color:#6d6d6d;left:686.75px;letter-spacing:-0.47px;">Ср 19.12.18 18:49</span>
<span class="t" id="t256" style="top:287.3px;font-size:15px;line-height:15px;color:#6d6d6d;left:836.5px;letter-spacing:-0.23px;">Папка с файлами</span>
<svg style="left:365px;top:312px" width="12.2" height="17" viewBox="0 0 11.8 17"><path d="M0 0.6H10.6V8.4L11.8 10.2V15H2.6V17L0 15.6z" fill="url(#fg)"/><path d="M0 0.6H2.4V16.9L0 15.6z" fill="#fff0ba"/><path d="M9.4 0.6H10.6V8.4L11.8 10.2V15H9.4z" fill="#eec050" opacity=".55"/></svg>
<span class="t" id="t257" style="top:314.3px;font-size:15px;line-height:15px;color:#1f1f1f;left:387.5px;letter-spacing:-0.51px;">BackUp</span>
<span class="t" id="t258" style="top:314.3px;font-size:15px;line-height:15px;color:#6d6d6d;left:686.75px;letter-spacing:-0.38px;">Пт 21.12.18 17:15</span>
<span class="t" id="t259" style="top:314.3px;font-size:15px;line-height:15px;color:#6d6d6d;left:836.5px;letter-spacing:-0.23px;">Папка с файлами</span>
<svg style="left:365px;top:339px" width="12.2" height="17" viewBox="0 0 11.8 17"><path d="M0 0.6H10.6V8.4L11.8 10.2V15H2.6V17L0 15.6z" fill="url(#fg)"/><path d="M0 0.6H2.4V16.9L0 15.6z" fill="#fff0ba"/><path d="M9.4 0.6H10.6V8.4L11.8 10.2V15H9.4z" fill="#eec050" opacity=".55"/></svg>
<span class="t" id="t260" style="top:341.3px;font-size:15px;line-height:15px;color:#1f1f1f;left:387.5px;">M</span>
<span class="t" id="t261" style="top:341.3px;font-size:15px;line-height:15px;color:#6d6d6d;left:686.75px;letter-spacing:-0.47px;">Ср 12.12.18 19:45</span>
<span class="t" id="t262" style="top:341.3px;font-size:15px;line-height:15px;color:#6d6d6d;left:836.5px;letter-spacing:-0.23px;">Папка с файлами</span>
<div class="a" style="left:362.4px;top:365.4px;width:18.4px;height:17.8px;background:#c8434c;border-radius:2.6px;"></div><span class="t" style="left:366px;top:371.4px;font-size:5.2px;line-height:6px;color:#fff;font-weight:bold;letter-spacing:-.1px">MP3</span>
<span class="t" id="t263" style="top:368.3px;font-size:15px;line-height:15px;color:#1f1f1f;left:387.5px;letter-spacing:-0.12px;">Taokita.mp3</span>
<span class="t" id="t264" style="top:368.3px;font-size:15px;line-height:15px;color:#6d6d6d;left:686.75px;letter-spacing:-0.4px;">Пн 09.04.18 11:16</span>
<span class="t" id="t265" style="top:368.3px;font-size:15px;line-height:15px;color:#6d6d6d;left:836.5px;letter-spacing:-0.69px;">AIMP: MPEG Layer 3</span>
<span class="t" id="t266" style="top:368.3px;font-size:15px;line-height:15px;color:#6d6d6d;left:1011.25px;letter-spacing:-0.41px;">3 691 КБ</span>
<svg style="left:365px;top:392.4px" width="13.8" height="16.8" viewBox="0 0 13.6 16.4"><path d="M0.6 0.6H9.2L13 4.4V15.8H0.6z" fill="#f7f7f7" stroke="#a2a2a2" stroke-width="1"/><path d="M9.2 0.6V4.4H13" fill="none" stroke="#a2a2a2" stroke-width="1"/></svg>
<span class="t" id="t267" style="top:395.3px;font-size:15px;line-height:15px;color:#1f1f1f;left:387.5px;letter-spacing:-0.95px;">Tau_Kita.RPP</span>
<span class="t" id="t268" style="top:395.3px;font-size:15px;line-height:15px;color:#6d6d6d;left:686.75px;letter-spacing:-0.46px;">Пн 09.04.18 17:44</span>
<span class="t" id="t269" style="top:395.3px;font-size:15px;line-height:15px;color:#6d6d6d;left:836.5px;letter-spacing:-0.7px;">Файл "RPP"</span>
<span class="t" id="t270" style="top:395.3px;font-size:15px;line-height:15px;color:#6d6d6d;left:1011.25px;letter-spacing:-0.41px;">1 003 КБ</span>
<svg style="left:365px;top:419.4px" width="13.8" height="16.8" viewBox="0 0 13.6 16.4"><path d="M0.6 0.6H9.2L13 4.4V15.8H0.6z" fill="#f7f7f7" stroke="#a2a2a2" stroke-width="1"/><path d="M9.2 0.6V4.4H13" fill="none" stroke="#a2a2a2" stroke-width="1"/></svg>
<span class="t" id="t271" style="top:422.3px;font-size:15px;line-height:15px;color:#1f1f1f;left:387.5px;letter-spacing:-0.68px;">Tau_Kita.RPP-UNDO</span>
<span class="t" id="t272" style="top:422.3px;font-size:15px;line-height:15px;color:#6d6d6d;left:686.75px;letter-spacing:-0.46px;">Пн 09.04.18 17:44</span>
<span class="t" id="t273" style="top:422.3px;font-size:15px;line-height:15px;color:#6d6d6d;left:836.5px;letter-spacing:-0.45px;">Файл "RPP-UNDO"</span>
<span class="t" id="t274" style="top:422.3px;font-size:15px;line-height:15px;color:#6d6d6d;left:994.75px;letter-spacing:-0.35px;">451 131 КБ</span>
<svg style="left:365px;top:446.4px" width="13.8" height="16.8" viewBox="0 0 13.6 16.4"><path d="M0.6 0.6H9.2L13 4.4V15.8H0.6z" fill="#f7f7f7" stroke="#a2a2a2" stroke-width="1"/><path d="M9.2 0.6V4.4H13" fill="none" stroke="#a2a2a2" stroke-width="1"/></svg>
<span class="t" id="t275" style="top:449.3px;font-size:15px;line-height:15px;color:#1f1f1f;left:387.5px;letter-spacing:-0.92px;">Tau_Kita_001.RPP</span>
<span class="t" id="t276" style="top:449.3px;font-size:15px;line-height:15px;color:#6d6d6d;left:686.75px;letter-spacing:-0.46px;">Пн 09.04.18 19:07</span>
<span class="t" id="t277" style="top:449.3px;font-size:15px;line-height:15px;color:#6d6d6d;left:836.5px;letter-spacing:-0.7px;">Файл "RPP"</span>
<span class="t" id="t278" style="top:449.3px;font-size:15px;line-height:15px;color:#6d6d6d;left:1002.75px;letter-spacing:-0.35px;">21 283 КБ</span>
<svg style="left:365px;top:473.4px" width="13.8" height="16.8" viewBox="0 0 13.6 16.4"><path d="M0.6 0.6H9.2L13 4.4V15.8H0.6z" fill="#f7f7f7" stroke="#a2a2a2" stroke-width="1"/><path d="M9.2 0.6V4.4H13" fill="none" stroke="#a2a2a2" stroke-width="1"/></svg>
<span class="t" id="t279" style="top:476.3px;font-size:15px;line-height:15px;color:#1f1f1f;left:387.5px;letter-spacing:-0.71px;">Tau_Kita_001.RPP-UNDO</span>
<span class="t" id="t280" style="top:476.3px;font-size:15px;line-height:15px;color:#6d6d6d;left:686.75px;letter-spacing:-0.46px;">Пн 09.04.18 19:07</span>
<span class="t" id="t281" style="top:476.3px;font-size:15px;line-height:15px;color:#6d6d6d;left:836.5px;letter-spacing:-0.45px;">Файл "RPP-UNDO"</span>
<span class="t" id="t282" style="top:476.3px;font-size:15px;line-height:15px;color:#6d6d6d;left:994.75px;letter-spacing:-0.35px;">474 192 КБ</span>
<svg style="left:365px;top:500.4px" width="13.8" height="16.8" viewBox="0 0 13.6 16.4"><path d="M0.6 0.6H9.2L13 4.4V15.8H0.6z" fill="#f7f7f7" stroke="#a2a2a2" stroke-width="1"/><path d="M9.2 0.6V4.4H13" fill="none" stroke="#a2a2a2" stroke-width="1"/></svg>
<span class="t" id="t283" style="top:503.3px;font-size:15px;line-height:15px;color:#1f1f1f;left:387.5px;letter-spacing:-0.3px;">Tau_Kita_001-2018-04-09_175826.rpp-bak</span>
<span class="t" id="t284" style="top:503.3px;font-size:15px;line-height:15px;color:#6d6d6d;left:686.75px;letter-spacing:-0.46px;">Пн 09.04.18 17:58</span>
<span class="t" id="t285" style="top:503.3px;font-size:15px;line-height:15px;color:#6d6d6d;left:836.5px;letter-spacing:-0.54px;">Файл "RPP-BAK"</span>
<span class="t" id="t286" style="top:503.3px;font-size:15px;line-height:15px;color:#6d6d6d;left:1010.75px;letter-spacing:-0.35px;">4 633 КБ</span>
<svg style="left:365px;top:527.4px" width="13.8" height="16.8" viewBox="0 0 13.6 16.4"><path d="M0.6 0.6H9.2L13 4.4V15.8H0.6z" fill="#f7f7f7" stroke="#a2a2a2" stroke-width="1"/><path d="M9.2 0.6V4.4H13" fill="none" stroke="#a2a2a2" stroke-width="1"/></svg>
<span class="t" id="t287" style="top:530.3px;font-size:15px;line-height:15px;color:#1f1f1f;left:387.5px;letter-spacing:-0.36px;">Tau_Kita_001-2018-04-09_175826.rpp-ba...</span>
<span class="t" id="t288" style="top:530.3px;font-size:15px;line-height:15px;color:#6d6d6d;left:686.75px;letter-spacing:-0.46px;">Пн 09.04.18 17:58</span>
<span class="t" id="t289" style="top:530.3px;font-size:15px;line-height:15px;color:#6d6d6d;left:836.5px;letter-spacing:-0.61px;">Файл "RPP-BAK-U...</span>
<span class="t" id="t290" style="top:530.3px;font-size:15px;line-height:15px;color:#6d6d6d;left:994.75px;letter-spacing:-0.35px;">474 192 КБ</span>
<div class="a" style="left:1269px;top:239.6px;width:19.6px;height:305.4px;background:#f0f0f0;"></div>
<div class="a" style="left:1269px;top:261.2px;width:19.6px;height:22.6px;background:#cdcdcd;"></div>
<svg style="left:1271.6px;top:243.4px" width="14" height="14" viewBox="-7 -7 14 14"><path d="M-2.2 -4.4L2.2 0L-2.2 4.4" fill="none" stroke="#4d4d4d" stroke-width="1.7" transform="rotate(270) scale(1)"/></svg>
<svg style="left:1271.6px;top:526.4px" width="14" height="14" viewBox="-7 -7 14 14"><path d="M-2.2 -4.4L2.2 0L-2.2 4.4" fill="none" stroke="#4d4d4d" stroke-width="1.7" transform="rotate(90) scale(1)"/></svg>
<span class="t" id="t291" style="top:552.3px;font-size:15px;line-height:15px;color:#2b3a5c;left:155.75px;letter-spacing:-0.2px;">Элементов: 116</span>
<div class="a" style="left:1228px;top:545.2px;width:28px;height:28.4px;background:#cce8ff;border:1px solid #3aa0e0;"></div>
<svg style="left:1233px;top:551px" width="18" height="19" viewBox="0 0 18 19"><rect x="0.5" y="1.5" width="4.4" height="4.4" fill="#fff" stroke="#8a8a8a" stroke-width=".8"/><rect x="1.9" y="2.9" width="1.6" height="1.6" fill="#c8743c"/><path d="M6.6 3.7h4.6M12.6 3.7h5" stroke="#5a5a5a" stroke-width="1.2"/><rect x="0.5" y="7.9" width="4.4" height="4.4" fill="#fff" stroke="#8a8a8a" stroke-width=".8"/><rect x="1.9" y="9.3" width="1.6" height="1.6" fill="#c8743c"/><path d="M6.6 10.1h4.6M12.6 10.1h5" stroke="#5a5a5a" stroke-width="1.2"/><rect x="0.5" y="14.3" width="4.4" height="4.4" fill="#fff" stroke="#8a8a8a" stroke-width=".8"/><rect x="1.9" y="15.7" width="1.6" height="1.6" fill="#c8743c"/><path d="M6.6 16.5h4.6M12.6 16.5h5" stroke="#5a5a5a" stroke-width="1.2"/></svg>
<svg style="left:1261.2px;top:552.2px" width="18" height="13.6" viewBox="0 0 18 13.6"><rect x="0.5" y="0.5" width="17" height="12.6" fill="#fff" stroke="#9a9a9a"/><rect x="2" y="2" width="14" height="9.6" fill="#3a7fc4"/><path d="M2 9.4C6 5 10 9.6 16 7V11.6H2z" fill="#3f7d5a"/><path d="M2 2h14v3.4C10 7 6 3.6 2 6z" fill="#a8d4f2"/></svg>
<div class="a" style="left:138px;top:16px;width:1152px;height:559px;border:1px solid #1883d7;pointer-events:none;"></div>
</body></html>
